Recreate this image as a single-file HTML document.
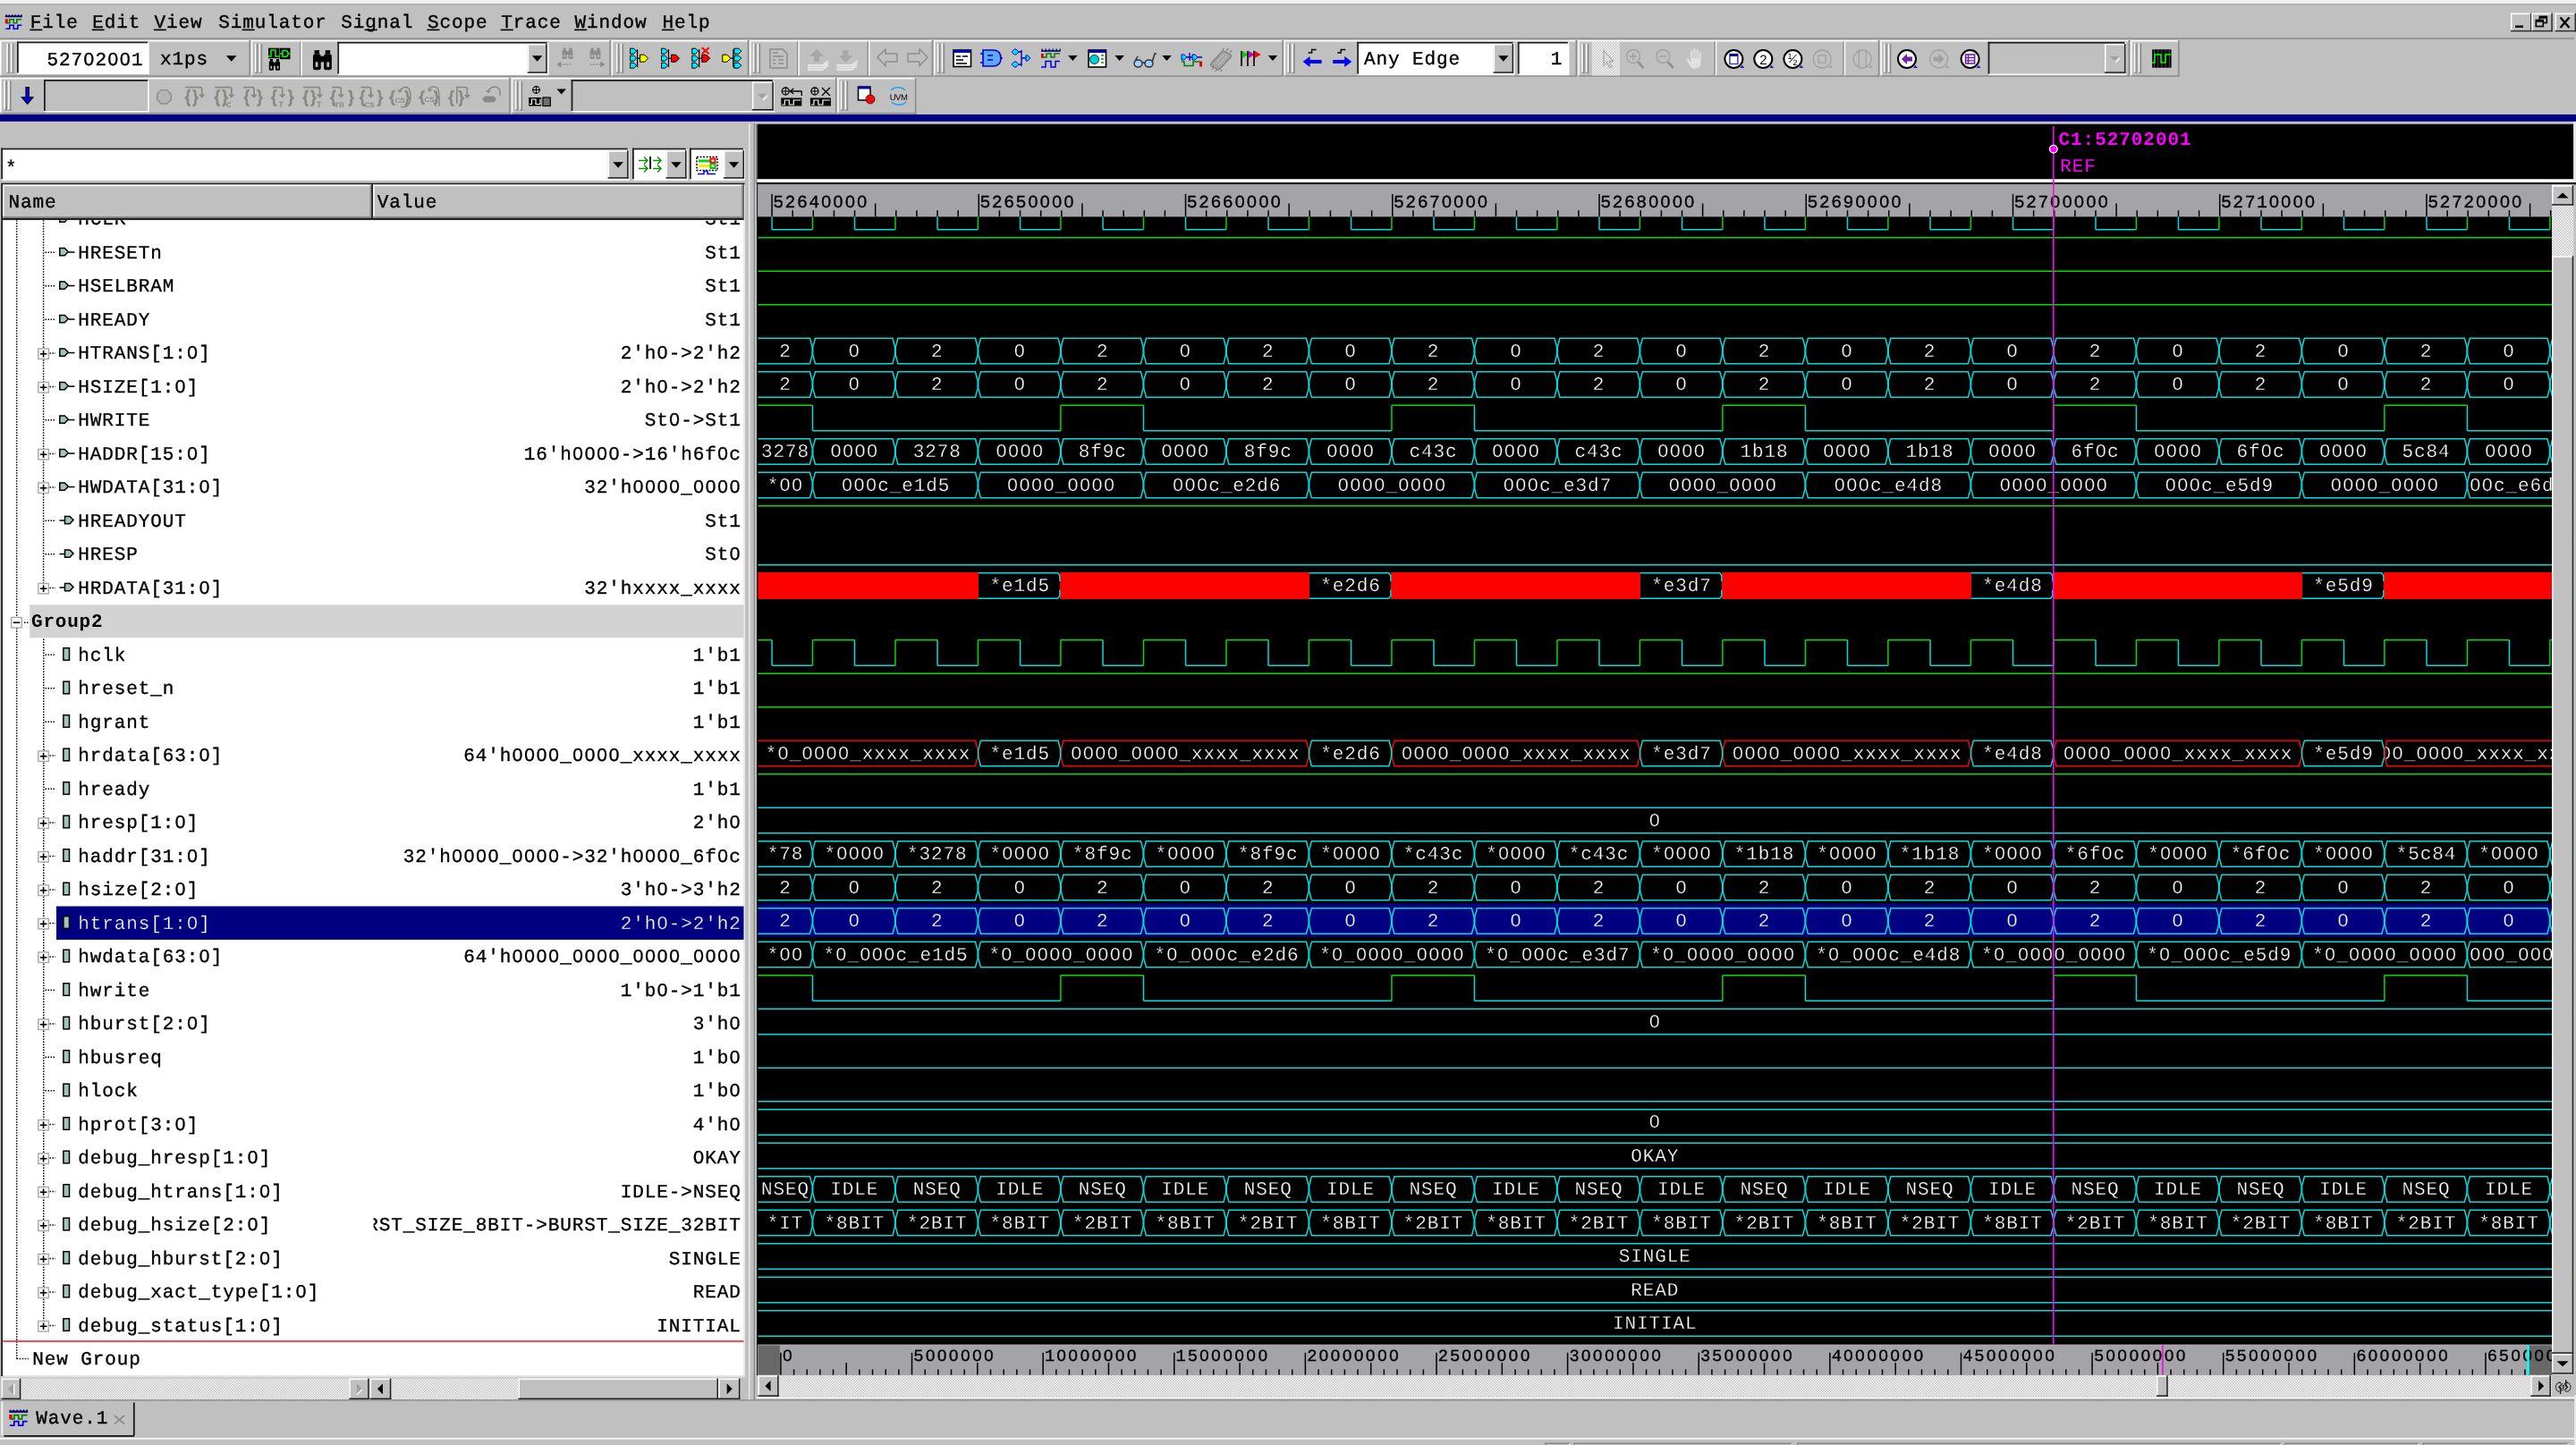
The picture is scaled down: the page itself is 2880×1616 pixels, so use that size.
<!DOCTYPE html>
<html><head><meta charset="utf-8"><title>nWave</title>
<style>html,body{margin:0;padding:0;width:2880px;height:1616px;overflow:hidden;background:#c0c0c0}
svg{display:block;will-change:transform}</style></head><body>
<svg width="2880" height="1616" viewBox="0 0 2880 1616" text-rendering="geometricPrecision">
<defs><pattern id="dith" x="0" y="0" width="3" height="3" patternUnits="userSpaceOnUse"><rect width="3" height="3" fill="#c8c8c8"/><rect width="1.5" height="1.5" fill="#f4f4f4"/><rect x="1.5" y="1.5" width="1.5" height="1.5" fill="#f4f4f4"/></pattern>
<clipPath id="listclip"><rect x="3.2" y="246.2" width="828.5" height="1292.4"/></clipPath>
<clipPath id="valclip"><rect x="417.6" y="246.2" width="414" height="1292.4"/></clipPath>
<clipPath id="rulclip"><rect x="847.4" y="206.4" width="2005.6" height="36"/></clipPath>
<clipPath id="wclip"><rect x="847.4" y="242.4" width="2005.6" height="1261.2"/></clipPath>
<clipPath id="clipR8"><rect x="2759.87" y="0" width="400" height="1616"/></clipPath>
<clipPath id="clipR16"><rect x="2667.37" y="0" width="400" height="1616"/></clipPath>
<clipPath id="clipR22"><rect x="2759.87" y="0" width="400" height="1616"/></clipPath>
<clipPath id="bclip"><rect x="847.4" y="1504.3" width="2005.6" height="33.5"/></clipPath></defs>
<rect x="0" y="0" width="2880" height="1616" fill="#c0c0c0" />
<rect x="0" y="0" width="2880" height="4.2" fill="#efefef" />
<rect x="0" y="4.2" width="2880" height="1.2" fill="#a8a8a8" />
<text x="33.8" y="31" font-family="'Liberation Mono', monospace" font-size="21" letter-spacing="0.9" font-weight="normal" fill="#000000" text-anchor="start" stroke="#000" stroke-width="0.35">File</text>
<rect x="33.3" y="32.6" width="14" height="1.6" fill="#000000" />
<text x="103.2" y="31" font-family="'Liberation Mono', monospace" font-size="21" letter-spacing="0.9" font-weight="normal" fill="#000000" text-anchor="start" stroke="#000" stroke-width="0.35">Edit</text>
<rect x="102.7" y="32.6" width="14" height="1.6" fill="#000000" />
<text x="172.4" y="31" font-family="'Liberation Mono', monospace" font-size="21" letter-spacing="0.9" font-weight="normal" fill="#000000" text-anchor="start" stroke="#000" stroke-width="0.35">View</text>
<rect x="171.9" y="32.6" width="14" height="1.6" fill="#000000" />
<text x="244.2" y="31" font-family="'Liberation Mono', monospace" font-size="21" letter-spacing="0.9" font-weight="normal" fill="#000000" text-anchor="start" stroke="#000" stroke-width="0.35">Simulator</text>
<rect x="270.7" y="32.6" width="14" height="1.6" fill="#000000" />
<text x="381.2" y="31" font-family="'Liberation Mono', monospace" font-size="21" letter-spacing="0.9" font-weight="normal" fill="#000000" text-anchor="start" stroke="#000" stroke-width="0.35">Signal</text>
<rect x="407.7" y="32.6" width="14" height="1.6" fill="#000000" />
<text x="477.9" y="31" font-family="'Liberation Mono', monospace" font-size="21" letter-spacing="0.9" font-weight="normal" fill="#000000" text-anchor="start" stroke="#000" stroke-width="0.35">Scope</text>
<rect x="477.4" y="32.6" width="14" height="1.6" fill="#000000" />
<text x="560.2" y="31" font-family="'Liberation Mono', monospace" font-size="21" letter-spacing="0.9" font-weight="normal" fill="#000000" text-anchor="start" stroke="#000" stroke-width="0.35">Trace</text>
<rect x="559.7" y="32.6" width="14" height="1.6" fill="#000000" />
<text x="642.6" y="31" font-family="'Liberation Mono', monospace" font-size="21" letter-spacing="0.9" font-weight="normal" fill="#000000" text-anchor="start" stroke="#000" stroke-width="0.35">Window</text>
<rect x="642.1" y="32.6" width="14" height="1.6" fill="#000000" />
<text x="740.4" y="31" font-family="'Liberation Mono', monospace" font-size="21" letter-spacing="0.9" font-weight="normal" fill="#000000" text-anchor="start" stroke="#000" stroke-width="0.35">Help</text>
<rect x="739.9" y="32.6" width="14" height="1.6" fill="#000000" />
<g transform="translate(5.8,16.3) scale(1)"><rect x="0" y="1" width="19" height="2" fill="#000070"/><rect x="0.5" y="0" width="1.3" height="2" fill="#000070"/><rect x="3.9" y="0" width="1.3" height="2" fill="#000070"/><rect x="7.3" y="0" width="1.3" height="2" fill="#000070"/><rect x="10.7" y="0" width="1.3" height="2" fill="#000070"/><rect x="14.1" y="0" width="1.3" height="2" fill="#000070"/><rect x="17.5" y="0" width="1.3" height="2" fill="#000070"/><rect x="0" y="5" width="3" height="5" fill="#e00000"/><polyline points="2,9.5 5,9.5 5,5.5 9.5,5.5 9.5,9.5 13,9.5 13,5.5 18.5,5.5" fill="none" stroke="#008000" stroke-width="1.6"/><polyline points="0.5,16 5,16 5,12 9.5,12 9.5,16 14,16 14,12 18.5,12" fill="none" stroke="#0000e0" stroke-width="1.6"/></g>
<rect x="2807" y="14.6" width="23.5" height="20.8" fill="#c0c0c0" />
<rect x="2807" y="14.6" width="23.5" height="1.5" fill="#ffffff" />
<rect x="2807" y="14.6" width="1.5" height="20.8" fill="#ffffff" />
<rect x="2807" y="33.9" width="23.5" height="1.5" fill="#303030" />
<rect x="2829" y="14.6" width="1.5" height="20.8" fill="#303030" />
<rect x="2812" y="28.5" width="9" height="2.4" fill="#000000" />
<rect x="2830.3" y="14.6" width="23.5" height="20.8" fill="#c0c0c0" />
<rect x="2830.3" y="14.6" width="23.5" height="1.5" fill="#ffffff" />
<rect x="2830.3" y="14.6" width="1.5" height="20.8" fill="#ffffff" />
<rect x="2830.3" y="33.9" width="23.5" height="1.5" fill="#303030" />
<rect x="2852.3" y="14.6" width="1.5" height="20.8" fill="#303030" />
<rect x="2839.3" y="18.5" width="8" height="7" fill="none" stroke="#000" stroke-width="1.6"/>
<rect x="2835.3" y="22.5" width="8" height="7" fill="#c0c0c0" stroke="#000" stroke-width="1.6"/>
<rect x="2835.3" y="22.5" width="8" height="2.2" fill="#000000" />
<rect x="2839.3" y="18.5" width="8" height="2.2" fill="#000000" />
<rect x="2856.5" y="14.6" width="23.5" height="20.8" fill="#c0c0c0" />
<rect x="2856.5" y="14.6" width="23.5" height="1.5" fill="#ffffff" />
<rect x="2856.5" y="14.6" width="1.5" height="20.8" fill="#ffffff" />
<rect x="2856.5" y="33.9" width="23.5" height="1.5" fill="#303030" />
<rect x="2878.5" y="14.6" width="1.5" height="20.8" fill="#303030" />
<path d="M2862.5,19.5 L2872.5,31 M2872.5,19.5 L2862.5,31" stroke="#000" stroke-width="2.4"/>
<rect x="0" y="42.3" width="2878" height="1.5" fill="#8c8c8c" />
<rect x="0" y="45" width="279.9" height="1.5" fill="#ffffff" />
<rect x="0" y="45" width="1.5" height="40.8" fill="#ffffff" />
<rect x="278.4" y="45" width="1.5" height="40.8" fill="#8a8a8a" />
<rect x="0" y="84.3" width="279.9" height="1.5" fill="#8a8a8a" />
<rect x="280.8" y="45" width="402" height="1.5" fill="#ffffff" />
<rect x="280.8" y="45" width="1.5" height="40.8" fill="#ffffff" />
<rect x="681.3" y="45" width="1.5" height="40.8" fill="#8a8a8a" />
<rect x="280.8" y="84.3" width="402" height="1.5" fill="#8a8a8a" />
<rect x="683.6" y="45" width="153.6" height="1.5" fill="#ffffff" />
<rect x="683.6" y="45" width="1.5" height="40.8" fill="#ffffff" />
<rect x="835.7" y="45" width="1.5" height="40.8" fill="#8a8a8a" />
<rect x="683.6" y="84.3" width="153.6" height="1.5" fill="#8a8a8a" />
<rect x="838" y="45" width="205.2" height="1.5" fill="#ffffff" />
<rect x="838" y="45" width="1.5" height="40.8" fill="#ffffff" />
<rect x="1041.7" y="45" width="1.5" height="40.8" fill="#8a8a8a" />
<rect x="838" y="84.3" width="205.2" height="1.5" fill="#8a8a8a" />
<rect x="1044" y="45" width="390.8" height="1.5" fill="#ffffff" />
<rect x="1044" y="45" width="1.5" height="40.8" fill="#ffffff" />
<rect x="1433.3" y="45" width="1.5" height="40.8" fill="#8a8a8a" />
<rect x="1044" y="84.3" width="390.8" height="1.5" fill="#8a8a8a" />
<rect x="1435.6" y="45" width="327.4" height="1.5" fill="#ffffff" />
<rect x="1435.6" y="45" width="1.5" height="40.8" fill="#ffffff" />
<rect x="1761.5" y="45" width="1.5" height="40.8" fill="#8a8a8a" />
<rect x="1435.6" y="84.3" width="327.4" height="1.5" fill="#8a8a8a" />
<rect x="1764.3" y="45" width="337" height="1.5" fill="#ffffff" />
<rect x="1764.3" y="45" width="1.5" height="40.8" fill="#ffffff" />
<rect x="2099.8" y="45" width="1.5" height="40.8" fill="#8a8a8a" />
<rect x="1764.3" y="84.3" width="337" height="1.5" fill="#8a8a8a" />
<rect x="2102.3" y="45" width="278.7" height="1.5" fill="#ffffff" />
<rect x="2102.3" y="45" width="1.5" height="40.8" fill="#ffffff" />
<rect x="2379.5" y="45" width="1.5" height="40.8" fill="#8a8a8a" />
<rect x="2102.3" y="84.3" width="278.7" height="1.5" fill="#8a8a8a" />
<rect x="2382" y="45" width="54.6" height="1.5" fill="#ffffff" />
<rect x="2382" y="45" width="1.5" height="40.8" fill="#ffffff" />
<rect x="2435.1" y="45" width="1.5" height="40.8" fill="#8a8a8a" />
<rect x="2382" y="84.3" width="54.6" height="1.5" fill="#8a8a8a" />
<rect x="0" y="87" width="570.6" height="1.5" fill="#ffffff" />
<rect x="0" y="87" width="1.5" height="40.6" fill="#ffffff" />
<rect x="569.1" y="87" width="1.5" height="40.6" fill="#8a8a8a" />
<rect x="0" y="126.1" width="570.6" height="1.5" fill="#8a8a8a" />
<rect x="571.8" y="87" width="363.6" height="1.5" fill="#ffffff" />
<rect x="571.8" y="87" width="1.5" height="40.6" fill="#ffffff" />
<rect x="933.9" y="87" width="1.5" height="40.6" fill="#8a8a8a" />
<rect x="571.8" y="126.1" width="363.6" height="1.5" fill="#8a8a8a" />
<rect x="936.2" y="87" width="88.2" height="1.5" fill="#ffffff" />
<rect x="936.2" y="87" width="1.5" height="40.6" fill="#ffffff" />
<rect x="1022.9" y="87" width="1.5" height="40.6" fill="#8a8a8a" />
<rect x="936.2" y="126.1" width="88.2" height="1.5" fill="#8a8a8a" />
<rect x="7.3" y="48.8" width="1.6" height="33" fill="#ffffff" />
<rect x="8.9" y="48.8" width="1.8" height="33" fill="#8c8c8c" />
<rect x="7.3" y="80.6" width="3.4" height="1.2" fill="#8c8c8c" />
<rect x="12.1" y="48.8" width="1.6" height="33" fill="#ffffff" />
<rect x="13.7" y="48.8" width="1.8" height="33" fill="#8c8c8c" />
<rect x="12.1" y="80.6" width="3.4" height="1.2" fill="#8c8c8c" />
<rect x="285" y="48.8" width="1.6" height="33" fill="#ffffff" />
<rect x="286.6" y="48.8" width="1.8" height="33" fill="#8c8c8c" />
<rect x="285" y="80.6" width="3.4" height="1.2" fill="#8c8c8c" />
<rect x="289.8" y="48.8" width="1.6" height="33" fill="#ffffff" />
<rect x="291.4" y="48.8" width="1.8" height="33" fill="#8c8c8c" />
<rect x="289.8" y="80.6" width="3.4" height="1.2" fill="#8c8c8c" />
<rect x="689" y="48.8" width="1.6" height="33" fill="#ffffff" />
<rect x="690.6" y="48.8" width="1.8" height="33" fill="#8c8c8c" />
<rect x="689" y="80.6" width="3.4" height="1.2" fill="#8c8c8c" />
<rect x="693.8" y="48.8" width="1.6" height="33" fill="#ffffff" />
<rect x="695.4" y="48.8" width="1.8" height="33" fill="#8c8c8c" />
<rect x="693.8" y="80.6" width="3.4" height="1.2" fill="#8c8c8c" />
<rect x="842" y="48.8" width="1.6" height="33" fill="#ffffff" />
<rect x="843.6" y="48.8" width="1.8" height="33" fill="#8c8c8c" />
<rect x="842" y="80.6" width="3.4" height="1.2" fill="#8c8c8c" />
<rect x="846.8" y="48.8" width="1.6" height="33" fill="#ffffff" />
<rect x="848.4" y="48.8" width="1.8" height="33" fill="#8c8c8c" />
<rect x="846.8" y="80.6" width="3.4" height="1.2" fill="#8c8c8c" />
<rect x="1048" y="48.8" width="1.6" height="33" fill="#ffffff" />
<rect x="1049.6" y="48.8" width="1.8" height="33" fill="#8c8c8c" />
<rect x="1048" y="80.6" width="3.4" height="1.2" fill="#8c8c8c" />
<rect x="1052.8" y="48.8" width="1.6" height="33" fill="#ffffff" />
<rect x="1054.4" y="48.8" width="1.8" height="33" fill="#8c8c8c" />
<rect x="1052.8" y="80.6" width="3.4" height="1.2" fill="#8c8c8c" />
<rect x="1439.5" y="48.8" width="1.6" height="33" fill="#ffffff" />
<rect x="1441.1" y="48.8" width="1.8" height="33" fill="#8c8c8c" />
<rect x="1439.5" y="80.6" width="3.4" height="1.2" fill="#8c8c8c" />
<rect x="1444.3" y="48.8" width="1.6" height="33" fill="#ffffff" />
<rect x="1445.9" y="48.8" width="1.8" height="33" fill="#8c8c8c" />
<rect x="1444.3" y="80.6" width="3.4" height="1.2" fill="#8c8c8c" />
<rect x="1768.2" y="48.8" width="1.6" height="33" fill="#ffffff" />
<rect x="1769.8" y="48.8" width="1.8" height="33" fill="#8c8c8c" />
<rect x="1768.2" y="80.6" width="3.4" height="1.2" fill="#8c8c8c" />
<rect x="1773" y="48.8" width="1.6" height="33" fill="#ffffff" />
<rect x="1774.6" y="48.8" width="1.8" height="33" fill="#8c8c8c" />
<rect x="1773" y="80.6" width="3.4" height="1.2" fill="#8c8c8c" />
<rect x="2106.2" y="48.8" width="1.6" height="33" fill="#ffffff" />
<rect x="2107.8" y="48.8" width="1.8" height="33" fill="#8c8c8c" />
<rect x="2106.2" y="80.6" width="3.4" height="1.2" fill="#8c8c8c" />
<rect x="2111" y="48.8" width="1.6" height="33" fill="#ffffff" />
<rect x="2112.6" y="48.8" width="1.8" height="33" fill="#8c8c8c" />
<rect x="2111" y="80.6" width="3.4" height="1.2" fill="#8c8c8c" />
<rect x="2386" y="48.8" width="1.6" height="33" fill="#ffffff" />
<rect x="2387.6" y="48.8" width="1.8" height="33" fill="#8c8c8c" />
<rect x="2386" y="80.6" width="3.4" height="1.2" fill="#8c8c8c" />
<rect x="2390.8" y="48.8" width="1.6" height="33" fill="#ffffff" />
<rect x="2392.4" y="48.8" width="1.8" height="33" fill="#8c8c8c" />
<rect x="2390.8" y="80.6" width="3.4" height="1.2" fill="#8c8c8c" />
<rect x="4.4" y="90.6" width="1.6" height="33.2" fill="#ffffff" />
<rect x="6" y="90.6" width="1.8" height="33.2" fill="#8c8c8c" />
<rect x="4.4" y="122.6" width="3.4" height="1.2" fill="#8c8c8c" />
<rect x="9.2" y="90.6" width="1.6" height="33.2" fill="#ffffff" />
<rect x="10.8" y="90.6" width="1.8" height="33.2" fill="#8c8c8c" />
<rect x="9.2" y="122.6" width="3.4" height="1.2" fill="#8c8c8c" />
<rect x="576" y="90.6" width="1.6" height="33.2" fill="#ffffff" />
<rect x="577.6" y="90.6" width="1.8" height="33.2" fill="#8c8c8c" />
<rect x="576" y="122.6" width="3.4" height="1.2" fill="#8c8c8c" />
<rect x="580.8" y="90.6" width="1.6" height="33.2" fill="#ffffff" />
<rect x="582.4" y="90.6" width="1.8" height="33.2" fill="#8c8c8c" />
<rect x="580.8" y="122.6" width="3.4" height="1.2" fill="#8c8c8c" />
<rect x="940" y="90.6" width="1.6" height="33.2" fill="#ffffff" />
<rect x="941.6" y="90.6" width="1.8" height="33.2" fill="#8c8c8c" />
<rect x="940" y="122.6" width="3.4" height="1.2" fill="#8c8c8c" />
<rect x="944.8" y="90.6" width="1.6" height="33.2" fill="#ffffff" />
<rect x="946.4" y="90.6" width="1.8" height="33.2" fill="#8c8c8c" />
<rect x="944.8" y="122.6" width="3.4" height="1.2" fill="#8c8c8c" />
<rect x="19" y="46.5" width="147.5" height="36.5" fill="#ffffff" />
<rect x="19" y="46.5" width="147.5" height="1.8" fill="#202020" />
<rect x="19" y="46.5" width="1.8" height="36.5" fill="#202020" />
<rect x="19" y="81.5" width="147.5" height="1.5" fill="#ffffff" />
<rect x="165" y="46.5" width="1.5" height="36.5" fill="#ffffff" />
<text x="52.4" y="72.7" font-family="'Liberation Mono', monospace" font-size="21" letter-spacing="0.9" font-weight="normal" fill="#000000" text-anchor="start" stroke="#000" stroke-width="0.35">52702001</text><rect x="97.2" y="63" width="4" height="5" fill="#ffffff"/><rect x="124.2" y="63" width="4" height="5" fill="#ffffff"/><rect x="137.7" y="63" width="4" height="5" fill="#ffffff"/>
<text x="179" y="72.3" font-family="'Liberation Mono', monospace" font-size="21" letter-spacing="0.9" font-weight="normal" fill="#000000" text-anchor="start" stroke="#000" stroke-width="0.35">x1ps</text>
<polygon points="252.95,62.25 264.45,62.25 258.7,68.75" fill="#000000"/>
<rect x="300" y="53.7" width="12.5" height="11.5" fill="#000000" />
<rect x="313" y="53.7" width="11.5" height="12.5" fill="#000000" />
<polyline points="300,63 303,63 303,56 308,56 308,63 313,63" fill="none" stroke="#00ff00" stroke-width="1.5"/>
<path d="M313,60 h3 M316,56.5 h3 q3,0 3,3.5 q0,3.5 -3,3.5 h-3 z M322,60 h2.5" fill="none" stroke="#00ff00" stroke-width="1.5"/>
<g transform="translate(300.5,66) scale(0.64)" fill="#000000"><rect x="2" y="0" width="5" height="4"/><rect x="13" y="0" width="5" height="4"/><rect x="0.5" y="4" width="8" height="16" rx="2"/><rect x="11.5" y="4" width="8" height="16" rx="2"/><rect x="7" y="6" width="6" height="6"/><rect x="3" y="12" width="2.5" height="5" fill="#c0c0c0"/><rect x="14.5" y="12" width="2.5" height="5" fill="#c0c0c0"/></g>
<rect x="335" y="46.4" width="1.4" height="38" fill="#8c8c8c" />
<rect x="336.4" y="46.4" width="1.4" height="38" fill="#ffffff" />
<g transform="translate(349.4,56.2) scale(1.1)" fill="#000000"><rect x="2" y="0" width="5" height="4"/><rect x="13" y="0" width="5" height="4"/><rect x="0.5" y="4" width="8" height="16" rx="2"/><rect x="11.5" y="4" width="8" height="16" rx="2"/><rect x="7" y="6" width="6" height="6"/><rect x="3" y="12" width="2.5" height="5" fill="#c0c0c0"/><rect x="14.5" y="12" width="2.5" height="5" fill="#c0c0c0"/></g>
<rect x="377.3" y="46.8" width="236" height="37.3" fill="#ffffff" />
<rect x="377.3" y="46.8" width="236" height="1.8" fill="#202020" />
<rect x="377.3" y="46.8" width="1.8" height="37.3" fill="#202020" />
<rect x="377.3" y="82.6" width="236" height="1.5" fill="#ffffff" />
<rect x="611.8" y="46.8" width="1.5" height="37.3" fill="#ffffff" />
<rect x="589.7" y="49" width="22" height="32.8" fill="#c0c0c0" />
<rect x="589.7" y="49" width="22" height="1.5" fill="#ffffff" />
<rect x="589.7" y="49" width="1.5" height="32.8" fill="#ffffff" />
<rect x="589.7" y="80.3" width="22" height="1.5" fill="#202020" />
<rect x="610.2" y="49" width="1.5" height="32.8" fill="#202020" />
<polygon points="594.95,62.25 606.45,62.25 600.7,68.75" fill="#000000"/>
<g transform="translate(628.3,53.5) scale(0.62)" fill="#8c8c8c"><rect x="2" y="0" width="5" height="4"/><rect x="13" y="0" width="5" height="4"/><rect x="0.5" y="4" width="8" height="16" rx="2"/><rect x="11.5" y="4" width="8" height="16" rx="2"/><rect x="7" y="6" width="6" height="6"/><rect x="3" y="12" width="2.5" height="5" fill="#c0c0c0"/><rect x="14.5" y="12" width="2.5" height="5" fill="#c0c0c0"/></g>
<path d="M622.3,72 l5,-3.5 v7 z" fill="#8c8c8c"/>
<path d="M626.3,72 h12" stroke="#8c8c8c" stroke-width="1.3" stroke-dasharray="2 1.5"/>
<g transform="translate(659.3,53.5) scale(0.62)" fill="#8c8c8c"><rect x="2" y="0" width="5" height="4"/><rect x="13" y="0" width="5" height="4"/><rect x="0.5" y="4" width="8" height="16" rx="2"/><rect x="11.5" y="4" width="8" height="16" rx="2"/><rect x="7" y="6" width="6" height="6"/><rect x="3" y="12" width="2.5" height="5" fill="#c0c0c0"/><rect x="14.5" y="12" width="2.5" height="5" fill="#c0c0c0"/></g>
<path d="M676.3,72 l-5,-3.5 v7 z" fill="#8c8c8c"/>
<path d="M659.3,72 h12" stroke="#8c8c8c" stroke-width="1.3" stroke-dasharray="2 1.5"/>
<g transform="translate(704.6,53.2)"><path d="M0,1 h4 l3,3 l-3,3 h-4 z" fill="#00e8ff" stroke="#000" stroke-width="1"/><path d="M0,9 h4 l3,3 l-3,3 h-4 z" fill="#00e8ff" stroke="#000" stroke-width="1"/><path d="M0,17 h4 l3,3 l-3,3 h-4 z" fill="#00e8ff" stroke="#000" stroke-width="1"/><path d="M8,2 v20" stroke="#000" stroke-width="1.2"/><path d="M8,12 h3" stroke="#000" stroke-width="1.2"/><path d="M11,8 h5 l4,4 l-4,4 h-5 z" fill="#ffff00" stroke="#000" stroke-width="1"/></g>
<g transform="translate(739.5,53.2)"><path d="M0,1 h4 l3,3 l-3,3 h-4 z" fill="#00e8ff" stroke="#000" stroke-width="1"/><path d="M0,9 h4 l3,3 l-3,3 h-4 z" fill="#00e8ff" stroke="#000" stroke-width="1"/><path d="M0,17 h4 l3,3 l-3,3 h-4 z" fill="#00e8ff" stroke="#000" stroke-width="1"/><path d="M8,2 v20" stroke="#000" stroke-width="1.2"/><path d="M8,12 h3" stroke="#000" stroke-width="1.2"/><path d="M11,8 h5 l4,4 l-4,4 h-5 z" fill="#ff0000" stroke="#000" stroke-width="1"/></g>
<g transform="translate(773.7,53.2)"><path d="M0,1 h4 l3,3 l-3,3 h-4 z" fill="#00e8ff" stroke="#000" stroke-width="1"/><path d="M0,9 h4 l3,3 l-3,3 h-4 z" fill="#00e8ff" stroke="#000" stroke-width="1"/><path d="M0,17 h4 l3,3 l-3,3 h-4 z" fill="#00e8ff" stroke="#000" stroke-width="1"/><path d="M8,2 v20" stroke="#000" stroke-width="1.2"/><path d="M8,12 h3" stroke="#000" stroke-width="1.2"/><path d="M11,8 h5 l4,4 l-4,4 h-5 z" fill="#ff0000" stroke="#000" stroke-width="1"/><path d="M11,0 l8,7 M19,0 l-8,7" stroke="#ff0000" stroke-width="2"/></g>
<g transform="translate(807.8,53.2)"><path d="M0,8 h5 l4,4 l-4,4 h-5 z" fill="#ffff00" stroke="#000" stroke-width="1"/><path d="M9,12 h3 M12,2 v20" stroke="#000" stroke-width="1.2"/><path d="M13,1 h5 l3,3 l-3,3 h-5 z" fill="#00e8ff" stroke="#000" stroke-width="1"/><path d="M13,9 h5 l3,3 l-3,3 h-5 z" fill="#00e8ff" stroke="#000" stroke-width="1"/><path d="M13,17 h5 l3,3 l-3,3 h-5 z" fill="#00e8ff" stroke="#000" stroke-width="1"/></g>
<path d="M861,55 h14 l5,5 v16 h-19 z" fill="none" stroke="#8c8c8c" stroke-width="1.5"/>
<path d="M864,59 h6 M864,63 h12 M864,67 h3 M870,67 h6 M864,71 h3 M870,71 h6" stroke="#8c8c8c" stroke-width="1.4"/>
<rect x="891" y="46.4" width="1.4" height="38" fill="#8c8c8c" />
<rect x="892.4" y="46.4" width="1.4" height="38" fill="#ffffff" />
<path d="M913,55 l8,8 h-5 v6 h-6 v-6 h-5 z" fill="#a8a8a8"/>
<path d="M903,73 h17 l6,-5" fill="none" stroke="#f0f0f0" stroke-width="1.3"/>
<path d="M903,75.5 h17 l6,-5" fill="none" stroke="#f0f0f0" stroke-width="1.3"/>
<path d="M903,78 h17 l6,-5" fill="none" stroke="#f0f0f0" stroke-width="1.3"/>
<path d="M945.4,70 l8,-8 h-5 v-6 h-6 v6 h-5 z" fill="#a8a8a8"/>
<path d="M935.4,73 h17 l6,-5" fill="none" stroke="#f0f0f0" stroke-width="1.3"/>
<path d="M935.4,75.5 h17 l6,-5" fill="none" stroke="#f0f0f0" stroke-width="1.3"/>
<path d="M935.4,78 h17 l6,-5" fill="none" stroke="#f0f0f0" stroke-width="1.3"/>
<rect x="969.6" y="46.4" width="1.4" height="38" fill="#8c8c8c" />
<rect x="971" y="46.4" width="1.4" height="38" fill="#ffffff" />
<path d="M981,64 l9,-9 v5 h13 v9 h-13 v5 z" fill="none" stroke="#8c8c8c" stroke-width="1.4"/>
<path d="M1037,64 l-9,-9 v5 h-13 v9 h13 v5 z" fill="none" stroke="#8c8c8c" stroke-width="1.4"/>
<rect x="1066" y="56" width="19.5" height="18.5" fill="#fff" stroke="#000" stroke-width="1.6"/>
<rect x="1066" y="56" width="19.5" height="3" fill="#0000c0" />
<path d="M1069,63 h5 M1076,63 h6 M1069,67 h8 M1069,71 h12" stroke="#000" stroke-width="1.3"/>
<path d="M1099,56 h11 q9,0 9,9 q0,9 -9,9 h-11 z" fill="#60a8ff" stroke="#0000d0" stroke-width="1.6"/>
<path d="M1096,60 h3 M1096,70 h3 M1119,65 h2 M1104,62 h6 M1104,67 h6" stroke="#0000d0" stroke-width="1.4"/>
<path d="M1136,58 h6 M1136,72 h6 M1142,56 v18 M1142,65 h5" stroke="#0000d0" stroke-width="1.4"/>
<path d="M1131,58 l3,-3 h2 l3,3 l-3,3 h-2 z" fill="#00e0ff" stroke="#0000d0" stroke-width="1"/>
<path d="M1131,72 l3,-3 h2 l3,3 l-3,3 h-2 z" fill="#00e0ff" stroke="#0000d0" stroke-width="1"/>
<path d="M1147,62 h2 l3,3 l-3,3 h-2 z" fill="#00e0ff" stroke="#0000d0" stroke-width="1"/>
<path d="M1164,57 h21" stroke="#000070" stroke-width="1.6"/>
<rect x="1164.5" y="54.5" width="1.3" height="3" fill="#000070" />
<rect x="1168.5" y="54.5" width="1.3" height="3" fill="#000070" />
<rect x="1172.5" y="54.5" width="1.3" height="3" fill="#000070" />
<rect x="1176.5" y="54.5" width="1.3" height="3" fill="#000070" />
<rect x="1180.5" y="54.5" width="1.3" height="3" fill="#000070" />
<rect x="1184.5" y="54.5" width="1.3" height="3" fill="#000070" />
<rect x="1164" y="60" width="2.8" height="5" fill="#e00000" />
<polyline points="1166,64 1170,64 1170,60 1175,60 1175,64 1179,64 1179,60 1185,60" fill="none" stroke="#008000" stroke-width="1.5"/>
<polyline points="1164,75 1169,75 1169,68.5 1175,68.5 1175,75 1180,75 1180,68.5 1185,68.5" fill="none" stroke="#0000e0" stroke-width="1.5"/>
<polygon points="1194.15,62 1204.65,62 1199.4,68" fill="#000000"/>
<rect x="1217" y="56" width="19.5" height="19" fill="#fff" stroke="#000" stroke-width="1.6"/>
<rect x="1217" y="56" width="19.5" height="3" fill="#0000c0" />
<circle cx="1223.5" cy="66.5" r="5" fill="#00d0d0" stroke="#004040" stroke-width="1"/>
<path d="M1231,62 h3 M1231,66 h3 M1231,70 h3" stroke="#00a000" stroke-width="1.5"/>
<polygon points="1246.35,62 1256.85,62 1251.6,68" fill="#000000"/>
<path d="M1268,71 a4.5,4 0 1 0 9,0 a4.5,4 0 1 0 -9,0 M1280,71 a4.5,4 0 1 0 9,0 a4.5,4 0 1 0 -9,0 M1277,70 h3 M1268,70 l4,-7 M1288,70 l3,-10 h2" fill="#a0d0ff" stroke="#303030" stroke-width="1.5"/>
<polygon points="1299.25,62 1309.75,62 1304.5,68" fill="#000000"/>
<path d="M1321,61 h3 l3,3 l-3,3 h-3 z M1333,61 h3 l3,3 l-3,3 h-3 z" fill="#00e0ff" stroke="#0000d0" stroke-width="1"/>
<path d="M1327,64 h6 M1330,59 v9 M1339,64 h5" stroke="#0000d0" stroke-width="1.3"/>
<polyline points="1321,69 1324,69 1324,73.5 1334,73.5 1334,69 1341,69" fill="none" stroke="#008000" stroke-width="1.5"/>
<rect x="1341" y="68.5" width="3" height="6" fill="#e00000" />
<path d="M1354,71 l12,-13 q1.5,-1.5 3,-0.5 l7,4 q1,1 0,2.5 l-12,13 q-1.5,1.5 -3,0.5 l-7,-4 q-1,-1 0,-2.5 z" fill="#a4a4a4" stroke="#7c7c7c" stroke-width="1.2"/>
<path d="M1357,75 l-2,3 M1361,77 l-2,3 M1366,78 l-1,2 M1371,57 l2,-3 M1375,59 l2,-3 M1367,56 l1,-2" stroke="#7c7c7c" stroke-width="1.3"/>
<path d="M1359,71 l10,-11 M1362,73 l10,-11" stroke="#c8c8c8" stroke-width="1"/>
<path d="M1388,57 v17" stroke="#000" stroke-width="1.6"/>
<path d="M1388.8,57 l7,4 l-7,4 z" fill="#00d000"/>
<path d="M1395,57 v17" stroke="#000" stroke-width="1.6"/>
<path d="M1395.8,57 l7,4 l-7,4 z" fill="#c000c0"/>
<path d="M1402,57 v17" stroke="#000" stroke-width="1.6"/>
<path d="M1402.8,57 l7,4 l-7,4 z" fill="#ff0000"/>
<polygon points="1417.75,62 1428.25,62 1423,68" fill="#000000"/>
<path d="M1462.6,59 h4 v-3.5 h5" fill="none" stroke="#000" stroke-width="1.4"/>
<path d="M1456.6,69 l8,-6 v4 h13 v4 h-13 v4 z" fill="#0000ff"/>
<path d="M1495.2,59 h4 v-3.5 h5" fill="none" stroke="#000" stroke-width="1.4"/>
<path d="M1511.2,69 l-8,-6 v4 h-13 v4 h13 v4 z" fill="#0000ff"/>
<rect x="1517.2" y="46.8" width="176" height="37.3" fill="#ffffff" />
<rect x="1517.2" y="46.8" width="176" height="1.8" fill="#202020" />
<rect x="1517.2" y="46.8" width="1.8" height="37.3" fill="#202020" />
<rect x="1517.2" y="82.6" width="176" height="1.5" fill="#ffffff" />
<rect x="1691.7" y="46.8" width="1.5" height="37.3" fill="#ffffff" />
<text x="1525" y="72.3" font-family="'Liberation Mono', monospace" font-size="21" letter-spacing="0.9" font-weight="normal" fill="#000000" text-anchor="start" stroke="#000" stroke-width="0.35">Any Edge</text>
<rect x="1669.6" y="49" width="22.5" height="32.8" fill="#c0c0c0" />
<rect x="1669.6" y="49" width="22.5" height="1.5" fill="#ffffff" />
<rect x="1669.6" y="49" width="1.5" height="32.8" fill="#ffffff" />
<rect x="1669.6" y="80.3" width="22.5" height="1.5" fill="#202020" />
<rect x="1690.6" y="49" width="1.5" height="32.8" fill="#202020" />
<polygon points="1675.05,62.25 1686.55,62.25 1680.8,68.75" fill="#000000"/>
<rect x="1696.8" y="46.8" width="57.5" height="37.3" fill="#ffffff" />
<rect x="1696.8" y="46.8" width="57.5" height="1.8" fill="#202020" />
<rect x="1696.8" y="46.8" width="1.8" height="37.3" fill="#202020" />
<rect x="1696.8" y="82.6" width="57.5" height="1.5" fill="#ffffff" />
<rect x="1752.8" y="46.8" width="1.5" height="37.3" fill="#ffffff" />
<text x="1733.7" y="72.3" font-family="'Liberation Mono', monospace" font-size="21" letter-spacing="0.9" font-weight="normal" fill="#000000" text-anchor="start" stroke="#000" stroke-width="0.35">1</text>
<rect x="1779.8" y="47" width="31.2" height="37.5" fill="url(#dith)" />
<path d="M1793,57 v16 l3.5,-3.5 l3,6 l2.5,-1 l-3,-6 h5 z" fill="none" stroke="#8c8c8c" stroke-width="1.3" stroke-dasharray="1.5 1"/>
<circle cx="1826" cy="63" r="7.5" fill="none" stroke="#a0a0a0" stroke-width="1.4"/>
<path d="M1822,63 h8 M1826,59 v8 M1831,69 l5.5,6" stroke="#a0a0a0" stroke-width="1.5"/>
<path d="M1831.5,69.5 l6,6.5" stroke="#909090" stroke-width="2.6"/>
<circle cx="1859.3" cy="63" r="7.5" fill="none" stroke="#a0a0a0" stroke-width="1.4"/>
<path d="M1855.3,63 h8  M1864.3,69 l5.5,6" stroke="#a0a0a0" stroke-width="1.5"/>
<path d="M1864.8,69.5 l6,6.5" stroke="#909090" stroke-width="2.6"/>
<path d="M1889,74 l-4,-8 q1,-2 3,0 l2,3 v-12 q2,-2 3,0 v8 v-10 q2,-2 3,0 v10 v-9 q2,-2 3,0 v9 v-6 q2,-2 3,0 v10 q0,7 -6,8 h-4 z" fill="#e0e0e0" stroke="#c8c8c8" stroke-width="1"/>
<rect x="1916.5" y="46.4" width="1.4" height="38" fill="#8c8c8c" />
<rect x="1917.9" y="46.4" width="1.4" height="38" fill="#ffffff" />
<circle cx="1938.4" cy="66" r="10" fill="#fff" stroke="#000" stroke-width="2"/>
<path d="M1945.4,76 l5,0 l-2.5,-3 z" fill="#2020a0"/>
<rect x="1933.9" y="60.5" width="9" height="11" fill="#fff" stroke="#4040c0" stroke-width="1.5"/><rect x="1933.9" y="60.5" width="9" height="2.5" fill="#000080"/>
<circle cx="1971.3" cy="66" r="10" fill="#fff" stroke="#000" stroke-width="2"/>
<path d="M1978.3,76 l5,0 l-2.5,-3 z" fill="#2020a0"/>
<text x="1971.3" y="71.5" font-family="Liberation Sans" font-size="15" text-anchor="middle" fill="#000">2</text>
<circle cx="2004.4" cy="66" r="10" fill="#fff" stroke="#000" stroke-width="2"/>
<path d="M2011.4,76 l5,0 l-2.5,-3 z" fill="#2020a0"/>
<text x="1998.4" y="66" font-family="Liberation Sans" font-size="9" fill="#000">1</text><path d="M2000.4,70 l8,-9" stroke="#000" stroke-width="1"/><text x="2004.4" y="73" font-family="Liberation Sans" font-size="9" fill="#000">2</text>
<circle cx="2037.2" cy="66" r="10" fill="none" stroke="#a0a0a0" stroke-width="1.3"/>
<path d="M2044.2,76 l5,0 l-2.5,-3 z" fill="#a0a0a0"/>
<rect x="2033.2" y="62" width="8" height="8" fill="none" stroke="#a0a0a0" stroke-width="1.3"/>
<rect x="2060.4" y="46.4" width="1.4" height="38" fill="#8c8c8c" />
<rect x="2061.8" y="46.4" width="1.4" height="38" fill="#ffffff" />
<circle cx="2082.2" cy="66" r="10" fill="none" stroke="#a0a0a0" stroke-width="1.3"/>
<path d="M2089.2,76 l5,0 l-2.5,-3 z" fill="#a0a0a0"/>
<path d="M2078.2,57 v18 M2086.2,57 v18" stroke="#a0a0a0" stroke-width="1.3"/>
<circle cx="2132" cy="66" r="10" fill="#fff" stroke="#000" stroke-width="2"/>
<path d="M2139,76 l5,0 l-2.5,-3 z" fill="#2020a0"/>
<path d="M2126,66 l6,-6 v3.5 h6 v5 h-6 v3.5 z" fill="#7020a0"/>
<circle cx="2167.6" cy="66" r="10" fill="none" stroke="#a0a0a0" stroke-width="1.3"/>
<path d="M2174.6,76 l5,0 l-2.5,-3 z" fill="#a0a0a0"/>
<path d="M2173.6,66 l-6,-6 v3.5 h-6 v5 h6 v3.5 z" fill="#a0a0a0"/>
<circle cx="2202.6" cy="66" r="10" fill="#fff" stroke="#000" stroke-width="2"/>
<path d="M2209.6,76 l5,0 l-2.5,-3 z" fill="#2020a0"/>
<rect x="2197.6" y="61" width="10" height="10" fill="none" stroke="#7020a0" stroke-width="1.6"/><path d="M2197.6,64.5 h10 M2197.6,67.8 h10 M2200.6,61 v10" stroke="#7020a0" stroke-width="1.3"/>
<rect x="2222.6" y="46.8" width="154.5" height="37.3" fill="#c0c0c0" />
<rect x="2222.6" y="46.8" width="154.5" height="1.8" fill="#202020" />
<rect x="2222.6" y="46.8" width="1.8" height="37.3" fill="#202020" />
<rect x="2222.6" y="82.6" width="154.5" height="1.5" fill="#ffffff" />
<rect x="2375.6" y="46.8" width="1.5" height="37.3" fill="#ffffff" />
<rect x="2353" y="49" width="23.5" height="32.8" fill="#c0c0c0" />
<rect x="2353" y="49" width="23.5" height="1.5" fill="#ffffff" />
<rect x="2353" y="49" width="1.5" height="32.8" fill="#ffffff" />
<rect x="2353" y="80.3" width="23.5" height="1.5" fill="#202020" />
<rect x="2375" y="49" width="1.5" height="32.8" fill="#202020" />
<path d="M2359,63 h10 l-5,5 z" fill="#a0a0a0"/><path d="M2365,70 l5,-5" stroke="#fff" stroke-width="1.2"/>
<rect x="2406.2" y="55.3" width="21.4" height="20.4" fill="#000000" />
<rect x="2408" y="55.3" width="1" height="20.4" fill="#505050" />
<rect x="2412.2" y="55.3" width="1" height="20.4" fill="#505050" />
<rect x="2416.4" y="55.3" width="1" height="20.4" fill="#505050" />
<rect x="2420.6" y="55.3" width="1" height="20.4" fill="#505050" />
<rect x="2424.8" y="55.3" width="1" height="20.4" fill="#505050" />
<polyline points="2406,70 2409,70 2409,61 2416,61 2416,70 2421,70 2421,61 2427.5,61" fill="none" stroke="#00ff00" stroke-width="1.5"/>
<path d="M29,97.6 h3.4 v11.2 h4.6 l-6.3,7.6 l-6.3,-7.6 h4.6 z" fill="#0000ff" stroke="#000" stroke-width="1.2"/>
<rect x="49" y="89.1" width="117.7" height="36.4" fill="#c0c0c0" />
<rect x="49" y="89.1" width="117.7" height="1.8" fill="#202020" />
<rect x="49" y="89.1" width="1.8" height="36.4" fill="#202020" />
<rect x="49" y="124" width="117.7" height="1.5" fill="#ffffff" />
<rect x="165.2" y="89.1" width="1.5" height="36.4" fill="#ffffff" />
<path d="M180.3,100.6 h6.4 l4.5,4.5 v6.4 l-4.5,4.5 h-6.4 l-4.5,-4.5 v-6.4 z" fill="#b6b6b6" stroke="#8c8c8c" stroke-width="1.4"/>
<path d="M213,101 q-3,0 -3,3 v3.5 l-2,2 l2,2 v3.5 q0,3 3,3" fill="none" stroke="#8a8882" stroke-width="2.6"/>
<path d="M215.5,101 q3,0 3,3 v3.5 l2,2 l-2,2 v3.5 q0,3 -3,3" fill="none" stroke="#8a8882" stroke-width="2.6"/>
<path d="M207.3,97.6 h16.4 q2,0 2,2 v7.1" fill="none" stroke="#8a8882" stroke-width="1.7"/>
<path d="M221.95,105.5 h7.5 l-3.75,4.2 z" fill="#8a8882"/>
<path d="M245.9,101 q-3,0 -3,3 v3.5 l-2,2 l2,2 v3.5 q0,3 3,3" fill="none" stroke="#8a8882" stroke-width="2.6"/>
<path d="M248.5,101 q3,0 3,3 v3.5 l2,2 l-2,2 v3.5 q0,3 -3,3" fill="none" stroke="#8a8882" stroke-width="2.6"/>
<path d="M240.2,97.6 h16.6 q2,0 2,2 v7.1" fill="none" stroke="#8a8882" stroke-width="1.7"/>
<path d="M255.05,105.5 h7.5 l-3.75,4.2 z" fill="#8a8882"/>
<text x="252.8" y="119.5" font-family="Liberation Sans" font-size="10.5" font-weight="bold" fill="#8a8882">c</text>
<path d="M278.8,101 q-3,0 -3,3 v3.5 l-2,2 l2,2 v3.5 q0,3 3,3" fill="none" stroke="#8a8882" stroke-width="2.6"/>
<path d="M287.5,101 q3,0 3,3 v3.5 l2,2 l-2,2 v3.5 q0,3 -3,3" fill="none" stroke="#8a8882" stroke-width="2.6"/>
<path d="M271.9,97.6 h10.1 q2,0 2,2 v7.4" fill="none" stroke="#8a8882" stroke-width="1.7"/>
<path d="M280.25,105.8 h7.5 l-3.75,4.2 z" fill="#8a8882"/>
<path d="M309.3,101 q-3,0 -3,3 v3.5 l-2,2 l2,2 v3.5 q0,3 3,3" fill="none" stroke="#8a8882" stroke-width="2.6"/>
<path d="M322.2,101 q3,0 3,3 v3.5 l2,2 l-2,2 v3.5 q0,3 -3,3" fill="none" stroke="#8a8882" stroke-width="2.6"/>
<path d="M304.8,97.6 h8.9 q2,0 2,2 v7.1" fill="none" stroke="#8a8882" stroke-width="1.7"/>
<path d="M311.95,105.5 h7.5 l-3.75,4.2 z" fill="#8a8882"/>
<text x="311.4" y="120" font-family="Liberation Sans" font-size="9" font-weight="bold" fill="#8a8882">T</text>
<path d="M344.8,101.5 q-3,0 -3,3 v3.25 l-2,2 l2,2 v3.25 q0,3 3,3" fill="none" stroke="#8a8882" stroke-width="2.6"/>
<path d="M347.5,101.5 q3,0 3,3 v3.25 l2,2 l-2,2 v3.25 q0,3 -3,3" fill="none" stroke="#8a8882" stroke-width="2.6"/>
<path d="M338.9,97.6 h16.6 q2,0 2,2 v7.1" fill="none" stroke="#8a8882" stroke-width="1.7"/>
<path d="M353.75,105.5 h7.5 l-3.75,4.2 z" fill="#8a8882"/>
<text x="354" y="120" font-family="Liberation Sans" font-size="9" font-weight="bold" fill="#8a8882">T</text>
<path d="M375.5,101.5 q-3,0 -3,3 v3.25 l-2,2 l2,2 v3.25 q0,3 3,3" fill="none" stroke="#8a8882" stroke-width="2.6"/>
<path d="M389.6,101.5 q3,0 3,3 v3.25 l2,2 l-2,2 v3.25 q0,3 -3,3" fill="none" stroke="#8a8882" stroke-width="2.6"/>
<path d="M371,97.6 h8.3 q2,0 2,2 v7.1" fill="none" stroke="#8a8882" stroke-width="1.7"/>
<path d="M377.55,105.5 h7.5 l-3.75,4.2 z" fill="#8a8882"/>
<text x="374" y="119.5" font-family="Liberation Sans" font-size="8" font-weight="bold" fill="#8a8882">TB</text>
<path d="M408.1,101.5 q-3,0 -3,3 v3.25 l-2,2 l2,2 v3.25 q0,3 3,3" fill="none" stroke="#8a8882" stroke-width="2.6"/>
<path d="M421.8,101.5 q3,0 3,3 v3.25 l2,2 l-2,2 v3.25 q0,3 -3,3" fill="none" stroke="#8a8882" stroke-width="2.6"/>
<path d="M403.6,97.6 h9 q2,0 2,2 v7.1" fill="none" stroke="#8a8882" stroke-width="1.7"/>
<path d="M410.85,105.5 h7.5 l-3.75,4.2 z" fill="#8a8882"/>
<text x="407.5" y="120" font-family="Liberation Sans" font-size="8" font-weight="bold" fill="#8a8882">CS</text>
<path d="M441.5,102 q-3,0 -3,3 v2.5 l-2,2 l2,2 v2.5 q0,3 3,3" fill="none" stroke="#8a8882" stroke-width="2.6"/>
<path d="M452.5,102 q3,0 3,3 v2.5 l2,2 l-2,2 v2.5 q0,3 -3,3" fill="none" stroke="#8a8882" stroke-width="2.6"/>
<text x="441.5" y="114.5" font-family="Liberation Sans" font-size="8" font-weight="bold" fill="#8a8882">CS</text>
<path d="M447,101.5 q2,-4 8,-4 q4,2 4,10 q0,10 -6,12 h-5" fill="none" stroke="#8a8882" stroke-width="1.5"/><path d="M444,100.5 l3,3.5 l3,-3.5 z" fill="#8a8882"/>
<path d="M474.7,102 q-3,0 -3,3 v2 l-2,2 l2,2 v2 q0,3 3,3" fill="none" stroke="#8a8882" stroke-width="2.6"/>
<path d="M485,102 q3,0 3,3 v2 l2,2 l-2,2 v2 q0,3 -3,3" fill="none" stroke="#8a8882" stroke-width="2.6"/>
<text x="474.5" y="113.5" font-family="Liberation Sans" font-size="8" font-weight="bold" fill="#8a8882">CS</text>
<path d="M480,100 q0,-3 5,-3 q6,0 6,10 v12 M487,112 v7" fill="none" stroke="#8a8882" stroke-width="1.5"/><path d="M477.5,99.5 l3,3.5 l3,-3.5 z" fill="#8a8882"/>
<path d="M507.5,102 q-3,0 -3,3 v3 l-2,2 l2,2 v3 q0,3 3,3" fill="none" stroke="#8a8882" stroke-width="2.6"/>
<path d="M512.7,102 q3,0 3,3 v3 l2,2 l-2,2 v3 q0,3 -3,3" fill="none" stroke="#8a8882" stroke-width="2.6"/>
<path d="M510.8,116 v-18.5 h9.5 q2,0 2,2 v7" fill="none" stroke="#8a8882" stroke-width="1.7"/><path d="M518.6,106 h7.5 l-3.75,4.2 z" fill="#8a8882"/>
<path d="M539,111 l3,-3.5 h10 l3,3.5 l-3,3.5 h-10 z" fill="#8a8882"/>
<path d="M546,101 q3,-4 8,-4 q5,1 5,7 v3" fill="none" stroke="#8a8882" stroke-width="1.6"/><path d="M543,101 l3,3.5 l3,-3.5 z" fill="#8a8882"/>
<circle cx="599.5" cy="100.5" r="3.8" fill="none" stroke="#000" stroke-width="1.2"/><path d="M595.5,100.5 h8 M599.5,96.5 v8" stroke="#000" stroke-width="1"/>
<rect x="591.2" y="109" width="14" height="9.5" fill="#000000" />
<polyline points="592,116.5 594.5,116.5 594.5,111 599,111 599,116.5 604,116.5 604,111" fill="none" stroke="#fff" stroke-width="1.2"/>
<rect x="607" y="109" width="8.3" height="9.5" fill="#707070" />
<rect x="607" y="109" width="8.3" height="9.5" fill="none" stroke="#000" stroke-width="1.2"/>
<polygon points="622.45,99.5 632.95,99.5 627.7,105.5" fill="#000000"/>
<rect x="638.6" y="89.1" width="227" height="36.4" fill="#c0c0c0" />
<rect x="638.6" y="89.1" width="227" height="1.8" fill="#202020" />
<rect x="638.6" y="89.1" width="1.8" height="36.4" fill="#202020" />
<rect x="638.6" y="124" width="227" height="1.5" fill="#ffffff" />
<rect x="864.1" y="89.1" width="1.5" height="36.4" fill="#ffffff" />
<rect x="841" y="91.5" width="23.8" height="32" fill="#c0c0c0" />
<rect x="841" y="91.5" width="23.8" height="1.5" fill="#ffffff" />
<rect x="841" y="91.5" width="1.5" height="32" fill="#ffffff" />
<rect x="841" y="122" width="23.8" height="1.5" fill="#202020" />
<rect x="863.3" y="91.5" width="1.5" height="32" fill="#202020" />
<path d="M847,105 h10 l-5,5 z" fill="#a0a0a0"/><path d="M853,112 l5,-5" stroke="#fff" stroke-width="1.2"/>
<circle cx="878.3" cy="102" r="4" fill="none" stroke="#000" stroke-width="1.3"/><path d="M874.3,102 h8 M878.3,98 v8" stroke="#000" stroke-width="1"/>
<rect x="873.3" y="109.5" width="23" height="9" fill="#000000" />
<polyline points="874.3,117 877.3,117 877.3,112 882.3,112 882.3,117 887.3,117 887.3,112 895.3,112" fill="none" stroke="#fff" stroke-width="1.2"/>
<path d="M883.3,102 h13 M883.3,102 l4,-3 M883.3,102 l4,3 M896.3,102 v5" fill="none" stroke="#000" stroke-width="1.3"/>
<circle cx="910.9" cy="102" r="4" fill="none" stroke="#000" stroke-width="1.3"/><path d="M906.9,102 h8 M910.9,98 v8" stroke="#000" stroke-width="1"/>
<rect x="905.9" y="109.5" width="23" height="9" fill="#000000" />
<polyline points="906.9,117 909.9,117 909.9,112 914.9,112 914.9,117 919.9,117 919.9,112 927.9,112" fill="none" stroke="#fff" stroke-width="1.2"/>
<path d="M918.9,98 l9,9 M927.9,98 l-9,9" stroke="#000" stroke-width="1.3"/>
<rect x="959.5" y="97" width="13.5" height="15" fill="#fff" stroke="#000" stroke-width="1.5"/>
<rect x="959.5" y="97" width="13.5" height="2.5" fill="#0000c0" />
<circle cx="973" cy="111" r="5" fill="#e01010" stroke="#a00000" stroke-width="1"/>
<text x="1004.5" y="111.5" font-family="Liberation Sans" font-size="9.5" text-anchor="middle" fill="#000" letter-spacing="-0.5">UVM</text>
<path d="M996,101 a10,8 0 0 1 16,0 M1013,114 a10,8 0 0 1 -16,0" fill="none" stroke="#20a0ff" stroke-width="1.6"/>
<rect x="0" y="128" width="2880" height="7.8" fill="#000080" />
<rect x="1.2" y="165.6" width="702.2" height="36.1" fill="#ffffff" />
<rect x="1.2" y="165.6" width="702.2" height="1.8" fill="#202020" />
<rect x="1.2" y="165.6" width="1.8" height="36.1" fill="#202020" />
<rect x="1.2" y="200.2" width="702.2" height="1.5" fill="#ffffff" />
<rect x="701.9" y="165.6" width="1.5" height="36.1" fill="#ffffff" />
<text x="6" y="193.5" font-family="'Liberation Mono', monospace" font-size="21" letter-spacing="0.9" font-weight="normal" fill="#000000" text-anchor="start" stroke="#000" stroke-width="0.35">*</text>
<rect x="679.6" y="168.2" width="23" height="31.5" fill="#c0c0c0" />
<rect x="679.6" y="168.2" width="23" height="1.5" fill="#ffffff" />
<rect x="679.6" y="168.2" width="1.5" height="31.5" fill="#ffffff" />
<rect x="679.6" y="198.2" width="23" height="1.5" fill="#202020" />
<rect x="701.1" y="168.2" width="1.5" height="31.5" fill="#202020" />
<polygon points="685.35,181.25 696.85,181.25 691.1,187.75" fill="#000000"/>
<rect x="707" y="165.6" width="61.5" height="36.1" fill="#ffffff" />
<rect x="707" y="165.6" width="61.5" height="1.8" fill="#202020" />
<rect x="707" y="165.6" width="1.8" height="36.1" fill="#202020" />
<rect x="707" y="200.2" width="61.5" height="1.5" fill="#ffffff" />
<rect x="767" y="165.6" width="1.5" height="36.1" fill="#ffffff" />
<path d="M714,179.5 h10 M720,175.5 l4,4 l-4,4 M714,188.5 h10 M720,184.5 l4,4 l-4,4 M727,175 v14 M730,179.5 h9 M735,175.5 l4,4 l-4,4 M730,188.5 h9 M735,184.5 l4,4 l-4,4" fill="none" stroke="#109010" stroke-width="1.5"/>
<rect x="726.3" y="175" width="1.6" height="14" fill="#000" />
<rect x="744.5" y="168.2" width="23" height="31.5" fill="#c0c0c0" />
<rect x="744.5" y="168.2" width="23" height="1.5" fill="#ffffff" />
<rect x="744.5" y="168.2" width="1.5" height="31.5" fill="#ffffff" />
<rect x="744.5" y="198.2" width="23" height="1.5" fill="#202020" />
<rect x="766" y="168.2" width="1.5" height="31.5" fill="#202020" />
<polygon points="750.25,181.25 761.75,181.25 756,187.75" fill="#000000"/>
<rect x="771" y="165.6" width="61.5" height="36.1" fill="#ffffff" />
<rect x="771" y="165.6" width="61.5" height="1.8" fill="#202020" />
<rect x="771" y="165.6" width="1.8" height="36.1" fill="#202020" />
<rect x="771" y="200.2" width="61.5" height="1.5" fill="#ffffff" />
<rect x="831" y="165.6" width="1.5" height="36.1" fill="#ffffff" />
<rect x="779" y="175.5" width="23" height="15" fill="none" stroke="#000" stroke-width="1.5" stroke-dasharray="2 1.5"/>
<rect x="781" y="178.5" width="13" height="3" fill="#10d010" />
<rect x="781" y="184" width="13" height="3" fill="#f0f000" />
<rect x="794.5" y="177.5" width="5" height="4.5" fill="#fff" stroke="#ff0000" stroke-width="2"/>
<rect x="794.5" y="183.5" width="5" height="4.5" fill="#fff" stroke="#10c010" stroke-width="2"/>
<polyline points="780,194.5 787,194.5 787,191.5 791,191.5 791,194.5 800,194.5" fill="none" stroke="#0000ff" stroke-width="1.5"/>
<rect x="809" y="168.2" width="23" height="31.5" fill="#c0c0c0" />
<rect x="809" y="168.2" width="23" height="1.5" fill="#ffffff" />
<rect x="809" y="168.2" width="1.5" height="31.5" fill="#ffffff" />
<rect x="809" y="198.2" width="23" height="1.5" fill="#202020" />
<rect x="830.5" y="168.2" width="1.5" height="31.5" fill="#202020" />
<polygon points="814.75,181.25 826.25,181.25 820.5,187.75" fill="#000000"/>
<rect x="1.2" y="204.7" width="831.3" height="41.5" fill="#202020" />
<rect x="3.1" y="206.3" width="412" height="37.2" fill="#c0c0c0" />
<rect x="3.1" y="206.6" width="412" height="1.5" fill="#ffffff" />
<rect x="3.1" y="206.6" width="1.5" height="37" fill="#ffffff" />
<rect x="413.6" y="206.6" width="1.5" height="37" fill="#8c8c8c" />
<rect x="3.1" y="242" width="412" height="1.5" fill="#8c8c8c" />
<rect x="417.2" y="206.3" width="413.3" height="37.2" fill="#c0c0c0" />
<rect x="417.2" y="206.6" width="413.3" height="1.5" fill="#ffffff" />
<rect x="417.2" y="206.6" width="1.5" height="37" fill="#ffffff" />
<rect x="829" y="206.6" width="1.5" height="37" fill="#8c8c8c" />
<rect x="417.2" y="242" width="413.3" height="1.5" fill="#8c8c8c" />
<text x="9.6" y="232" font-family="'Liberation Mono', monospace" font-size="21" letter-spacing="0.9" font-weight="normal" fill="#000000" text-anchor="start" stroke="#000" stroke-width="0.35">Name</text>
<text x="421.8" y="232" font-family="'Liberation Mono', monospace" font-size="21" letter-spacing="0.9" font-weight="normal" fill="#000000" text-anchor="start" stroke="#000" stroke-width="0.35">Value</text>
<rect x="1.2" y="246.2" width="2" height="1293.8" fill="#202020" />
<rect x="3.2" y="246.2" width="828.5" height="1292.4" fill="#ffffff" />
<rect x="831.7" y="206.2" width="1.5" height="1333.8" fill="#e8e8e8" />
<rect x="1.2" y="1539" width="831" height="1.5" fill="#e0e0e0" />
<g clip-path="url(#listclip)">
<rect x="33.2" y="676.3" width="798.5" height="37" fill="#d3d3d3" />
<rect x="63" y="1013.5" width="768.7" height="37.4" fill="#000080" />
<line x1="18.7" y1="246.2" x2="18.7" y2="1519.5" stroke="#000" stroke-width="1.5" stroke-dasharray="1.5 1.5"/>
<line x1="18.7" y1="1519.5" x2="31.8" y2="1519.5" stroke="#000" stroke-width="1.5" stroke-dasharray="1.5 1.5"/>
<line x1="48.6" y1="246.2" x2="48.6" y2="657" stroke="#000" stroke-width="1.5" stroke-dasharray="1.5 1.5"/>
<line x1="48.8" y1="714.5" x2="48.8" y2="1482" stroke="#000" stroke-width="1.5" stroke-dasharray="1.5 1.5"/>
<line x1="50.5" y1="244.8" x2="62" y2="244.8" stroke="#000" stroke-width="1.5" stroke-dasharray="1.5 1.5"/>
<path d="M66.8,239.9 h5.5 l4,4.2 l-4,4.2 h-5.5 z" fill="#a4c4b4" stroke="#000" stroke-width="1.5"/>
<rect x="76.5" y="243.8" width="7" height="1.5" fill="#000000" />
<text x="87.2" y="251.4" font-family="'Liberation Mono', monospace" font-size="21" letter-spacing="0.9" font-weight="normal" fill="#000000" text-anchor="start" stroke="#000" stroke-width="0.35">HCLK</text>
<g clip-path="url(#valclip)">
<text x="788.3" y="251.4" font-family="'Liberation Mono', monospace" font-size="21" letter-spacing="0.9" font-weight="normal" fill="#000000" text-anchor="start" stroke="#000" stroke-width="0.35">St1</text>
</g>
<line x1="50.5" y1="282.3" x2="62" y2="282.3" stroke="#000" stroke-width="1.5" stroke-dasharray="1.5 1.5"/>
<path d="M66.8,277.4 h5.5 l4,4.2 l-4,4.2 h-5.5 z" fill="#a4c4b4" stroke="#000" stroke-width="1.5"/>
<rect x="76.5" y="281.3" width="7" height="1.5" fill="#000000" />
<text x="87.2" y="288.9" font-family="'Liberation Mono', monospace" font-size="21" letter-spacing="0.9" font-weight="normal" fill="#000000" text-anchor="start" stroke="#000" stroke-width="0.35">HRESETn</text>
<g clip-path="url(#valclip)">
<text x="788.3" y="288.9" font-family="'Liberation Mono', monospace" font-size="21" letter-spacing="0.9" font-weight="normal" fill="#000000" text-anchor="start" stroke="#000" stroke-width="0.35">St1</text>
</g>
<line x1="50.5" y1="319.8" x2="62" y2="319.8" stroke="#000" stroke-width="1.5" stroke-dasharray="1.5 1.5"/>
<path d="M66.8,314.9 h5.5 l4,4.2 l-4,4.2 h-5.5 z" fill="#a4c4b4" stroke="#000" stroke-width="1.5"/>
<rect x="76.5" y="318.8" width="7" height="1.5" fill="#000000" />
<text x="87.2" y="326.4" font-family="'Liberation Mono', monospace" font-size="21" letter-spacing="0.9" font-weight="normal" fill="#000000" text-anchor="start" stroke="#000" stroke-width="0.35">HSELBRAM</text>
<g clip-path="url(#valclip)">
<text x="788.3" y="326.4" font-family="'Liberation Mono', monospace" font-size="21" letter-spacing="0.9" font-weight="normal" fill="#000000" text-anchor="start" stroke="#000" stroke-width="0.35">St1</text>
</g>
<line x1="50.5" y1="357.3" x2="62" y2="357.3" stroke="#000" stroke-width="1.5" stroke-dasharray="1.5 1.5"/>
<path d="M66.8,352.4 h5.5 l4,4.2 l-4,4.2 h-5.5 z" fill="#a4c4b4" stroke="#000" stroke-width="1.5"/>
<rect x="76.5" y="356.3" width="7" height="1.5" fill="#000000" />
<text x="87.2" y="363.9" font-family="'Liberation Mono', monospace" font-size="21" letter-spacing="0.9" font-weight="normal" fill="#000000" text-anchor="start" stroke="#000" stroke-width="0.35">HREADY</text>
<g clip-path="url(#valclip)">
<text x="788.3" y="363.9" font-family="'Liberation Mono', monospace" font-size="21" letter-spacing="0.9" font-weight="normal" fill="#000000" text-anchor="start" stroke="#000" stroke-width="0.35">St1</text>
</g>
<rect x="42.85" y="389.95" width="11.5" height="11.5" fill="#fff" stroke="#a8a8a8" stroke-width="1.4"/>
<rect x="44.8" y="394.95" width="7.6" height="1.6" fill="#000000" />
<rect x="47.8" y="391.9" width="1.6" height="7.6" fill="#000000" />
<line x1="55.5" y1="395" x2="62" y2="395" stroke="#000" stroke-width="1.5" stroke-dasharray="1.5 1.5"/>
<path d="M66.8,389.9 h5.5 l4,4.2 l-4,4.2 h-5.5 z" fill="#a4c4b4" stroke="#000" stroke-width="1.5"/>
<rect x="76.5" y="393.8" width="7" height="1.5" fill="#000000" />
<text x="87.2" y="401.4" font-family="'Liberation Mono', monospace" font-size="21" letter-spacing="0.9" font-weight="normal" fill="#000000" text-anchor="start" stroke="#000" stroke-width="0.35">HTRANS[1:0]</text><rect x="213" y="391.7" width="4" height="5" fill="#ffffff"/>
<g clip-path="url(#valclip)">
<text x="693.8" y="401.4" font-family="'Liberation Mono', monospace" font-size="21" letter-spacing="0.9" font-weight="normal" fill="#000000" text-anchor="start" stroke="#000" stroke-width="0.35">2'h0-&gt;2'h2</text><rect x="738.6" y="391.7" width="4" height="5" fill="#ffffff"/>
</g>
<rect x="42.85" y="427.45" width="11.5" height="11.5" fill="#fff" stroke="#a8a8a8" stroke-width="1.4"/>
<rect x="44.8" y="432.45" width="7.6" height="1.6" fill="#000000" />
<rect x="47.8" y="429.4" width="1.6" height="7.6" fill="#000000" />
<line x1="55.5" y1="432.5" x2="62" y2="432.5" stroke="#000" stroke-width="1.5" stroke-dasharray="1.5 1.5"/>
<path d="M66.8,427.4 h5.5 l4,4.2 l-4,4.2 h-5.5 z" fill="#a4c4b4" stroke="#000" stroke-width="1.5"/>
<rect x="76.5" y="431.3" width="7" height="1.5" fill="#000000" />
<text x="87.2" y="438.9" font-family="'Liberation Mono', monospace" font-size="21" letter-spacing="0.9" font-weight="normal" fill="#000000" text-anchor="start" stroke="#000" stroke-width="0.35">HSIZE[1:0]</text><rect x="199.5" y="429.2" width="4" height="5" fill="#ffffff"/>
<g clip-path="url(#valclip)">
<text x="693.8" y="438.9" font-family="'Liberation Mono', monospace" font-size="21" letter-spacing="0.9" font-weight="normal" fill="#000000" text-anchor="start" stroke="#000" stroke-width="0.35">2'h0-&gt;2'h2</text><rect x="738.6" y="429.2" width="4" height="5" fill="#ffffff"/>
</g>
<line x1="50.5" y1="469.8" x2="62" y2="469.8" stroke="#000" stroke-width="1.5" stroke-dasharray="1.5 1.5"/>
<path d="M66.8,464.9 h5.5 l4,4.2 l-4,4.2 h-5.5 z" fill="#a4c4b4" stroke="#000" stroke-width="1.5"/>
<rect x="76.5" y="468.8" width="7" height="1.5" fill="#000000" />
<text x="87.2" y="476.4" font-family="'Liberation Mono', monospace" font-size="21" letter-spacing="0.9" font-weight="normal" fill="#000000" text-anchor="start" stroke="#000" stroke-width="0.35">HWRITE</text>
<g clip-path="url(#valclip)">
<text x="720.8" y="476.4" font-family="'Liberation Mono', monospace" font-size="21" letter-spacing="0.9" font-weight="normal" fill="#000000" text-anchor="start" stroke="#000" stroke-width="0.35">St0-&gt;St1</text><rect x="752.1" y="466.7" width="4" height="5" fill="#ffffff"/>
</g>
<rect x="42.85" y="502.45" width="11.5" height="11.5" fill="#fff" stroke="#a8a8a8" stroke-width="1.4"/>
<rect x="44.8" y="507.45" width="7.6" height="1.6" fill="#000000" />
<rect x="47.8" y="504.4" width="1.6" height="7.6" fill="#000000" />
<line x1="55.5" y1="507.5" x2="62" y2="507.5" stroke="#000" stroke-width="1.5" stroke-dasharray="1.5 1.5"/>
<path d="M66.8,502.4 h5.5 l4,4.2 l-4,4.2 h-5.5 z" fill="#a4c4b4" stroke="#000" stroke-width="1.5"/>
<rect x="76.5" y="506.3" width="7" height="1.5" fill="#000000" />
<text x="87.2" y="513.9" font-family="'Liberation Mono', monospace" font-size="21" letter-spacing="0.9" font-weight="normal" fill="#000000" text-anchor="start" stroke="#000" stroke-width="0.35">HADDR[15:0]</text><rect x="213" y="504.2" width="4" height="5" fill="#ffffff"/>
<g clip-path="url(#valclip)">
<text x="585.8" y="513.9" font-family="'Liberation Mono', monospace" font-size="21" letter-spacing="0.9" font-weight="normal" fill="#000000" text-anchor="start" stroke="#000" stroke-width="0.35">16'h0000-&gt;16'h6f0c</text><rect x="644.1" y="504.2" width="4" height="5" fill="#ffffff"/><rect x="657.6" y="504.2" width="4" height="5" fill="#ffffff"/><rect x="671.1" y="504.2" width="4" height="5" fill="#ffffff"/><rect x="684.6" y="504.2" width="4" height="5" fill="#ffffff"/><rect x="806.1" y="504.2" width="4" height="5" fill="#ffffff"/>
</g>
<rect x="42.85" y="539.95" width="11.5" height="11.5" fill="#fff" stroke="#a8a8a8" stroke-width="1.4"/>
<rect x="44.8" y="544.95" width="7.6" height="1.6" fill="#000000" />
<rect x="47.8" y="541.9" width="1.6" height="7.6" fill="#000000" />
<line x1="55.5" y1="545" x2="62" y2="545" stroke="#000" stroke-width="1.5" stroke-dasharray="1.5 1.5"/>
<path d="M66.8,539.9 h5.5 l4,4.2 l-4,4.2 h-5.5 z" fill="#a4c4b4" stroke="#000" stroke-width="1.5"/>
<rect x="76.5" y="543.8" width="7" height="1.5" fill="#000000" />
<text x="87.2" y="551.4" font-family="'Liberation Mono', monospace" font-size="21" letter-spacing="0.9" font-weight="normal" fill="#000000" text-anchor="start" stroke="#000" stroke-width="0.35">HWDATA[31:0]</text><rect x="226.5" y="541.7" width="4" height="5" fill="#ffffff"/>
<g clip-path="url(#valclip)">
<text x="653.3" y="551.4" font-family="'Liberation Mono', monospace" font-size="21" letter-spacing="0.9" font-weight="normal" fill="#000000" text-anchor="start" stroke="#000" stroke-width="0.35">32'h0000_0000</text><rect x="711.6" y="541.7" width="4" height="5" fill="#ffffff"/><rect x="725.1" y="541.7" width="4" height="5" fill="#ffffff"/><rect x="738.6" y="541.7" width="4" height="5" fill="#ffffff"/><rect x="752.1" y="541.7" width="4" height="5" fill="#ffffff"/><rect x="779.1" y="541.7" width="4" height="5" fill="#ffffff"/><rect x="792.6" y="541.7" width="4" height="5" fill="#ffffff"/><rect x="806.1" y="541.7" width="4" height="5" fill="#ffffff"/><rect x="819.6" y="541.7" width="4" height="5" fill="#ffffff"/>
</g>
<line x1="50.5" y1="582.3" x2="62" y2="582.3" stroke="#000" stroke-width="1.5" stroke-dasharray="1.5 1.5"/>
<rect x="66.5" y="581.3" width="6" height="1.5" fill="#000000" />
<path d="M72.5,577.4 h5.5 l4,4.2 l-4,4.2 h-5.5 z" fill="#a4c4b4" stroke="#000" stroke-width="1.5"/>
<text x="87.2" y="588.9" font-family="'Liberation Mono', monospace" font-size="21" letter-spacing="0.9" font-weight="normal" fill="#000000" text-anchor="start" stroke="#000" stroke-width="0.35">HREADYOUT</text>
<g clip-path="url(#valclip)">
<text x="788.3" y="588.9" font-family="'Liberation Mono', monospace" font-size="21" letter-spacing="0.9" font-weight="normal" fill="#000000" text-anchor="start" stroke="#000" stroke-width="0.35">St1</text>
</g>
<line x1="50.5" y1="619.8" x2="62" y2="619.8" stroke="#000" stroke-width="1.5" stroke-dasharray="1.5 1.5"/>
<rect x="66.5" y="618.8" width="6" height="1.5" fill="#000000" />
<path d="M72.5,614.9 h5.5 l4,4.2 l-4,4.2 h-5.5 z" fill="#a4c4b4" stroke="#000" stroke-width="1.5"/>
<text x="87.2" y="626.4" font-family="'Liberation Mono', monospace" font-size="21" letter-spacing="0.9" font-weight="normal" fill="#000000" text-anchor="start" stroke="#000" stroke-width="0.35">HRESP</text>
<g clip-path="url(#valclip)">
<text x="788.3" y="626.4" font-family="'Liberation Mono', monospace" font-size="21" letter-spacing="0.9" font-weight="normal" fill="#000000" text-anchor="start" stroke="#000" stroke-width="0.35">St0</text><rect x="819.6" y="616.7" width="4" height="5" fill="#ffffff"/>
</g>
<rect x="42.85" y="652.45" width="11.5" height="11.5" fill="#fff" stroke="#a8a8a8" stroke-width="1.4"/>
<rect x="44.8" y="657.45" width="7.6" height="1.6" fill="#000000" />
<rect x="47.8" y="654.4" width="1.6" height="7.6" fill="#000000" />
<line x1="55.5" y1="657.5" x2="62" y2="657.5" stroke="#000" stroke-width="1.5" stroke-dasharray="1.5 1.5"/>
<rect x="66.5" y="656.3" width="6" height="1.5" fill="#000000" />
<path d="M72.5,652.4 h5.5 l4,4.2 l-4,4.2 h-5.5 z" fill="#a4c4b4" stroke="#000" stroke-width="1.5"/>
<text x="87.2" y="663.9" font-family="'Liberation Mono', monospace" font-size="21" letter-spacing="0.9" font-weight="normal" fill="#000000" text-anchor="start" stroke="#000" stroke-width="0.35">HRDATA[31:0]</text><rect x="226.5" y="654.2" width="4" height="5" fill="#ffffff"/>
<g clip-path="url(#valclip)">
<text x="653.3" y="663.9" font-family="'Liberation Mono', monospace" font-size="21" letter-spacing="0.9" font-weight="normal" fill="#000000" text-anchor="start" stroke="#000" stroke-width="0.35">32'hxxxx_xxxx</text>
</g>
<rect x="12.75" y="690.45" width="11.5" height="11.5" fill="#fff" stroke="#a8a8a8" stroke-width="1.4"/>
<rect x="14.7" y="695.45" width="7.6" height="1.6" fill="#000000" />
<line x1="27" y1="696.2" x2="32" y2="696.2" stroke="#000" stroke-width="1.5" stroke-dasharray="1.5 1.5"/>
<text x="35" y="701.4" font-family="'Liberation Mono', monospace" font-size="21" letter-spacing="0.8" font-weight="bold" fill="#000000" text-anchor="start">Group2</text>
<line x1="50.5" y1="732.3" x2="62" y2="732.3" stroke="#000" stroke-width="1.5" stroke-dasharray="1.5 1.5"/>
<rect x="70.9" y="724.7" width="6.6" height="13.6" fill="#a4c4b4" stroke="#000" stroke-width="1.5"/>
<text x="87.2" y="738.9" font-family="'Liberation Mono', monospace" font-size="21" letter-spacing="0.9" font-weight="normal" fill="#000000" text-anchor="start" stroke="#000" stroke-width="0.35">hclk</text>
<g clip-path="url(#valclip)">
<text x="774.8" y="738.9" font-family="'Liberation Mono', monospace" font-size="21" letter-spacing="0.9" font-weight="normal" fill="#000000" text-anchor="start" stroke="#000" stroke-width="0.35">1'b1</text>
</g>
<line x1="50.5" y1="769.8" x2="62" y2="769.8" stroke="#000" stroke-width="1.5" stroke-dasharray="1.5 1.5"/>
<rect x="70.9" y="762.2" width="6.6" height="13.6" fill="#a4c4b4" stroke="#000" stroke-width="1.5"/>
<text x="87.2" y="776.4" font-family="'Liberation Mono', monospace" font-size="21" letter-spacing="0.9" font-weight="normal" fill="#000000" text-anchor="start" stroke="#000" stroke-width="0.35">hreset_n</text>
<g clip-path="url(#valclip)">
<text x="774.8" y="776.4" font-family="'Liberation Mono', monospace" font-size="21" letter-spacing="0.9" font-weight="normal" fill="#000000" text-anchor="start" stroke="#000" stroke-width="0.35">1'b1</text>
</g>
<line x1="50.5" y1="807.3" x2="62" y2="807.3" stroke="#000" stroke-width="1.5" stroke-dasharray="1.5 1.5"/>
<rect x="70.9" y="799.7" width="6.6" height="13.6" fill="#a4c4b4" stroke="#000" stroke-width="1.5"/>
<text x="87.2" y="813.9" font-family="'Liberation Mono', monospace" font-size="21" letter-spacing="0.9" font-weight="normal" fill="#000000" text-anchor="start" stroke="#000" stroke-width="0.35">hgrant</text>
<g clip-path="url(#valclip)">
<text x="774.8" y="813.9" font-family="'Liberation Mono', monospace" font-size="21" letter-spacing="0.9" font-weight="normal" fill="#000000" text-anchor="start" stroke="#000" stroke-width="0.35">1'b1</text>
</g>
<rect x="42.85" y="839.95" width="11.5" height="11.5" fill="#fff" stroke="#a8a8a8" stroke-width="1.4"/>
<rect x="44.8" y="844.95" width="7.6" height="1.6" fill="#000000" />
<rect x="47.8" y="841.9" width="1.6" height="7.6" fill="#000000" />
<line x1="55.5" y1="845" x2="62" y2="845" stroke="#000" stroke-width="1.5" stroke-dasharray="1.5 1.5"/>
<rect x="70.9" y="837.2" width="6.6" height="13.6" fill="#a4c4b4" stroke="#000" stroke-width="1.5"/>
<text x="87.2" y="851.4" font-family="'Liberation Mono', monospace" font-size="21" letter-spacing="0.9" font-weight="normal" fill="#000000" text-anchor="start" stroke="#000" stroke-width="0.35">hrdata[63:0]</text><rect x="226.5" y="841.7" width="4" height="5" fill="#ffffff"/>
<g clip-path="url(#valclip)">
<text x="518.3" y="851.4" font-family="'Liberation Mono', monospace" font-size="21" letter-spacing="0.9" font-weight="normal" fill="#000000" text-anchor="start" stroke="#000" stroke-width="0.35">64'h0000_0000_xxxx_xxxx</text><rect x="576.6" y="841.7" width="4" height="5" fill="#ffffff"/><rect x="590.1" y="841.7" width="4" height="5" fill="#ffffff"/><rect x="603.6" y="841.7" width="4" height="5" fill="#ffffff"/><rect x="617.1" y="841.7" width="4" height="5" fill="#ffffff"/><rect x="644.1" y="841.7" width="4" height="5" fill="#ffffff"/><rect x="657.6" y="841.7" width="4" height="5" fill="#ffffff"/><rect x="671.1" y="841.7" width="4" height="5" fill="#ffffff"/><rect x="684.6" y="841.7" width="4" height="5" fill="#ffffff"/>
</g>
<line x1="50.5" y1="882.3" x2="62" y2="882.3" stroke="#000" stroke-width="1.5" stroke-dasharray="1.5 1.5"/>
<rect x="70.9" y="874.7" width="6.6" height="13.6" fill="#a4c4b4" stroke="#000" stroke-width="1.5"/>
<text x="87.2" y="888.9" font-family="'Liberation Mono', monospace" font-size="21" letter-spacing="0.9" font-weight="normal" fill="#000000" text-anchor="start" stroke="#000" stroke-width="0.35">hready</text>
<g clip-path="url(#valclip)">
<text x="774.8" y="888.9" font-family="'Liberation Mono', monospace" font-size="21" letter-spacing="0.9" font-weight="normal" fill="#000000" text-anchor="start" stroke="#000" stroke-width="0.35">1'b1</text>
</g>
<rect x="42.85" y="914.95" width="11.5" height="11.5" fill="#fff" stroke="#a8a8a8" stroke-width="1.4"/>
<rect x="44.8" y="919.95" width="7.6" height="1.6" fill="#000000" />
<rect x="47.8" y="916.9" width="1.6" height="7.6" fill="#000000" />
<line x1="55.5" y1="920" x2="62" y2="920" stroke="#000" stroke-width="1.5" stroke-dasharray="1.5 1.5"/>
<rect x="70.9" y="912.2" width="6.6" height="13.6" fill="#a4c4b4" stroke="#000" stroke-width="1.5"/>
<text x="87.2" y="926.4" font-family="'Liberation Mono', monospace" font-size="21" letter-spacing="0.9" font-weight="normal" fill="#000000" text-anchor="start" stroke="#000" stroke-width="0.35">hresp[1:0]</text><rect x="199.5" y="916.7" width="4" height="5" fill="#ffffff"/>
<g clip-path="url(#valclip)">
<text x="774.8" y="926.4" font-family="'Liberation Mono', monospace" font-size="21" letter-spacing="0.9" font-weight="normal" fill="#000000" text-anchor="start" stroke="#000" stroke-width="0.35">2'h0</text><rect x="819.6" y="916.7" width="4" height="5" fill="#ffffff"/>
</g>
<rect x="42.85" y="952.45" width="11.5" height="11.5" fill="#fff" stroke="#a8a8a8" stroke-width="1.4"/>
<rect x="44.8" y="957.45" width="7.6" height="1.6" fill="#000000" />
<rect x="47.8" y="954.4" width="1.6" height="7.6" fill="#000000" />
<line x1="55.5" y1="957.5" x2="62" y2="957.5" stroke="#000" stroke-width="1.5" stroke-dasharray="1.5 1.5"/>
<rect x="70.9" y="949.7" width="6.6" height="13.6" fill="#a4c4b4" stroke="#000" stroke-width="1.5"/>
<text x="87.2" y="963.9" font-family="'Liberation Mono', monospace" font-size="21" letter-spacing="0.9" font-weight="normal" fill="#000000" text-anchor="start" stroke="#000" stroke-width="0.35">haddr[31:0]</text><rect x="213" y="954.2" width="4" height="5" fill="#ffffff"/>
<g clip-path="url(#valclip)">
<text x="450.8" y="963.9" font-family="'Liberation Mono', monospace" font-size="21" letter-spacing="0.9" font-weight="normal" fill="#000000" text-anchor="start" stroke="#000" stroke-width="0.35">32'h0000_0000-&gt;32'h0000_6f0c</text><rect x="509.1" y="954.2" width="4" height="5" fill="#ffffff"/><rect x="522.6" y="954.2" width="4" height="5" fill="#ffffff"/><rect x="536.1" y="954.2" width="4" height="5" fill="#ffffff"/><rect x="549.6" y="954.2" width="4" height="5" fill="#ffffff"/><rect x="576.6" y="954.2" width="4" height="5" fill="#ffffff"/><rect x="590.1" y="954.2" width="4" height="5" fill="#ffffff"/><rect x="603.6" y="954.2" width="4" height="5" fill="#ffffff"/><rect x="617.1" y="954.2" width="4" height="5" fill="#ffffff"/><rect x="711.6" y="954.2" width="4" height="5" fill="#ffffff"/><rect x="725.1" y="954.2" width="4" height="5" fill="#ffffff"/><rect x="738.6" y="954.2" width="4" height="5" fill="#ffffff"/><rect x="752.1" y="954.2" width="4" height="5" fill="#ffffff"/><rect x="806.1" y="954.2" width="4" height="5" fill="#ffffff"/>
</g>
<rect x="42.85" y="989.95" width="11.5" height="11.5" fill="#fff" stroke="#a8a8a8" stroke-width="1.4"/>
<rect x="44.8" y="994.95" width="7.6" height="1.6" fill="#000000" />
<rect x="47.8" y="991.9" width="1.6" height="7.6" fill="#000000" />
<line x1="55.5" y1="995" x2="62" y2="995" stroke="#000" stroke-width="1.5" stroke-dasharray="1.5 1.5"/>
<rect x="70.9" y="987.2" width="6.6" height="13.6" fill="#a4c4b4" stroke="#000" stroke-width="1.5"/>
<text x="87.2" y="1001.4" font-family="'Liberation Mono', monospace" font-size="21" letter-spacing="0.9" font-weight="normal" fill="#000000" text-anchor="start" stroke="#000" stroke-width="0.35">hsize[2:0]</text><rect x="199.5" y="991.7" width="4" height="5" fill="#ffffff"/>
<g clip-path="url(#valclip)">
<text x="693.8" y="1001.4" font-family="'Liberation Mono', monospace" font-size="21" letter-spacing="0.9" font-weight="normal" fill="#000000" text-anchor="start" stroke="#000" stroke-width="0.35">3'h0-&gt;3'h2</text><rect x="738.6" y="991.7" width="4" height="5" fill="#ffffff"/>
</g>
<rect x="42.85" y="1027.45" width="11.5" height="11.5" fill="#fff" stroke="#a8a8a8" stroke-width="1.4"/>
<rect x="44.8" y="1032.45" width="7.6" height="1.6" fill="#000000" />
<rect x="47.8" y="1029.4" width="1.6" height="7.6" fill="#000000" />
<line x1="55.5" y1="1032.5" x2="62" y2="1032.5" stroke="#000" stroke-width="1.5" stroke-dasharray="1.5 1.5"/>
<rect x="70.9" y="1024.7" width="6.6" height="13.6" fill="#a4c4b4" stroke="#000" stroke-width="1.5"/>
<text x="87.2" y="1038.9" font-family="'Liberation Mono', monospace" font-size="21" letter-spacing="0.9" font-weight="normal" fill="#ffffff" text-anchor="start" stroke="#000080" stroke-width="0.3">htrans[1:0]</text><rect x="213" y="1029.2" width="4" height="5" fill="#000080"/>
<g clip-path="url(#valclip)">
<text x="693.8" y="1038.9" font-family="'Liberation Mono', monospace" font-size="21" letter-spacing="0.9" font-weight="normal" fill="#ffffff" text-anchor="start" stroke="#000080" stroke-width="0.3">2'h0-&gt;2'h2</text><rect x="738.6" y="1029.2" width="4" height="5" fill="#000080"/>
</g>
<rect x="42.85" y="1064.95" width="11.5" height="11.5" fill="#fff" stroke="#a8a8a8" stroke-width="1.4"/>
<rect x="44.8" y="1069.95" width="7.6" height="1.6" fill="#000000" />
<rect x="47.8" y="1066.9" width="1.6" height="7.6" fill="#000000" />
<line x1="55.5" y1="1070" x2="62" y2="1070" stroke="#000" stroke-width="1.5" stroke-dasharray="1.5 1.5"/>
<rect x="70.9" y="1062.2" width="6.6" height="13.6" fill="#a4c4b4" stroke="#000" stroke-width="1.5"/>
<text x="87.2" y="1076.4" font-family="'Liberation Mono', monospace" font-size="21" letter-spacing="0.9" font-weight="normal" fill="#000000" text-anchor="start" stroke="#000" stroke-width="0.35">hwdata[63:0]</text><rect x="226.5" y="1066.7" width="4" height="5" fill="#ffffff"/>
<g clip-path="url(#valclip)">
<text x="518.3" y="1076.4" font-family="'Liberation Mono', monospace" font-size="21" letter-spacing="0.9" font-weight="normal" fill="#000000" text-anchor="start" stroke="#000" stroke-width="0.35">64'h0000_0000_0000_0000</text><rect x="576.6" y="1066.7" width="4" height="5" fill="#ffffff"/><rect x="590.1" y="1066.7" width="4" height="5" fill="#ffffff"/><rect x="603.6" y="1066.7" width="4" height="5" fill="#ffffff"/><rect x="617.1" y="1066.7" width="4" height="5" fill="#ffffff"/><rect x="644.1" y="1066.7" width="4" height="5" fill="#ffffff"/><rect x="657.6" y="1066.7" width="4" height="5" fill="#ffffff"/><rect x="671.1" y="1066.7" width="4" height="5" fill="#ffffff"/><rect x="684.6" y="1066.7" width="4" height="5" fill="#ffffff"/><rect x="711.6" y="1066.7" width="4" height="5" fill="#ffffff"/><rect x="725.1" y="1066.7" width="4" height="5" fill="#ffffff"/><rect x="738.6" y="1066.7" width="4" height="5" fill="#ffffff"/><rect x="752.1" y="1066.7" width="4" height="5" fill="#ffffff"/><rect x="779.1" y="1066.7" width="4" height="5" fill="#ffffff"/><rect x="792.6" y="1066.7" width="4" height="5" fill="#ffffff"/><rect x="806.1" y="1066.7" width="4" height="5" fill="#ffffff"/><rect x="819.6" y="1066.7" width="4" height="5" fill="#ffffff"/>
</g>
<line x1="50.5" y1="1107.3" x2="62" y2="1107.3" stroke="#000" stroke-width="1.5" stroke-dasharray="1.5 1.5"/>
<rect x="70.9" y="1099.7" width="6.6" height="13.6" fill="#a4c4b4" stroke="#000" stroke-width="1.5"/>
<text x="87.2" y="1113.9" font-family="'Liberation Mono', monospace" font-size="21" letter-spacing="0.9" font-weight="normal" fill="#000000" text-anchor="start" stroke="#000" stroke-width="0.35">hwrite</text>
<g clip-path="url(#valclip)">
<text x="693.8" y="1113.9" font-family="'Liberation Mono', monospace" font-size="21" letter-spacing="0.9" font-weight="normal" fill="#000000" text-anchor="start" stroke="#000" stroke-width="0.35">1'b0-&gt;1'b1</text><rect x="738.6" y="1104.2" width="4" height="5" fill="#ffffff"/>
</g>
<rect x="42.85" y="1139.95" width="11.5" height="11.5" fill="#fff" stroke="#a8a8a8" stroke-width="1.4"/>
<rect x="44.8" y="1144.95" width="7.6" height="1.6" fill="#000000" />
<rect x="47.8" y="1141.9" width="1.6" height="7.6" fill="#000000" />
<line x1="55.5" y1="1145" x2="62" y2="1145" stroke="#000" stroke-width="1.5" stroke-dasharray="1.5 1.5"/>
<rect x="70.9" y="1137.2" width="6.6" height="13.6" fill="#a4c4b4" stroke="#000" stroke-width="1.5"/>
<text x="87.2" y="1151.4" font-family="'Liberation Mono', monospace" font-size="21" letter-spacing="0.9" font-weight="normal" fill="#000000" text-anchor="start" stroke="#000" stroke-width="0.35">hburst[2:0]</text><rect x="213" y="1141.7" width="4" height="5" fill="#ffffff"/>
<g clip-path="url(#valclip)">
<text x="774.8" y="1151.4" font-family="'Liberation Mono', monospace" font-size="21" letter-spacing="0.9" font-weight="normal" fill="#000000" text-anchor="start" stroke="#000" stroke-width="0.35">3'h0</text><rect x="819.6" y="1141.7" width="4" height="5" fill="#ffffff"/>
</g>
<line x1="50.5" y1="1182.3" x2="62" y2="1182.3" stroke="#000" stroke-width="1.5" stroke-dasharray="1.5 1.5"/>
<rect x="70.9" y="1174.7" width="6.6" height="13.6" fill="#a4c4b4" stroke="#000" stroke-width="1.5"/>
<text x="87.2" y="1188.9" font-family="'Liberation Mono', monospace" font-size="21" letter-spacing="0.9" font-weight="normal" fill="#000000" text-anchor="start" stroke="#000" stroke-width="0.35">hbusreq</text>
<g clip-path="url(#valclip)">
<text x="774.8" y="1188.9" font-family="'Liberation Mono', monospace" font-size="21" letter-spacing="0.9" font-weight="normal" fill="#000000" text-anchor="start" stroke="#000" stroke-width="0.35">1'b0</text><rect x="819.6" y="1179.2" width="4" height="5" fill="#ffffff"/>
</g>
<line x1="50.5" y1="1219.8" x2="62" y2="1219.8" stroke="#000" stroke-width="1.5" stroke-dasharray="1.5 1.5"/>
<rect x="70.9" y="1212.2" width="6.6" height="13.6" fill="#a4c4b4" stroke="#000" stroke-width="1.5"/>
<text x="87.2" y="1226.4" font-family="'Liberation Mono', monospace" font-size="21" letter-spacing="0.9" font-weight="normal" fill="#000000" text-anchor="start" stroke="#000" stroke-width="0.35">hlock</text>
<g clip-path="url(#valclip)">
<text x="774.8" y="1226.4" font-family="'Liberation Mono', monospace" font-size="21" letter-spacing="0.9" font-weight="normal" fill="#000000" text-anchor="start" stroke="#000" stroke-width="0.35">1'b0</text><rect x="819.6" y="1216.7" width="4" height="5" fill="#ffffff"/>
</g>
<rect x="42.85" y="1252.45" width="11.5" height="11.5" fill="#fff" stroke="#a8a8a8" stroke-width="1.4"/>
<rect x="44.8" y="1257.45" width="7.6" height="1.6" fill="#000000" />
<rect x="47.8" y="1254.4" width="1.6" height="7.6" fill="#000000" />
<line x1="55.5" y1="1257.5" x2="62" y2="1257.5" stroke="#000" stroke-width="1.5" stroke-dasharray="1.5 1.5"/>
<rect x="70.9" y="1249.7" width="6.6" height="13.6" fill="#a4c4b4" stroke="#000" stroke-width="1.5"/>
<text x="87.2" y="1263.9" font-family="'Liberation Mono', monospace" font-size="21" letter-spacing="0.9" font-weight="normal" fill="#000000" text-anchor="start" stroke="#000" stroke-width="0.35">hprot[3:0]</text><rect x="199.5" y="1254.2" width="4" height="5" fill="#ffffff"/>
<g clip-path="url(#valclip)">
<text x="774.8" y="1263.9" font-family="'Liberation Mono', monospace" font-size="21" letter-spacing="0.9" font-weight="normal" fill="#000000" text-anchor="start" stroke="#000" stroke-width="0.35">4'h0</text><rect x="819.6" y="1254.2" width="4" height="5" fill="#ffffff"/>
</g>
<rect x="42.85" y="1289.95" width="11.5" height="11.5" fill="#fff" stroke="#a8a8a8" stroke-width="1.4"/>
<rect x="44.8" y="1294.95" width="7.6" height="1.6" fill="#000000" />
<rect x="47.8" y="1291.9" width="1.6" height="7.6" fill="#000000" />
<line x1="55.5" y1="1295" x2="62" y2="1295" stroke="#000" stroke-width="1.5" stroke-dasharray="1.5 1.5"/>
<rect x="70.9" y="1287.2" width="6.6" height="13.6" fill="#a4c4b4" stroke="#000" stroke-width="1.5"/>
<text x="87.2" y="1301.4" font-family="'Liberation Mono', monospace" font-size="21" letter-spacing="0.9" font-weight="normal" fill="#000000" text-anchor="start" stroke="#000" stroke-width="0.35">debug_hresp[1:0]</text><rect x="280.5" y="1291.7" width="4" height="5" fill="#ffffff"/>
<g clip-path="url(#valclip)">
<text x="774.8" y="1301.4" font-family="'Liberation Mono', monospace" font-size="21" letter-spacing="0.9" font-weight="normal" fill="#000000" text-anchor="start" stroke="#000" stroke-width="0.35">OKAY</text>
</g>
<rect x="42.85" y="1327.45" width="11.5" height="11.5" fill="#fff" stroke="#a8a8a8" stroke-width="1.4"/>
<rect x="44.8" y="1332.45" width="7.6" height="1.6" fill="#000000" />
<rect x="47.8" y="1329.4" width="1.6" height="7.6" fill="#000000" />
<line x1="55.5" y1="1332.5" x2="62" y2="1332.5" stroke="#000" stroke-width="1.5" stroke-dasharray="1.5 1.5"/>
<rect x="70.9" y="1324.7" width="6.6" height="13.6" fill="#a4c4b4" stroke="#000" stroke-width="1.5"/>
<text x="87.2" y="1338.9" font-family="'Liberation Mono', monospace" font-size="21" letter-spacing="0.9" font-weight="normal" fill="#000000" text-anchor="start" stroke="#000" stroke-width="0.35">debug_htrans[1:0]</text><rect x="294" y="1329.2" width="4" height="5" fill="#ffffff"/>
<g clip-path="url(#valclip)">
<text x="693.8" y="1338.9" font-family="'Liberation Mono', monospace" font-size="21" letter-spacing="0.9" font-weight="normal" fill="#000000" text-anchor="start" stroke="#000" stroke-width="0.35">IDLE-&gt;NSEQ</text>
</g>
<rect x="42.85" y="1364.95" width="11.5" height="11.5" fill="#fff" stroke="#a8a8a8" stroke-width="1.4"/>
<rect x="44.8" y="1369.95" width="7.6" height="1.6" fill="#000000" />
<rect x="47.8" y="1366.9" width="1.6" height="7.6" fill="#000000" />
<line x1="55.5" y1="1370" x2="62" y2="1370" stroke="#000" stroke-width="1.5" stroke-dasharray="1.5 1.5"/>
<rect x="70.9" y="1362.2" width="6.6" height="13.6" fill="#a4c4b4" stroke="#000" stroke-width="1.5"/>
<text x="87.2" y="1376.4" font-family="'Liberation Mono', monospace" font-size="21" letter-spacing="0.9" font-weight="normal" fill="#000000" text-anchor="start" stroke="#000" stroke-width="0.35">debug_hsize[2:0]</text><rect x="280.5" y="1366.7" width="4" height="5" fill="#ffffff"/>
<g clip-path="url(#valclip)">
<text x="383.3" y="1376.4" font-family="'Liberation Mono', monospace" font-size="21" letter-spacing="0.9" font-weight="normal" fill="#000000" text-anchor="start" stroke="#000" stroke-width="0.35">BURST_SIZE_8BIT-&gt;BURST_SIZE_32BIT</text>
</g>
<rect x="42.85" y="1402.45" width="11.5" height="11.5" fill="#fff" stroke="#a8a8a8" stroke-width="1.4"/>
<rect x="44.8" y="1407.45" width="7.6" height="1.6" fill="#000000" />
<rect x="47.8" y="1404.4" width="1.6" height="7.6" fill="#000000" />
<line x1="55.5" y1="1407.5" x2="62" y2="1407.5" stroke="#000" stroke-width="1.5" stroke-dasharray="1.5 1.5"/>
<rect x="70.9" y="1399.7" width="6.6" height="13.6" fill="#a4c4b4" stroke="#000" stroke-width="1.5"/>
<text x="87.2" y="1413.9" font-family="'Liberation Mono', monospace" font-size="21" letter-spacing="0.9" font-weight="normal" fill="#000000" text-anchor="start" stroke="#000" stroke-width="0.35">debug_hburst[2:0]</text><rect x="294" y="1404.2" width="4" height="5" fill="#ffffff"/>
<g clip-path="url(#valclip)">
<text x="747.8" y="1413.9" font-family="'Liberation Mono', monospace" font-size="21" letter-spacing="0.9" font-weight="normal" fill="#000000" text-anchor="start" stroke="#000" stroke-width="0.35">SINGLE</text>
</g>
<rect x="42.85" y="1439.95" width="11.5" height="11.5" fill="#fff" stroke="#a8a8a8" stroke-width="1.4"/>
<rect x="44.8" y="1444.95" width="7.6" height="1.6" fill="#000000" />
<rect x="47.8" y="1441.9" width="1.6" height="7.6" fill="#000000" />
<line x1="55.5" y1="1445" x2="62" y2="1445" stroke="#000" stroke-width="1.5" stroke-dasharray="1.5 1.5"/>
<rect x="70.9" y="1437.2" width="6.6" height="13.6" fill="#a4c4b4" stroke="#000" stroke-width="1.5"/>
<text x="87.2" y="1451.4" font-family="'Liberation Mono', monospace" font-size="21" letter-spacing="0.9" font-weight="normal" fill="#000000" text-anchor="start" stroke="#000" stroke-width="0.35">debug_xact_type[1:0]</text><rect x="334.5" y="1441.7" width="4" height="5" fill="#ffffff"/>
<g clip-path="url(#valclip)">
<text x="774.8" y="1451.4" font-family="'Liberation Mono', monospace" font-size="21" letter-spacing="0.9" font-weight="normal" fill="#000000" text-anchor="start" stroke="#000" stroke-width="0.35">READ</text>
</g>
<rect x="42.85" y="1477.45" width="11.5" height="11.5" fill="#fff" stroke="#a8a8a8" stroke-width="1.4"/>
<rect x="44.8" y="1482.45" width="7.6" height="1.6" fill="#000000" />
<rect x="47.8" y="1479.4" width="1.6" height="7.6" fill="#000000" />
<line x1="55.5" y1="1482.5" x2="62" y2="1482.5" stroke="#000" stroke-width="1.5" stroke-dasharray="1.5 1.5"/>
<rect x="70.9" y="1474.7" width="6.6" height="13.6" fill="#a4c4b4" stroke="#000" stroke-width="1.5"/>
<text x="87.2" y="1488.9" font-family="'Liberation Mono', monospace" font-size="21" letter-spacing="0.9" font-weight="normal" fill="#000000" text-anchor="start" stroke="#000" stroke-width="0.35">debug_status[1:0]</text><rect x="294" y="1479.2" width="4" height="5" fill="#ffffff"/>
<g clip-path="url(#valclip)">
<text x="734.3" y="1488.9" font-family="'Liberation Mono', monospace" font-size="21" letter-spacing="0.9" font-weight="normal" fill="#000000" text-anchor="start" stroke="#000" stroke-width="0.35">INITIAL</text>
</g>
<text x="36.3" y="1526.4" font-family="'Liberation Mono', monospace" font-size="21" letter-spacing="0.9" font-weight="normal" fill="#000000" text-anchor="start" stroke="#000" stroke-width="0.35">New Group</text>
<rect x="3.2" y="1499.2" width="828.5" height="1.6" fill="#ff2020" />
</g>
<rect x="1.6" y="1541.6" width="411" height="23.4" fill="url(#dith)" />
<rect x="1.6" y="1541.6" width="21.7" height="23.4" fill="#c0c0c0" />
<rect x="1.6" y="1541.6" width="21.7" height="1.5" fill="#ffffff" />
<rect x="1.6" y="1541.6" width="1.5" height="23.4" fill="#ffffff" />
<rect x="1.6" y="1563.5" width="21.7" height="1.5" fill="#202020" />
<rect x="21.8" y="1541.6" width="1.5" height="23.4" fill="#202020" />
<path d="M8.95,1553.3 l6,-6 v12 z" fill="#a0a0a0"/>
<rect x="15.05" y="1547.3" width="1.4" height="12.5" fill="#ffffff" />
<rect x="390.3" y="1541.6" width="22.4" height="23.4" fill="#c0c0c0" />
<rect x="390.3" y="1541.6" width="22.4" height="1.5" fill="#ffffff" />
<rect x="390.3" y="1541.6" width="1.5" height="23.4" fill="#ffffff" />
<rect x="390.3" y="1563.5" width="22.4" height="1.5" fill="#202020" />
<rect x="411.2" y="1541.6" width="1.5" height="23.4" fill="#202020" />
<path d="M405,1553.3 l-6,-6 v12 z" fill="#a0a0a0"/>
<path d="M405,1553.8 l-6,6" stroke="#fff" stroke-width="1.4"/>
<rect x="413.6" y="1541.6" width="413.8" height="23.4" fill="url(#dith)" />
<rect x="413.6" y="1541.6" width="23.7" height="23.4" fill="#c0c0c0" />
<rect x="413.6" y="1541.6" width="23.7" height="1.5" fill="#ffffff" />
<rect x="413.6" y="1541.6" width="1.5" height="23.4" fill="#ffffff" />
<rect x="413.6" y="1563.5" width="23.7" height="1.5" fill="#202020" />
<rect x="435.8" y="1541.6" width="1.5" height="23.4" fill="#202020" />
<path d="M421.95,1553.3 l6,-6 v12 z" fill="#000000"/>
<rect x="579.4" y="1541.6" width="223.6" height="23.4" fill="#c0c0c0" />
<rect x="579.4" y="1541.6" width="223.6" height="1.5" fill="#ffffff" />
<rect x="579.4" y="1541.6" width="1.5" height="23.4" fill="#ffffff" />
<rect x="579.4" y="1563.5" width="223.6" height="1.5" fill="#202020" />
<rect x="801.5" y="1541.6" width="1.5" height="23.4" fill="#202020" />
<rect x="803" y="1541.6" width="24.4" height="23.4" fill="#c0c0c0" />
<rect x="803" y="1541.6" width="24.4" height="1.5" fill="#ffffff" />
<rect x="803" y="1541.6" width="1.5" height="23.4" fill="#ffffff" />
<rect x="803" y="1563.5" width="24.4" height="1.5" fill="#202020" />
<rect x="825.9" y="1541.6" width="1.5" height="23.4" fill="#202020" />
<path d="M818.7,1553.3 l-6,-6 v12 z" fill="#000000"/>
<rect x="833.2" y="136" width="12" height="1430" fill="#c0c0c0" />
<rect x="837" y="138" width="1.5" height="1428" fill="#e8e8e8" />
<rect x="842.6" y="138" width="1.5" height="1428" fill="#8c8c8c" />
<rect x="845" y="136" width="2035" height="3" fill="#c0c0c0" />
<rect x="845" y="138.8" width="1.6" height="67.5" fill="#8c8c8c" />
<rect x="846.6" y="138.8" width="2030.6" height="61.6" fill="#000000" />
<rect x="2877.2" y="136" width="2.8" height="70" fill="#e8e8e8" />
<rect x="846.6" y="200.5" width="2031" height="3" fill="#ffffff" />
<rect x="846" y="204" width="2034" height="2.4" fill="#202020" />
<rect x="846" y="206.4" width="1.4" height="1332" fill="#202020" />
<rect x="847.4" y="206.4" width="2005.6" height="36" fill="#a4a4a8" />
<g clip-path="url(#rulclip)">
<line x1="631.81" y1="217.1" x2="631.81" y2="242.4" stroke="#000000" stroke-width="1.5" />
<text x="633.01" y="232.2" font-family="'Liberation Mono', monospace" font-size="19.8" letter-spacing="1.5" font-weight="normal" fill="#000000" text-anchor="start" stroke="#000" stroke-width="0.35">52630000</text><rect x="690.58" y="223.05" width="3.77" height="4.71" fill="#a4a4a8"/><rect x="703.96" y="223.05" width="3.77" height="4.71" fill="#a4a4a8"/><rect x="717.34" y="223.05" width="3.77" height="4.71" fill="#a4a4a8"/><rect x="730.72" y="223.05" width="3.77" height="4.71" fill="#a4a4a8"/>
<line x1="654.93" y1="235.2" x2="654.93" y2="242.4" stroke="#000000" stroke-width="1.5" />
<line x1="678.06" y1="235.2" x2="678.06" y2="242.4" stroke="#000000" stroke-width="1.5" />
<line x1="701.18" y1="235.2" x2="701.18" y2="242.4" stroke="#000000" stroke-width="1.5" />
<line x1="724.31" y1="235.2" x2="724.31" y2="242.4" stroke="#000000" stroke-width="1.5" />
<line x1="747.43" y1="227.6" x2="747.43" y2="242.4" stroke="#000000" stroke-width="1.5" />
<line x1="770.55" y1="235.2" x2="770.55" y2="242.4" stroke="#000000" stroke-width="1.5" />
<line x1="793.68" y1="235.2" x2="793.68" y2="242.4" stroke="#000000" stroke-width="1.5" />
<line x1="816.8" y1="235.2" x2="816.8" y2="242.4" stroke="#000000" stroke-width="1.5" />
<line x1="839.93" y1="235.2" x2="839.93" y2="242.4" stroke="#000000" stroke-width="1.5" />
<line x1="863.05" y1="217.1" x2="863.05" y2="242.4" stroke="#000000" stroke-width="1.5" />
<text x="864.25" y="232.2" font-family="'Liberation Mono', monospace" font-size="19.8" letter-spacing="1.5" font-weight="normal" fill="#000000" text-anchor="start" stroke="#000" stroke-width="0.35">52640000</text><rect x="921.82" y="223.05" width="3.77" height="4.71" fill="#a4a4a8"/><rect x="935.2" y="223.05" width="3.77" height="4.71" fill="#a4a4a8"/><rect x="948.58" y="223.05" width="3.77" height="4.71" fill="#a4a4a8"/><rect x="961.96" y="223.05" width="3.77" height="4.71" fill="#a4a4a8"/>
<line x1="886.17" y1="235.2" x2="886.17" y2="242.4" stroke="#000000" stroke-width="1.5" />
<line x1="909.3" y1="235.2" x2="909.3" y2="242.4" stroke="#000000" stroke-width="1.5" />
<line x1="932.42" y1="235.2" x2="932.42" y2="242.4" stroke="#000000" stroke-width="1.5" />
<line x1="955.55" y1="235.2" x2="955.55" y2="242.4" stroke="#000000" stroke-width="1.5" />
<line x1="978.67" y1="227.6" x2="978.67" y2="242.4" stroke="#000000" stroke-width="1.5" />
<line x1="1001.79" y1="235.2" x2="1001.79" y2="242.4" stroke="#000000" stroke-width="1.5" />
<line x1="1024.92" y1="235.2" x2="1024.92" y2="242.4" stroke="#000000" stroke-width="1.5" />
<line x1="1048.04" y1="235.2" x2="1048.04" y2="242.4" stroke="#000000" stroke-width="1.5" />
<line x1="1071.17" y1="235.2" x2="1071.17" y2="242.4" stroke="#000000" stroke-width="1.5" />
<line x1="1094.29" y1="217.1" x2="1094.29" y2="242.4" stroke="#000000" stroke-width="1.5" />
<text x="1095.49" y="232.2" font-family="'Liberation Mono', monospace" font-size="19.8" letter-spacing="1.5" font-weight="normal" fill="#000000" text-anchor="start" stroke="#000" stroke-width="0.35">52650000</text><rect x="1153.06" y="223.05" width="3.77" height="4.71" fill="#a4a4a8"/><rect x="1166.44" y="223.05" width="3.77" height="4.71" fill="#a4a4a8"/><rect x="1179.82" y="223.05" width="3.77" height="4.71" fill="#a4a4a8"/><rect x="1193.2" y="223.05" width="3.77" height="4.71" fill="#a4a4a8"/>
<line x1="1117.41" y1="235.2" x2="1117.41" y2="242.4" stroke="#000000" stroke-width="1.5" />
<line x1="1140.54" y1="235.2" x2="1140.54" y2="242.4" stroke="#000000" stroke-width="1.5" />
<line x1="1163.66" y1="235.2" x2="1163.66" y2="242.4" stroke="#000000" stroke-width="1.5" />
<line x1="1186.79" y1="235.2" x2="1186.79" y2="242.4" stroke="#000000" stroke-width="1.5" />
<line x1="1209.91" y1="227.6" x2="1209.91" y2="242.4" stroke="#000000" stroke-width="1.5" />
<line x1="1233.03" y1="235.2" x2="1233.03" y2="242.4" stroke="#000000" stroke-width="1.5" />
<line x1="1256.16" y1="235.2" x2="1256.16" y2="242.4" stroke="#000000" stroke-width="1.5" />
<line x1="1279.28" y1="235.2" x2="1279.28" y2="242.4" stroke="#000000" stroke-width="1.5" />
<line x1="1302.41" y1="235.2" x2="1302.41" y2="242.4" stroke="#000000" stroke-width="1.5" />
<line x1="1325.53" y1="217.1" x2="1325.53" y2="242.4" stroke="#000000" stroke-width="1.5" />
<text x="1326.73" y="232.2" font-family="'Liberation Mono', monospace" font-size="19.8" letter-spacing="1.5" font-weight="normal" fill="#000000" text-anchor="start" stroke="#000" stroke-width="0.35">52660000</text><rect x="1384.3" y="223.05" width="3.77" height="4.71" fill="#a4a4a8"/><rect x="1397.68" y="223.05" width="3.77" height="4.71" fill="#a4a4a8"/><rect x="1411.06" y="223.05" width="3.77" height="4.71" fill="#a4a4a8"/><rect x="1424.44" y="223.05" width="3.77" height="4.71" fill="#a4a4a8"/>
<line x1="1348.65" y1="235.2" x2="1348.65" y2="242.4" stroke="#000000" stroke-width="1.5" />
<line x1="1371.78" y1="235.2" x2="1371.78" y2="242.4" stroke="#000000" stroke-width="1.5" />
<line x1="1394.9" y1="235.2" x2="1394.9" y2="242.4" stroke="#000000" stroke-width="1.5" />
<line x1="1418.03" y1="235.2" x2="1418.03" y2="242.4" stroke="#000000" stroke-width="1.5" />
<line x1="1441.15" y1="227.6" x2="1441.15" y2="242.4" stroke="#000000" stroke-width="1.5" />
<line x1="1464.27" y1="235.2" x2="1464.27" y2="242.4" stroke="#000000" stroke-width="1.5" />
<line x1="1487.4" y1="235.2" x2="1487.4" y2="242.4" stroke="#000000" stroke-width="1.5" />
<line x1="1510.52" y1="235.2" x2="1510.52" y2="242.4" stroke="#000000" stroke-width="1.5" />
<line x1="1533.65" y1="235.2" x2="1533.65" y2="242.4" stroke="#000000" stroke-width="1.5" />
<line x1="1556.77" y1="217.1" x2="1556.77" y2="242.4" stroke="#000000" stroke-width="1.5" />
<text x="1557.97" y="232.2" font-family="'Liberation Mono', monospace" font-size="19.8" letter-spacing="1.5" font-weight="normal" fill="#000000" text-anchor="start" stroke="#000" stroke-width="0.35">52670000</text><rect x="1615.54" y="223.05" width="3.77" height="4.71" fill="#a4a4a8"/><rect x="1628.92" y="223.05" width="3.77" height="4.71" fill="#a4a4a8"/><rect x="1642.3" y="223.05" width="3.77" height="4.71" fill="#a4a4a8"/><rect x="1655.68" y="223.05" width="3.77" height="4.71" fill="#a4a4a8"/>
<line x1="1579.89" y1="235.2" x2="1579.89" y2="242.4" stroke="#000000" stroke-width="1.5" />
<line x1="1603.02" y1="235.2" x2="1603.02" y2="242.4" stroke="#000000" stroke-width="1.5" />
<line x1="1626.14" y1="235.2" x2="1626.14" y2="242.4" stroke="#000000" stroke-width="1.5" />
<line x1="1649.27" y1="235.2" x2="1649.27" y2="242.4" stroke="#000000" stroke-width="1.5" />
<line x1="1672.39" y1="227.6" x2="1672.39" y2="242.4" stroke="#000000" stroke-width="1.5" />
<line x1="1695.51" y1="235.2" x2="1695.51" y2="242.4" stroke="#000000" stroke-width="1.5" />
<line x1="1718.64" y1="235.2" x2="1718.64" y2="242.4" stroke="#000000" stroke-width="1.5" />
<line x1="1741.76" y1="235.2" x2="1741.76" y2="242.4" stroke="#000000" stroke-width="1.5" />
<line x1="1764.89" y1="235.2" x2="1764.89" y2="242.4" stroke="#000000" stroke-width="1.5" />
<line x1="1788.01" y1="217.1" x2="1788.01" y2="242.4" stroke="#000000" stroke-width="1.5" />
<text x="1789.21" y="232.2" font-family="'Liberation Mono', monospace" font-size="19.8" letter-spacing="1.5" font-weight="normal" fill="#000000" text-anchor="start" stroke="#000" stroke-width="0.35">52680000</text><rect x="1846.78" y="223.05" width="3.77" height="4.71" fill="#a4a4a8"/><rect x="1860.16" y="223.05" width="3.77" height="4.71" fill="#a4a4a8"/><rect x="1873.54" y="223.05" width="3.77" height="4.71" fill="#a4a4a8"/><rect x="1886.92" y="223.05" width="3.77" height="4.71" fill="#a4a4a8"/>
<line x1="1811.13" y1="235.2" x2="1811.13" y2="242.4" stroke="#000000" stroke-width="1.5" />
<line x1="1834.26" y1="235.2" x2="1834.26" y2="242.4" stroke="#000000" stroke-width="1.5" />
<line x1="1857.38" y1="235.2" x2="1857.38" y2="242.4" stroke="#000000" stroke-width="1.5" />
<line x1="1880.51" y1="235.2" x2="1880.51" y2="242.4" stroke="#000000" stroke-width="1.5" />
<line x1="1903.63" y1="227.6" x2="1903.63" y2="242.4" stroke="#000000" stroke-width="1.5" />
<line x1="1926.75" y1="235.2" x2="1926.75" y2="242.4" stroke="#000000" stroke-width="1.5" />
<line x1="1949.88" y1="235.2" x2="1949.88" y2="242.4" stroke="#000000" stroke-width="1.5" />
<line x1="1973" y1="235.2" x2="1973" y2="242.4" stroke="#000000" stroke-width="1.5" />
<line x1="1996.13" y1="235.2" x2="1996.13" y2="242.4" stroke="#000000" stroke-width="1.5" />
<line x1="2019.25" y1="217.1" x2="2019.25" y2="242.4" stroke="#000000" stroke-width="1.5" />
<text x="2020.45" y="232.2" font-family="'Liberation Mono', monospace" font-size="19.8" letter-spacing="1.5" font-weight="normal" fill="#000000" text-anchor="start" stroke="#000" stroke-width="0.35">52690000</text><rect x="2078.02" y="223.05" width="3.77" height="4.71" fill="#a4a4a8"/><rect x="2091.4" y="223.05" width="3.77" height="4.71" fill="#a4a4a8"/><rect x="2104.78" y="223.05" width="3.77" height="4.71" fill="#a4a4a8"/><rect x="2118.16" y="223.05" width="3.77" height="4.71" fill="#a4a4a8"/>
<line x1="2042.37" y1="235.2" x2="2042.37" y2="242.4" stroke="#000000" stroke-width="1.5" />
<line x1="2065.5" y1="235.2" x2="2065.5" y2="242.4" stroke="#000000" stroke-width="1.5" />
<line x1="2088.62" y1="235.2" x2="2088.62" y2="242.4" stroke="#000000" stroke-width="1.5" />
<line x1="2111.75" y1="235.2" x2="2111.75" y2="242.4" stroke="#000000" stroke-width="1.5" />
<line x1="2134.87" y1="227.6" x2="2134.87" y2="242.4" stroke="#000000" stroke-width="1.5" />
<line x1="2157.99" y1="235.2" x2="2157.99" y2="242.4" stroke="#000000" stroke-width="1.5" />
<line x1="2181.12" y1="235.2" x2="2181.12" y2="242.4" stroke="#000000" stroke-width="1.5" />
<line x1="2204.24" y1="235.2" x2="2204.24" y2="242.4" stroke="#000000" stroke-width="1.5" />
<line x1="2227.37" y1="235.2" x2="2227.37" y2="242.4" stroke="#000000" stroke-width="1.5" />
<line x1="2250.49" y1="217.1" x2="2250.49" y2="242.4" stroke="#000000" stroke-width="1.5" />
<text x="2251.69" y="232.2" font-family="'Liberation Mono', monospace" font-size="19.8" letter-spacing="1.5" font-weight="normal" fill="#000000" text-anchor="start" stroke="#000" stroke-width="0.35">52700000</text><rect x="2295.88" y="223.05" width="3.77" height="4.71" fill="#a4a4a8"/><rect x="2309.26" y="223.05" width="3.77" height="4.71" fill="#a4a4a8"/><rect x="2322.64" y="223.05" width="3.77" height="4.71" fill="#a4a4a8"/><rect x="2336.02" y="223.05" width="3.77" height="4.71" fill="#a4a4a8"/><rect x="2349.4" y="223.05" width="3.77" height="4.71" fill="#a4a4a8"/>
<line x1="2273.61" y1="235.2" x2="2273.61" y2="242.4" stroke="#000000" stroke-width="1.5" />
<line x1="2296.74" y1="235.2" x2="2296.74" y2="242.4" stroke="#000000" stroke-width="1.5" />
<line x1="2319.86" y1="235.2" x2="2319.86" y2="242.4" stroke="#000000" stroke-width="1.5" />
<line x1="2342.99" y1="235.2" x2="2342.99" y2="242.4" stroke="#000000" stroke-width="1.5" />
<line x1="2366.11" y1="227.6" x2="2366.11" y2="242.4" stroke="#000000" stroke-width="1.5" />
<line x1="2389.23" y1="235.2" x2="2389.23" y2="242.4" stroke="#000000" stroke-width="1.5" />
<line x1="2412.36" y1="235.2" x2="2412.36" y2="242.4" stroke="#000000" stroke-width="1.5" />
<line x1="2435.48" y1="235.2" x2="2435.48" y2="242.4" stroke="#000000" stroke-width="1.5" />
<line x1="2458.61" y1="235.2" x2="2458.61" y2="242.4" stroke="#000000" stroke-width="1.5" />
<line x1="2481.73" y1="217.1" x2="2481.73" y2="242.4" stroke="#000000" stroke-width="1.5" />
<text x="2482.93" y="232.2" font-family="'Liberation Mono', monospace" font-size="19.8" letter-spacing="1.5" font-weight="normal" fill="#000000" text-anchor="start" stroke="#000" stroke-width="0.35">52710000</text><rect x="2540.5" y="223.05" width="3.77" height="4.71" fill="#a4a4a8"/><rect x="2553.88" y="223.05" width="3.77" height="4.71" fill="#a4a4a8"/><rect x="2567.26" y="223.05" width="3.77" height="4.71" fill="#a4a4a8"/><rect x="2580.64" y="223.05" width="3.77" height="4.71" fill="#a4a4a8"/>
<line x1="2504.85" y1="235.2" x2="2504.85" y2="242.4" stroke="#000000" stroke-width="1.5" />
<line x1="2527.98" y1="235.2" x2="2527.98" y2="242.4" stroke="#000000" stroke-width="1.5" />
<line x1="2551.1" y1="235.2" x2="2551.1" y2="242.4" stroke="#000000" stroke-width="1.5" />
<line x1="2574.23" y1="235.2" x2="2574.23" y2="242.4" stroke="#000000" stroke-width="1.5" />
<line x1="2597.35" y1="227.6" x2="2597.35" y2="242.4" stroke="#000000" stroke-width="1.5" />
<line x1="2620.47" y1="235.2" x2="2620.47" y2="242.4" stroke="#000000" stroke-width="1.5" />
<line x1="2643.6" y1="235.2" x2="2643.6" y2="242.4" stroke="#000000" stroke-width="1.5" />
<line x1="2666.72" y1="235.2" x2="2666.72" y2="242.4" stroke="#000000" stroke-width="1.5" />
<line x1="2689.85" y1="235.2" x2="2689.85" y2="242.4" stroke="#000000" stroke-width="1.5" />
<line x1="2712.97" y1="217.1" x2="2712.97" y2="242.4" stroke="#000000" stroke-width="1.5" />
<text x="2714.17" y="232.2" font-family="'Liberation Mono', monospace" font-size="19.8" letter-spacing="1.5" font-weight="normal" fill="#000000" text-anchor="start" stroke="#000" stroke-width="0.35">52720000</text><rect x="2771.74" y="223.05" width="3.77" height="4.71" fill="#a4a4a8"/><rect x="2785.12" y="223.05" width="3.77" height="4.71" fill="#a4a4a8"/><rect x="2798.5" y="223.05" width="3.77" height="4.71" fill="#a4a4a8"/><rect x="2811.88" y="223.05" width="3.77" height="4.71" fill="#a4a4a8"/>
<line x1="2736.09" y1="235.2" x2="2736.09" y2="242.4" stroke="#000000" stroke-width="1.5" />
<line x1="2759.22" y1="235.2" x2="2759.22" y2="242.4" stroke="#000000" stroke-width="1.5" />
<line x1="2782.34" y1="235.2" x2="2782.34" y2="242.4" stroke="#000000" stroke-width="1.5" />
<line x1="2805.47" y1="235.2" x2="2805.47" y2="242.4" stroke="#000000" stroke-width="1.5" />
<line x1="2828.59" y1="227.6" x2="2828.59" y2="242.4" stroke="#000000" stroke-width="1.5" />
<line x1="2851.71" y1="235.2" x2="2851.71" y2="242.4" stroke="#000000" stroke-width="1.5" />
<line x1="2874.84" y1="235.2" x2="2874.84" y2="242.4" stroke="#000000" stroke-width="1.5" />
<line x1="2897.96" y1="235.2" x2="2897.96" y2="242.4" stroke="#000000" stroke-width="1.5" />
<line x1="2921.09" y1="235.2" x2="2921.09" y2="242.4" stroke="#000000" stroke-width="1.5" />
<line x1="2944.21" y1="217.1" x2="2944.21" y2="242.4" stroke="#000000" stroke-width="1.5" />
<text x="2945.41" y="232.2" font-family="'Liberation Mono', monospace" font-size="19.8" letter-spacing="1.5" font-weight="normal" fill="#000000" text-anchor="start" stroke="#000" stroke-width="0.35">52730000</text><rect x="3002.98" y="223.05" width="3.77" height="4.71" fill="#a4a4a8"/><rect x="3016.36" y="223.05" width="3.77" height="4.71" fill="#a4a4a8"/><rect x="3029.74" y="223.05" width="3.77" height="4.71" fill="#a4a4a8"/><rect x="3043.12" y="223.05" width="3.77" height="4.71" fill="#a4a4a8"/>
<line x1="2967.33" y1="235.2" x2="2967.33" y2="242.4" stroke="#000000" stroke-width="1.5" />
<line x1="2990.46" y1="235.2" x2="2990.46" y2="242.4" stroke="#000000" stroke-width="1.5" />
<line x1="3013.58" y1="235.2" x2="3013.58" y2="242.4" stroke="#000000" stroke-width="1.5" />
<line x1="3036.71" y1="235.2" x2="3036.71" y2="242.4" stroke="#000000" stroke-width="1.5" />
<line x1="3059.83" y1="227.6" x2="3059.83" y2="242.4" stroke="#000000" stroke-width="1.5" />
<line x1="3082.95" y1="235.2" x2="3082.95" y2="242.4" stroke="#000000" stroke-width="1.5" />
<line x1="3106.08" y1="235.2" x2="3106.08" y2="242.4" stroke="#000000" stroke-width="1.5" />
<line x1="3129.2" y1="235.2" x2="3129.2" y2="242.4" stroke="#000000" stroke-width="1.5" />
<line x1="3152.33" y1="235.2" x2="3152.33" y2="242.4" stroke="#000000" stroke-width="1.5" />
</g>
<rect x="846.6" y="242.4" width="2006.4" height="1261.2" fill="#000000" />
<g clip-path="url(#wclip)">
<rect x="847.4" y="1010.6" width="2005.6" height="37" fill="#000080" />
<line x1="796.5" y1="228.3" x2="770.55" y2="228.3" stroke="#00dc00" stroke-width="1.5" />
<line x1="770.55" y1="256.7" x2="815.95" y2="256.7" stroke="#00dcdc" stroke-width="1.5" />
<line x1="815.95" y1="228.3" x2="863.05" y2="228.3" stroke="#00dc00" stroke-width="1.5" />
<line x1="863.05" y1="256.7" x2="908.45" y2="256.7" stroke="#00dcdc" stroke-width="1.5" />
<line x1="908.45" y1="228.3" x2="955.55" y2="228.3" stroke="#00dc00" stroke-width="1.5" />
<line x1="955.55" y1="256.7" x2="1000.94" y2="256.7" stroke="#00dcdc" stroke-width="1.5" />
<line x1="1000.94" y1="228.3" x2="1048.04" y2="228.3" stroke="#00dc00" stroke-width="1.5" />
<line x1="1048.04" y1="256.7" x2="1093.44" y2="256.7" stroke="#00dcdc" stroke-width="1.5" />
<line x1="1093.44" y1="228.3" x2="1140.54" y2="228.3" stroke="#00dc00" stroke-width="1.5" />
<line x1="1140.54" y1="256.7" x2="1185.94" y2="256.7" stroke="#00dcdc" stroke-width="1.5" />
<line x1="1185.94" y1="228.3" x2="1233.03" y2="228.3" stroke="#00dc00" stroke-width="1.5" />
<line x1="1233.03" y1="256.7" x2="1278.43" y2="256.7" stroke="#00dcdc" stroke-width="1.5" />
<line x1="1278.43" y1="228.3" x2="1325.53" y2="228.3" stroke="#00dc00" stroke-width="1.5" />
<line x1="1325.53" y1="256.7" x2="1370.93" y2="256.7" stroke="#00dcdc" stroke-width="1.5" />
<line x1="1370.93" y1="228.3" x2="1418.03" y2="228.3" stroke="#00dc00" stroke-width="1.5" />
<line x1="1418.03" y1="256.7" x2="1463.42" y2="256.7" stroke="#00dcdc" stroke-width="1.5" />
<line x1="1463.42" y1="228.3" x2="1510.52" y2="228.3" stroke="#00dc00" stroke-width="1.5" />
<line x1="1510.52" y1="256.7" x2="1555.92" y2="256.7" stroke="#00dcdc" stroke-width="1.5" />
<line x1="1555.92" y1="228.3" x2="1603.02" y2="228.3" stroke="#00dc00" stroke-width="1.5" />
<line x1="1603.02" y1="256.7" x2="1648.42" y2="256.7" stroke="#00dcdc" stroke-width="1.5" />
<line x1="1648.42" y1="228.3" x2="1695.51" y2="228.3" stroke="#00dc00" stroke-width="1.5" />
<line x1="1695.51" y1="256.7" x2="1740.91" y2="256.7" stroke="#00dcdc" stroke-width="1.5" />
<line x1="1740.91" y1="228.3" x2="1788.01" y2="228.3" stroke="#00dc00" stroke-width="1.5" />
<line x1="1788.01" y1="256.7" x2="1833.41" y2="256.7" stroke="#00dcdc" stroke-width="1.5" />
<line x1="1833.41" y1="228.3" x2="1880.51" y2="228.3" stroke="#00dc00" stroke-width="1.5" />
<line x1="1880.51" y1="256.7" x2="1925.9" y2="256.7" stroke="#00dcdc" stroke-width="1.5" />
<line x1="1925.9" y1="228.3" x2="1973" y2="228.3" stroke="#00dc00" stroke-width="1.5" />
<line x1="1973" y1="256.7" x2="2018.4" y2="256.7" stroke="#00dcdc" stroke-width="1.5" />
<line x1="2018.4" y1="228.3" x2="2065.5" y2="228.3" stroke="#00dc00" stroke-width="1.5" />
<line x1="2065.5" y1="256.7" x2="2110.9" y2="256.7" stroke="#00dcdc" stroke-width="1.5" />
<line x1="2110.9" y1="228.3" x2="2157.99" y2="228.3" stroke="#00dc00" stroke-width="1.5" />
<line x1="2157.99" y1="256.7" x2="2203.39" y2="256.7" stroke="#00dcdc" stroke-width="1.5" />
<line x1="2203.39" y1="228.3" x2="2250.49" y2="228.3" stroke="#00dc00" stroke-width="1.5" />
<line x1="2250.49" y1="256.7" x2="2295.89" y2="256.7" stroke="#00dcdc" stroke-width="1.5" />
<line x1="2295.89" y1="228.3" x2="2342.99" y2="228.3" stroke="#00dc00" stroke-width="1.5" />
<line x1="2342.99" y1="256.7" x2="2388.38" y2="256.7" stroke="#00dcdc" stroke-width="1.5" />
<line x1="2388.38" y1="228.3" x2="2435.48" y2="228.3" stroke="#00dc00" stroke-width="1.5" />
<line x1="2435.48" y1="256.7" x2="2480.88" y2="256.7" stroke="#00dcdc" stroke-width="1.5" />
<line x1="2480.88" y1="228.3" x2="2527.98" y2="228.3" stroke="#00dc00" stroke-width="1.5" />
<line x1="2527.98" y1="256.7" x2="2573.38" y2="256.7" stroke="#00dcdc" stroke-width="1.5" />
<line x1="2573.38" y1="228.3" x2="2620.47" y2="228.3" stroke="#00dc00" stroke-width="1.5" />
<line x1="2620.47" y1="256.7" x2="2665.87" y2="256.7" stroke="#00dcdc" stroke-width="1.5" />
<line x1="2665.87" y1="228.3" x2="2712.97" y2="228.3" stroke="#00dc00" stroke-width="1.5" />
<line x1="2712.97" y1="256.7" x2="2758.37" y2="256.7" stroke="#00dcdc" stroke-width="1.5" />
<line x1="2758.37" y1="228.3" x2="2805.47" y2="228.3" stroke="#00dc00" stroke-width="1.5" />
<line x1="2805.47" y1="256.7" x2="2850.86" y2="256.7" stroke="#00dcdc" stroke-width="1.5" />
<line x1="2850.86" y1="228.3" x2="2897.96" y2="228.3" stroke="#00dc00" stroke-width="1.5" />
<line x1="2897.96" y1="256.7" x2="2943.36" y2="256.7" stroke="#00dcdc" stroke-width="1.5" />
<line x1="2943.36" y1="228.3" x2="2903" y2="228.3" stroke="#00dc00" stroke-width="1.5" />
<line x1="770.55" y1="228.3" x2="770.55" y2="256.7" stroke="#00dcdc" stroke-width="1.5" />
<line x1="815.95" y1="228.3" x2="815.95" y2="256.7" stroke="#00dc00" stroke-width="1.5" />
<line x1="863.05" y1="228.3" x2="863.05" y2="256.7" stroke="#00dcdc" stroke-width="1.5" />
<line x1="908.45" y1="228.3" x2="908.45" y2="256.7" stroke="#00dc00" stroke-width="1.5" />
<line x1="955.55" y1="228.3" x2="955.55" y2="256.7" stroke="#00dcdc" stroke-width="1.5" />
<line x1="1000.94" y1="228.3" x2="1000.94" y2="256.7" stroke="#00dc00" stroke-width="1.5" />
<line x1="1048.04" y1="228.3" x2="1048.04" y2="256.7" stroke="#00dcdc" stroke-width="1.5" />
<line x1="1093.44" y1="228.3" x2="1093.44" y2="256.7" stroke="#00dc00" stroke-width="1.5" />
<line x1="1140.54" y1="228.3" x2="1140.54" y2="256.7" stroke="#00dcdc" stroke-width="1.5" />
<line x1="1185.94" y1="228.3" x2="1185.94" y2="256.7" stroke="#00dc00" stroke-width="1.5" />
<line x1="1233.03" y1="228.3" x2="1233.03" y2="256.7" stroke="#00dcdc" stroke-width="1.5" />
<line x1="1278.43" y1="228.3" x2="1278.43" y2="256.7" stroke="#00dc00" stroke-width="1.5" />
<line x1="1325.53" y1="228.3" x2="1325.53" y2="256.7" stroke="#00dcdc" stroke-width="1.5" />
<line x1="1370.93" y1="228.3" x2="1370.93" y2="256.7" stroke="#00dc00" stroke-width="1.5" />
<line x1="1418.03" y1="228.3" x2="1418.03" y2="256.7" stroke="#00dcdc" stroke-width="1.5" />
<line x1="1463.42" y1="228.3" x2="1463.42" y2="256.7" stroke="#00dc00" stroke-width="1.5" />
<line x1="1510.52" y1="228.3" x2="1510.52" y2="256.7" stroke="#00dcdc" stroke-width="1.5" />
<line x1="1555.92" y1="228.3" x2="1555.92" y2="256.7" stroke="#00dc00" stroke-width="1.5" />
<line x1="1603.02" y1="228.3" x2="1603.02" y2="256.7" stroke="#00dcdc" stroke-width="1.5" />
<line x1="1648.42" y1="228.3" x2="1648.42" y2="256.7" stroke="#00dc00" stroke-width="1.5" />
<line x1="1695.51" y1="228.3" x2="1695.51" y2="256.7" stroke="#00dcdc" stroke-width="1.5" />
<line x1="1740.91" y1="228.3" x2="1740.91" y2="256.7" stroke="#00dc00" stroke-width="1.5" />
<line x1="1788.01" y1="228.3" x2="1788.01" y2="256.7" stroke="#00dcdc" stroke-width="1.5" />
<line x1="1833.41" y1="228.3" x2="1833.41" y2="256.7" stroke="#00dc00" stroke-width="1.5" />
<line x1="1880.51" y1="228.3" x2="1880.51" y2="256.7" stroke="#00dcdc" stroke-width="1.5" />
<line x1="1925.9" y1="228.3" x2="1925.9" y2="256.7" stroke="#00dc00" stroke-width="1.5" />
<line x1="1973" y1="228.3" x2="1973" y2="256.7" stroke="#00dcdc" stroke-width="1.5" />
<line x1="2018.4" y1="228.3" x2="2018.4" y2="256.7" stroke="#00dc00" stroke-width="1.5" />
<line x1="2065.5" y1="228.3" x2="2065.5" y2="256.7" stroke="#00dcdc" stroke-width="1.5" />
<line x1="2110.9" y1="228.3" x2="2110.9" y2="256.7" stroke="#00dc00" stroke-width="1.5" />
<line x1="2157.99" y1="228.3" x2="2157.99" y2="256.7" stroke="#00dcdc" stroke-width="1.5" />
<line x1="2203.39" y1="228.3" x2="2203.39" y2="256.7" stroke="#00dc00" stroke-width="1.5" />
<line x1="2250.49" y1="228.3" x2="2250.49" y2="256.7" stroke="#00dcdc" stroke-width="1.5" />
<line x1="2295.89" y1="228.3" x2="2295.89" y2="256.7" stroke="#00dc00" stroke-width="1.5" />
<line x1="2342.99" y1="228.3" x2="2342.99" y2="256.7" stroke="#00dcdc" stroke-width="1.5" />
<line x1="2388.38" y1="228.3" x2="2388.38" y2="256.7" stroke="#00dc00" stroke-width="1.5" />
<line x1="2435.48" y1="228.3" x2="2435.48" y2="256.7" stroke="#00dcdc" stroke-width="1.5" />
<line x1="2480.88" y1="228.3" x2="2480.88" y2="256.7" stroke="#00dc00" stroke-width="1.5" />
<line x1="2527.98" y1="228.3" x2="2527.98" y2="256.7" stroke="#00dcdc" stroke-width="1.5" />
<line x1="2573.38" y1="228.3" x2="2573.38" y2="256.7" stroke="#00dc00" stroke-width="1.5" />
<line x1="2620.47" y1="228.3" x2="2620.47" y2="256.7" stroke="#00dcdc" stroke-width="1.5" />
<line x1="2665.87" y1="228.3" x2="2665.87" y2="256.7" stroke="#00dc00" stroke-width="1.5" />
<line x1="2712.97" y1="228.3" x2="2712.97" y2="256.7" stroke="#00dcdc" stroke-width="1.5" />
<line x1="2758.37" y1="228.3" x2="2758.37" y2="256.7" stroke="#00dc00" stroke-width="1.5" />
<line x1="2805.47" y1="228.3" x2="2805.47" y2="256.7" stroke="#00dcdc" stroke-width="1.5" />
<line x1="2850.86" y1="228.3" x2="2850.86" y2="256.7" stroke="#00dc00" stroke-width="1.5" />
<line x1="2897.96" y1="228.3" x2="2897.96" y2="256.7" stroke="#00dcdc" stroke-width="1.5" />
<line x1="2943.36" y1="228.3" x2="2943.36" y2="256.7" stroke="#00dc00" stroke-width="1.5" />
<line x1="846.5" y1="265.8" x2="2853" y2="265.8" stroke="#00dc00" stroke-width="1.5" />
<line x1="846.5" y1="303.3" x2="2853" y2="303.3" stroke="#00dc00" stroke-width="1.5" />
<line x1="846.5" y1="340.8" x2="2853" y2="340.8" stroke="#00dc00" stroke-width="1.5" />
<path d="M633.96,378.3 L720.46,378.3 L723.16,388.3 L723.16,396.7 L720.46,406.7 L633.96,406.7 L631.26,396.7 L631.26,388.3 Z" fill="none" stroke="#00dcdc" stroke-width="1.5"/>
<path d="M726.46,378.3 L812.95,378.3 L815.65,388.3 L815.65,396.7 L812.95,406.7 L726.46,406.7 L723.76,396.7 L723.76,388.3 Z" fill="none" stroke="#00dcdc" stroke-width="1.5"/>
<path d="M818.95,378.3 L905.45,378.3 L908.15,388.3 L908.15,396.7 L905.45,406.7 L818.95,406.7 L816.25,396.7 L816.25,388.3 Z" fill="none" stroke="#00dcdc" stroke-width="1.5"/>
<path d="M911.45,378.3 L997.94,378.3 L1000.64,388.3 L1000.64,396.7 L997.94,406.7 L911.45,406.7 L908.75,396.7 L908.75,388.3 Z" fill="none" stroke="#00dcdc" stroke-width="1.5"/>
<path d="M1003.94,378.3 L1090.44,378.3 L1093.14,388.3 L1093.14,396.7 L1090.44,406.7 L1003.94,406.7 L1001.24,396.7 L1001.24,388.3 Z" fill="none" stroke="#00dcdc" stroke-width="1.5"/>
<path d="M1096.44,378.3 L1182.94,378.3 L1185.64,388.3 L1185.64,396.7 L1182.94,406.7 L1096.44,406.7 L1093.74,396.7 L1093.74,388.3 Z" fill="none" stroke="#00dcdc" stroke-width="1.5"/>
<path d="M1188.94,378.3 L1275.43,378.3 L1278.13,388.3 L1278.13,396.7 L1275.43,406.7 L1188.94,406.7 L1186.24,396.7 L1186.24,388.3 Z" fill="none" stroke="#00dcdc" stroke-width="1.5"/>
<path d="M1281.43,378.3 L1367.93,378.3 L1370.63,388.3 L1370.63,396.7 L1367.93,406.7 L1281.43,406.7 L1278.73,396.7 L1278.73,388.3 Z" fill="none" stroke="#00dcdc" stroke-width="1.5"/>
<path d="M1373.93,378.3 L1460.42,378.3 L1463.12,388.3 L1463.12,396.7 L1460.42,406.7 L1373.93,406.7 L1371.23,396.7 L1371.23,388.3 Z" fill="none" stroke="#00dcdc" stroke-width="1.5"/>
<path d="M1466.42,378.3 L1552.92,378.3 L1555.62,388.3 L1555.62,396.7 L1552.92,406.7 L1466.42,406.7 L1463.72,396.7 L1463.72,388.3 Z" fill="none" stroke="#00dcdc" stroke-width="1.5"/>
<path d="M1558.92,378.3 L1645.42,378.3 L1648.12,388.3 L1648.12,396.7 L1645.42,406.7 L1558.92,406.7 L1556.22,396.7 L1556.22,388.3 Z" fill="none" stroke="#00dcdc" stroke-width="1.5"/>
<path d="M1651.42,378.3 L1737.91,378.3 L1740.61,388.3 L1740.61,396.7 L1737.91,406.7 L1651.42,406.7 L1648.72,396.7 L1648.72,388.3 Z" fill="none" stroke="#00dcdc" stroke-width="1.5"/>
<path d="M1743.91,378.3 L1830.41,378.3 L1833.11,388.3 L1833.11,396.7 L1830.41,406.7 L1743.91,406.7 L1741.21,396.7 L1741.21,388.3 Z" fill="none" stroke="#00dcdc" stroke-width="1.5"/>
<path d="M1836.41,378.3 L1922.9,378.3 L1925.6,388.3 L1925.6,396.7 L1922.9,406.7 L1836.41,406.7 L1833.71,396.7 L1833.71,388.3 Z" fill="none" stroke="#00dcdc" stroke-width="1.5"/>
<path d="M1928.9,378.3 L2015.4,378.3 L2018.1,388.3 L2018.1,396.7 L2015.4,406.7 L1928.9,406.7 L1926.2,396.7 L1926.2,388.3 Z" fill="none" stroke="#00dcdc" stroke-width="1.5"/>
<path d="M2021.4,378.3 L2107.9,378.3 L2110.6,388.3 L2110.6,396.7 L2107.9,406.7 L2021.4,406.7 L2018.7,396.7 L2018.7,388.3 Z" fill="none" stroke="#00dcdc" stroke-width="1.5"/>
<path d="M2113.9,378.3 L2200.39,378.3 L2203.09,388.3 L2203.09,396.7 L2200.39,406.7 L2113.9,406.7 L2111.2,396.7 L2111.2,388.3 Z" fill="none" stroke="#00dcdc" stroke-width="1.5"/>
<path d="M2206.39,378.3 L2292.89,378.3 L2295.59,388.3 L2295.59,396.7 L2292.89,406.7 L2206.39,406.7 L2203.69,396.7 L2203.69,388.3 Z" fill="none" stroke="#00dcdc" stroke-width="1.5"/>
<path d="M2298.89,378.3 L2385.38,378.3 L2388.08,388.3 L2388.08,396.7 L2385.38,406.7 L2298.89,406.7 L2296.19,396.7 L2296.19,388.3 Z" fill="none" stroke="#00dcdc" stroke-width="1.5"/>
<path d="M2391.38,378.3 L2477.88,378.3 L2480.58,388.3 L2480.58,396.7 L2477.88,406.7 L2391.38,406.7 L2388.68,396.7 L2388.68,388.3 Z" fill="none" stroke="#00dcdc" stroke-width="1.5"/>
<path d="M2483.88,378.3 L2570.38,378.3 L2573.08,388.3 L2573.08,396.7 L2570.38,406.7 L2483.88,406.7 L2481.18,396.7 L2481.18,388.3 Z" fill="none" stroke="#00dcdc" stroke-width="1.5"/>
<path d="M2576.38,378.3 L2662.87,378.3 L2665.57,388.3 L2665.57,396.7 L2662.87,406.7 L2576.38,406.7 L2573.68,396.7 L2573.68,388.3 Z" fill="none" stroke="#00dcdc" stroke-width="1.5"/>
<path d="M2668.87,378.3 L2755.37,378.3 L2758.07,388.3 L2758.07,396.7 L2755.37,406.7 L2668.87,406.7 L2666.17,396.7 L2666.17,388.3 Z" fill="none" stroke="#00dcdc" stroke-width="1.5"/>
<path d="M2761.37,378.3 L2847.86,378.3 L2850.56,388.3 L2850.56,396.7 L2847.86,406.7 L2761.37,406.7 L2758.67,396.7 L2758.67,388.3 Z" fill="none" stroke="#00dcdc" stroke-width="1.5"/>
<path d="M2853.86,378.3 L2940.36,378.3 L2943.06,388.3 L2943.06,396.7 L2940.36,406.7 L2853.86,406.7 L2851.16,396.7 L2851.16,388.3 Z" fill="none" stroke="#00dcdc" stroke-width="1.5"/>
<text x="871.17" y="398.8" font-family="'Liberation Mono', monospace" font-size="21" letter-spacing="0.9" font-weight="normal" fill="#ffffff" text-anchor="start" stroke="#000000" stroke-width="0.3">2</text>
<text x="948.4" y="398.8" font-family="'Liberation Mono', monospace" font-size="21" letter-spacing="0.9" font-weight="normal" fill="#ffffff" text-anchor="start" stroke="#000000" stroke-width="0.3">0</text><rect x="952.7" y="389.1" width="4" height="5" fill="#000000"/>
<text x="1040.89" y="398.8" font-family="'Liberation Mono', monospace" font-size="21" letter-spacing="0.9" font-weight="normal" fill="#ffffff" text-anchor="start" stroke="#000000" stroke-width="0.3">2</text>
<text x="1133.39" y="398.8" font-family="'Liberation Mono', monospace" font-size="21" letter-spacing="0.9" font-weight="normal" fill="#ffffff" text-anchor="start" stroke="#000000" stroke-width="0.3">0</text><rect x="1137.69" y="389.1" width="4" height="5" fill="#000000"/>
<text x="1225.88" y="398.8" font-family="'Liberation Mono', monospace" font-size="21" letter-spacing="0.9" font-weight="normal" fill="#ffffff" text-anchor="start" stroke="#000000" stroke-width="0.3">2</text>
<text x="1318.38" y="398.8" font-family="'Liberation Mono', monospace" font-size="21" letter-spacing="0.9" font-weight="normal" fill="#ffffff" text-anchor="start" stroke="#000000" stroke-width="0.3">0</text><rect x="1322.68" y="389.1" width="4" height="5" fill="#000000"/>
<text x="1410.88" y="398.8" font-family="'Liberation Mono', monospace" font-size="21" letter-spacing="0.9" font-weight="normal" fill="#ffffff" text-anchor="start" stroke="#000000" stroke-width="0.3">2</text>
<text x="1503.37" y="398.8" font-family="'Liberation Mono', monospace" font-size="21" letter-spacing="0.9" font-weight="normal" fill="#ffffff" text-anchor="start" stroke="#000000" stroke-width="0.3">0</text><rect x="1507.67" y="389.1" width="4" height="5" fill="#000000"/>
<text x="1595.87" y="398.8" font-family="'Liberation Mono', monospace" font-size="21" letter-spacing="0.9" font-weight="normal" fill="#ffffff" text-anchor="start" stroke="#000000" stroke-width="0.3">2</text>
<text x="1688.36" y="398.8" font-family="'Liberation Mono', monospace" font-size="21" letter-spacing="0.9" font-weight="normal" fill="#ffffff" text-anchor="start" stroke="#000000" stroke-width="0.3">0</text><rect x="1692.66" y="389.1" width="4" height="5" fill="#000000"/>
<text x="1780.86" y="398.8" font-family="'Liberation Mono', monospace" font-size="21" letter-spacing="0.9" font-weight="normal" fill="#ffffff" text-anchor="start" stroke="#000000" stroke-width="0.3">2</text>
<text x="1873.36" y="398.8" font-family="'Liberation Mono', monospace" font-size="21" letter-spacing="0.9" font-weight="normal" fill="#ffffff" text-anchor="start" stroke="#000000" stroke-width="0.3">0</text><rect x="1877.66" y="389.1" width="4" height="5" fill="#000000"/>
<text x="1965.85" y="398.8" font-family="'Liberation Mono', monospace" font-size="21" letter-spacing="0.9" font-weight="normal" fill="#ffffff" text-anchor="start" stroke="#000000" stroke-width="0.3">2</text>
<text x="2058.35" y="398.8" font-family="'Liberation Mono', monospace" font-size="21" letter-spacing="0.9" font-weight="normal" fill="#ffffff" text-anchor="start" stroke="#000000" stroke-width="0.3">0</text><rect x="2062.65" y="389.1" width="4" height="5" fill="#000000"/>
<text x="2150.84" y="398.8" font-family="'Liberation Mono', monospace" font-size="21" letter-spacing="0.9" font-weight="normal" fill="#ffffff" text-anchor="start" stroke="#000000" stroke-width="0.3">2</text>
<text x="2243.34" y="398.8" font-family="'Liberation Mono', monospace" font-size="21" letter-spacing="0.9" font-weight="normal" fill="#ffffff" text-anchor="start" stroke="#000000" stroke-width="0.3">0</text><rect x="2247.64" y="389.1" width="4" height="5" fill="#000000"/>
<text x="2335.84" y="398.8" font-family="'Liberation Mono', monospace" font-size="21" letter-spacing="0.9" font-weight="normal" fill="#ffffff" text-anchor="start" stroke="#000000" stroke-width="0.3">2</text>
<text x="2428.33" y="398.8" font-family="'Liberation Mono', monospace" font-size="21" letter-spacing="0.9" font-weight="normal" fill="#ffffff" text-anchor="start" stroke="#000000" stroke-width="0.3">0</text><rect x="2432.63" y="389.1" width="4" height="5" fill="#000000"/>
<text x="2520.83" y="398.8" font-family="'Liberation Mono', monospace" font-size="21" letter-spacing="0.9" font-weight="normal" fill="#ffffff" text-anchor="start" stroke="#000000" stroke-width="0.3">2</text>
<text x="2613.32" y="398.8" font-family="'Liberation Mono', monospace" font-size="21" letter-spacing="0.9" font-weight="normal" fill="#ffffff" text-anchor="start" stroke="#000000" stroke-width="0.3">0</text><rect x="2617.62" y="389.1" width="4" height="5" fill="#000000"/>
<text x="2705.82" y="398.8" font-family="'Liberation Mono', monospace" font-size="21" letter-spacing="0.9" font-weight="normal" fill="#ffffff" text-anchor="start" stroke="#000000" stroke-width="0.3">2</text>
<text x="2798.32" y="398.8" font-family="'Liberation Mono', monospace" font-size="21" letter-spacing="0.9" font-weight="normal" fill="#ffffff" text-anchor="start" stroke="#000000" stroke-width="0.3">0</text><rect x="2802.62" y="389.1" width="4" height="5" fill="#000000"/>
<path d="M633.96,415.8 L720.46,415.8 L723.16,425.8 L723.16,434.2 L720.46,444.2 L633.96,444.2 L631.26,434.2 L631.26,425.8 Z" fill="none" stroke="#00dcdc" stroke-width="1.5"/>
<path d="M726.46,415.8 L812.95,415.8 L815.65,425.8 L815.65,434.2 L812.95,444.2 L726.46,444.2 L723.76,434.2 L723.76,425.8 Z" fill="none" stroke="#00dcdc" stroke-width="1.5"/>
<path d="M818.95,415.8 L905.45,415.8 L908.15,425.8 L908.15,434.2 L905.45,444.2 L818.95,444.2 L816.25,434.2 L816.25,425.8 Z" fill="none" stroke="#00dcdc" stroke-width="1.5"/>
<path d="M911.45,415.8 L997.94,415.8 L1000.64,425.8 L1000.64,434.2 L997.94,444.2 L911.45,444.2 L908.75,434.2 L908.75,425.8 Z" fill="none" stroke="#00dcdc" stroke-width="1.5"/>
<path d="M1003.94,415.8 L1090.44,415.8 L1093.14,425.8 L1093.14,434.2 L1090.44,444.2 L1003.94,444.2 L1001.24,434.2 L1001.24,425.8 Z" fill="none" stroke="#00dcdc" stroke-width="1.5"/>
<path d="M1096.44,415.8 L1182.94,415.8 L1185.64,425.8 L1185.64,434.2 L1182.94,444.2 L1096.44,444.2 L1093.74,434.2 L1093.74,425.8 Z" fill="none" stroke="#00dcdc" stroke-width="1.5"/>
<path d="M1188.94,415.8 L1275.43,415.8 L1278.13,425.8 L1278.13,434.2 L1275.43,444.2 L1188.94,444.2 L1186.24,434.2 L1186.24,425.8 Z" fill="none" stroke="#00dcdc" stroke-width="1.5"/>
<path d="M1281.43,415.8 L1367.93,415.8 L1370.63,425.8 L1370.63,434.2 L1367.93,444.2 L1281.43,444.2 L1278.73,434.2 L1278.73,425.8 Z" fill="none" stroke="#00dcdc" stroke-width="1.5"/>
<path d="M1373.93,415.8 L1460.42,415.8 L1463.12,425.8 L1463.12,434.2 L1460.42,444.2 L1373.93,444.2 L1371.23,434.2 L1371.23,425.8 Z" fill="none" stroke="#00dcdc" stroke-width="1.5"/>
<path d="M1466.42,415.8 L1552.92,415.8 L1555.62,425.8 L1555.62,434.2 L1552.92,444.2 L1466.42,444.2 L1463.72,434.2 L1463.72,425.8 Z" fill="none" stroke="#00dcdc" stroke-width="1.5"/>
<path d="M1558.92,415.8 L1645.42,415.8 L1648.12,425.8 L1648.12,434.2 L1645.42,444.2 L1558.92,444.2 L1556.22,434.2 L1556.22,425.8 Z" fill="none" stroke="#00dcdc" stroke-width="1.5"/>
<path d="M1651.42,415.8 L1737.91,415.8 L1740.61,425.8 L1740.61,434.2 L1737.91,444.2 L1651.42,444.2 L1648.72,434.2 L1648.72,425.8 Z" fill="none" stroke="#00dcdc" stroke-width="1.5"/>
<path d="M1743.91,415.8 L1830.41,415.8 L1833.11,425.8 L1833.11,434.2 L1830.41,444.2 L1743.91,444.2 L1741.21,434.2 L1741.21,425.8 Z" fill="none" stroke="#00dcdc" stroke-width="1.5"/>
<path d="M1836.41,415.8 L1922.9,415.8 L1925.6,425.8 L1925.6,434.2 L1922.9,444.2 L1836.41,444.2 L1833.71,434.2 L1833.71,425.8 Z" fill="none" stroke="#00dcdc" stroke-width="1.5"/>
<path d="M1928.9,415.8 L2015.4,415.8 L2018.1,425.8 L2018.1,434.2 L2015.4,444.2 L1928.9,444.2 L1926.2,434.2 L1926.2,425.8 Z" fill="none" stroke="#00dcdc" stroke-width="1.5"/>
<path d="M2021.4,415.8 L2107.9,415.8 L2110.6,425.8 L2110.6,434.2 L2107.9,444.2 L2021.4,444.2 L2018.7,434.2 L2018.7,425.8 Z" fill="none" stroke="#00dcdc" stroke-width="1.5"/>
<path d="M2113.9,415.8 L2200.39,415.8 L2203.09,425.8 L2203.09,434.2 L2200.39,444.2 L2113.9,444.2 L2111.2,434.2 L2111.2,425.8 Z" fill="none" stroke="#00dcdc" stroke-width="1.5"/>
<path d="M2206.39,415.8 L2292.89,415.8 L2295.59,425.8 L2295.59,434.2 L2292.89,444.2 L2206.39,444.2 L2203.69,434.2 L2203.69,425.8 Z" fill="none" stroke="#00dcdc" stroke-width="1.5"/>
<path d="M2298.89,415.8 L2385.38,415.8 L2388.08,425.8 L2388.08,434.2 L2385.38,444.2 L2298.89,444.2 L2296.19,434.2 L2296.19,425.8 Z" fill="none" stroke="#00dcdc" stroke-width="1.5"/>
<path d="M2391.38,415.8 L2477.88,415.8 L2480.58,425.8 L2480.58,434.2 L2477.88,444.2 L2391.38,444.2 L2388.68,434.2 L2388.68,425.8 Z" fill="none" stroke="#00dcdc" stroke-width="1.5"/>
<path d="M2483.88,415.8 L2570.38,415.8 L2573.08,425.8 L2573.08,434.2 L2570.38,444.2 L2483.88,444.2 L2481.18,434.2 L2481.18,425.8 Z" fill="none" stroke="#00dcdc" stroke-width="1.5"/>
<path d="M2576.38,415.8 L2662.87,415.8 L2665.57,425.8 L2665.57,434.2 L2662.87,444.2 L2576.38,444.2 L2573.68,434.2 L2573.68,425.8 Z" fill="none" stroke="#00dcdc" stroke-width="1.5"/>
<path d="M2668.87,415.8 L2755.37,415.8 L2758.07,425.8 L2758.07,434.2 L2755.37,444.2 L2668.87,444.2 L2666.17,434.2 L2666.17,425.8 Z" fill="none" stroke="#00dcdc" stroke-width="1.5"/>
<path d="M2761.37,415.8 L2847.86,415.8 L2850.56,425.8 L2850.56,434.2 L2847.86,444.2 L2761.37,444.2 L2758.67,434.2 L2758.67,425.8 Z" fill="none" stroke="#00dcdc" stroke-width="1.5"/>
<path d="M2853.86,415.8 L2940.36,415.8 L2943.06,425.8 L2943.06,434.2 L2940.36,444.2 L2853.86,444.2 L2851.16,434.2 L2851.16,425.8 Z" fill="none" stroke="#00dcdc" stroke-width="1.5"/>
<text x="871.17" y="436.3" font-family="'Liberation Mono', monospace" font-size="21" letter-spacing="0.9" font-weight="normal" fill="#ffffff" text-anchor="start" stroke="#000000" stroke-width="0.3">2</text>
<text x="948.4" y="436.3" font-family="'Liberation Mono', monospace" font-size="21" letter-spacing="0.9" font-weight="normal" fill="#ffffff" text-anchor="start" stroke="#000000" stroke-width="0.3">0</text><rect x="952.7" y="426.6" width="4" height="5" fill="#000000"/>
<text x="1040.89" y="436.3" font-family="'Liberation Mono', monospace" font-size="21" letter-spacing="0.9" font-weight="normal" fill="#ffffff" text-anchor="start" stroke="#000000" stroke-width="0.3">2</text>
<text x="1133.39" y="436.3" font-family="'Liberation Mono', monospace" font-size="21" letter-spacing="0.9" font-weight="normal" fill="#ffffff" text-anchor="start" stroke="#000000" stroke-width="0.3">0</text><rect x="1137.69" y="426.6" width="4" height="5" fill="#000000"/>
<text x="1225.88" y="436.3" font-family="'Liberation Mono', monospace" font-size="21" letter-spacing="0.9" font-weight="normal" fill="#ffffff" text-anchor="start" stroke="#000000" stroke-width="0.3">2</text>
<text x="1318.38" y="436.3" font-family="'Liberation Mono', monospace" font-size="21" letter-spacing="0.9" font-weight="normal" fill="#ffffff" text-anchor="start" stroke="#000000" stroke-width="0.3">0</text><rect x="1322.68" y="426.6" width="4" height="5" fill="#000000"/>
<text x="1410.88" y="436.3" font-family="'Liberation Mono', monospace" font-size="21" letter-spacing="0.9" font-weight="normal" fill="#ffffff" text-anchor="start" stroke="#000000" stroke-width="0.3">2</text>
<text x="1503.37" y="436.3" font-family="'Liberation Mono', monospace" font-size="21" letter-spacing="0.9" font-weight="normal" fill="#ffffff" text-anchor="start" stroke="#000000" stroke-width="0.3">0</text><rect x="1507.67" y="426.6" width="4" height="5" fill="#000000"/>
<text x="1595.87" y="436.3" font-family="'Liberation Mono', monospace" font-size="21" letter-spacing="0.9" font-weight="normal" fill="#ffffff" text-anchor="start" stroke="#000000" stroke-width="0.3">2</text>
<text x="1688.36" y="436.3" font-family="'Liberation Mono', monospace" font-size="21" letter-spacing="0.9" font-weight="normal" fill="#ffffff" text-anchor="start" stroke="#000000" stroke-width="0.3">0</text><rect x="1692.66" y="426.6" width="4" height="5" fill="#000000"/>
<text x="1780.86" y="436.3" font-family="'Liberation Mono', monospace" font-size="21" letter-spacing="0.9" font-weight="normal" fill="#ffffff" text-anchor="start" stroke="#000000" stroke-width="0.3">2</text>
<text x="1873.36" y="436.3" font-family="'Liberation Mono', monospace" font-size="21" letter-spacing="0.9" font-weight="normal" fill="#ffffff" text-anchor="start" stroke="#000000" stroke-width="0.3">0</text><rect x="1877.66" y="426.6" width="4" height="5" fill="#000000"/>
<text x="1965.85" y="436.3" font-family="'Liberation Mono', monospace" font-size="21" letter-spacing="0.9" font-weight="normal" fill="#ffffff" text-anchor="start" stroke="#000000" stroke-width="0.3">2</text>
<text x="2058.35" y="436.3" font-family="'Liberation Mono', monospace" font-size="21" letter-spacing="0.9" font-weight="normal" fill="#ffffff" text-anchor="start" stroke="#000000" stroke-width="0.3">0</text><rect x="2062.65" y="426.6" width="4" height="5" fill="#000000"/>
<text x="2150.84" y="436.3" font-family="'Liberation Mono', monospace" font-size="21" letter-spacing="0.9" font-weight="normal" fill="#ffffff" text-anchor="start" stroke="#000000" stroke-width="0.3">2</text>
<text x="2243.34" y="436.3" font-family="'Liberation Mono', monospace" font-size="21" letter-spacing="0.9" font-weight="normal" fill="#ffffff" text-anchor="start" stroke="#000000" stroke-width="0.3">0</text><rect x="2247.64" y="426.6" width="4" height="5" fill="#000000"/>
<text x="2335.84" y="436.3" font-family="'Liberation Mono', monospace" font-size="21" letter-spacing="0.9" font-weight="normal" fill="#ffffff" text-anchor="start" stroke="#000000" stroke-width="0.3">2</text>
<text x="2428.33" y="436.3" font-family="'Liberation Mono', monospace" font-size="21" letter-spacing="0.9" font-weight="normal" fill="#ffffff" text-anchor="start" stroke="#000000" stroke-width="0.3">0</text><rect x="2432.63" y="426.6" width="4" height="5" fill="#000000"/>
<text x="2520.83" y="436.3" font-family="'Liberation Mono', monospace" font-size="21" letter-spacing="0.9" font-weight="normal" fill="#ffffff" text-anchor="start" stroke="#000000" stroke-width="0.3">2</text>
<text x="2613.32" y="436.3" font-family="'Liberation Mono', monospace" font-size="21" letter-spacing="0.9" font-weight="normal" fill="#ffffff" text-anchor="start" stroke="#000000" stroke-width="0.3">0</text><rect x="2617.62" y="426.6" width="4" height="5" fill="#000000"/>
<text x="2705.82" y="436.3" font-family="'Liberation Mono', monospace" font-size="21" letter-spacing="0.9" font-weight="normal" fill="#ffffff" text-anchor="start" stroke="#000000" stroke-width="0.3">2</text>
<text x="2798.32" y="436.3" font-family="'Liberation Mono', monospace" font-size="21" letter-spacing="0.9" font-weight="normal" fill="#ffffff" text-anchor="start" stroke="#000000" stroke-width="0.3">0</text><rect x="2802.62" y="426.6" width="4" height="5" fill="#000000"/>
<line x1="796.5" y1="481.7" x2="815.95" y2="481.7" stroke="#00dcdc" stroke-width="1.5" />
<line x1="815.95" y1="453.3" x2="908.45" y2="453.3" stroke="#00dc00" stroke-width="1.5" />
<line x1="908.45" y1="481.7" x2="1185.94" y2="481.7" stroke="#00dcdc" stroke-width="1.5" />
<line x1="1185.94" y1="453.3" x2="1278.43" y2="453.3" stroke="#00dc00" stroke-width="1.5" />
<line x1="1278.43" y1="481.7" x2="1555.92" y2="481.7" stroke="#00dcdc" stroke-width="1.5" />
<line x1="1555.92" y1="453.3" x2="1648.42" y2="453.3" stroke="#00dc00" stroke-width="1.5" />
<line x1="1648.42" y1="481.7" x2="1925.9" y2="481.7" stroke="#00dcdc" stroke-width="1.5" />
<line x1="1925.9" y1="453.3" x2="2018.4" y2="453.3" stroke="#00dc00" stroke-width="1.5" />
<line x1="2018.4" y1="481.7" x2="2295.89" y2="481.7" stroke="#00dcdc" stroke-width="1.5" />
<line x1="2295.89" y1="453.3" x2="2388.38" y2="453.3" stroke="#00dc00" stroke-width="1.5" />
<line x1="2388.38" y1="481.7" x2="2665.87" y2="481.7" stroke="#00dcdc" stroke-width="1.5" />
<line x1="2665.87" y1="453.3" x2="2758.37" y2="453.3" stroke="#00dc00" stroke-width="1.5" />
<line x1="2758.37" y1="481.7" x2="2903" y2="481.7" stroke="#00dcdc" stroke-width="1.5" />
<line x1="815.95" y1="453.3" x2="815.95" y2="481.7" stroke="#00dc00" stroke-width="1.5" />
<line x1="908.45" y1="453.3" x2="908.45" y2="481.7" stroke="#00dcdc" stroke-width="1.5" />
<line x1="1185.94" y1="453.3" x2="1185.94" y2="481.7" stroke="#00dc00" stroke-width="1.5" />
<line x1="1278.43" y1="453.3" x2="1278.43" y2="481.7" stroke="#00dcdc" stroke-width="1.5" />
<line x1="1555.92" y1="453.3" x2="1555.92" y2="481.7" stroke="#00dc00" stroke-width="1.5" />
<line x1="1648.42" y1="453.3" x2="1648.42" y2="481.7" stroke="#00dcdc" stroke-width="1.5" />
<line x1="1925.9" y1="453.3" x2="1925.9" y2="481.7" stroke="#00dc00" stroke-width="1.5" />
<line x1="2018.4" y1="453.3" x2="2018.4" y2="481.7" stroke="#00dcdc" stroke-width="1.5" />
<line x1="2295.89" y1="453.3" x2="2295.89" y2="481.7" stroke="#00dc00" stroke-width="1.5" />
<line x1="2388.38" y1="453.3" x2="2388.38" y2="481.7" stroke="#00dcdc" stroke-width="1.5" />
<line x1="2665.87" y1="453.3" x2="2665.87" y2="481.7" stroke="#00dc00" stroke-width="1.5" />
<line x1="2758.37" y1="453.3" x2="2758.37" y2="481.7" stroke="#00dcdc" stroke-width="1.5" />
<path d="M633.96,490.8 L720.46,490.8 L723.16,500.8 L723.16,509.2 L720.46,519.2 L633.96,519.2 L631.26,509.2 L631.26,500.8 Z" fill="none" stroke="#00dcdc" stroke-width="1.5"/>
<path d="M726.46,490.8 L812.95,490.8 L815.65,500.8 L815.65,509.2 L812.95,519.2 L726.46,519.2 L723.76,509.2 L723.76,500.8 Z" fill="none" stroke="#00dcdc" stroke-width="1.5"/>
<path d="M818.95,490.8 L905.45,490.8 L908.15,500.8 L908.15,509.2 L905.45,519.2 L818.95,519.2 L816.25,509.2 L816.25,500.8 Z" fill="none" stroke="#00dcdc" stroke-width="1.5"/>
<path d="M911.45,490.8 L997.94,490.8 L1000.64,500.8 L1000.64,509.2 L997.94,519.2 L911.45,519.2 L908.75,509.2 L908.75,500.8 Z" fill="none" stroke="#00dcdc" stroke-width="1.5"/>
<path d="M1003.94,490.8 L1090.44,490.8 L1093.14,500.8 L1093.14,509.2 L1090.44,519.2 L1003.94,519.2 L1001.24,509.2 L1001.24,500.8 Z" fill="none" stroke="#00dcdc" stroke-width="1.5"/>
<path d="M1096.44,490.8 L1182.94,490.8 L1185.64,500.8 L1185.64,509.2 L1182.94,519.2 L1096.44,519.2 L1093.74,509.2 L1093.74,500.8 Z" fill="none" stroke="#00dcdc" stroke-width="1.5"/>
<path d="M1188.94,490.8 L1275.43,490.8 L1278.13,500.8 L1278.13,509.2 L1275.43,519.2 L1188.94,519.2 L1186.24,509.2 L1186.24,500.8 Z" fill="none" stroke="#00dcdc" stroke-width="1.5"/>
<path d="M1281.43,490.8 L1367.93,490.8 L1370.63,500.8 L1370.63,509.2 L1367.93,519.2 L1281.43,519.2 L1278.73,509.2 L1278.73,500.8 Z" fill="none" stroke="#00dcdc" stroke-width="1.5"/>
<path d="M1373.93,490.8 L1460.42,490.8 L1463.12,500.8 L1463.12,509.2 L1460.42,519.2 L1373.93,519.2 L1371.23,509.2 L1371.23,500.8 Z" fill="none" stroke="#00dcdc" stroke-width="1.5"/>
<path d="M1466.42,490.8 L1552.92,490.8 L1555.62,500.8 L1555.62,509.2 L1552.92,519.2 L1466.42,519.2 L1463.72,509.2 L1463.72,500.8 Z" fill="none" stroke="#00dcdc" stroke-width="1.5"/>
<path d="M1558.92,490.8 L1645.42,490.8 L1648.12,500.8 L1648.12,509.2 L1645.42,519.2 L1558.92,519.2 L1556.22,509.2 L1556.22,500.8 Z" fill="none" stroke="#00dcdc" stroke-width="1.5"/>
<path d="M1651.42,490.8 L1737.91,490.8 L1740.61,500.8 L1740.61,509.2 L1737.91,519.2 L1651.42,519.2 L1648.72,509.2 L1648.72,500.8 Z" fill="none" stroke="#00dcdc" stroke-width="1.5"/>
<path d="M1743.91,490.8 L1830.41,490.8 L1833.11,500.8 L1833.11,509.2 L1830.41,519.2 L1743.91,519.2 L1741.21,509.2 L1741.21,500.8 Z" fill="none" stroke="#00dcdc" stroke-width="1.5"/>
<path d="M1836.41,490.8 L1922.9,490.8 L1925.6,500.8 L1925.6,509.2 L1922.9,519.2 L1836.41,519.2 L1833.71,509.2 L1833.71,500.8 Z" fill="none" stroke="#00dcdc" stroke-width="1.5"/>
<path d="M1928.9,490.8 L2015.4,490.8 L2018.1,500.8 L2018.1,509.2 L2015.4,519.2 L1928.9,519.2 L1926.2,509.2 L1926.2,500.8 Z" fill="none" stroke="#00dcdc" stroke-width="1.5"/>
<path d="M2021.4,490.8 L2107.9,490.8 L2110.6,500.8 L2110.6,509.2 L2107.9,519.2 L2021.4,519.2 L2018.7,509.2 L2018.7,500.8 Z" fill="none" stroke="#00dcdc" stroke-width="1.5"/>
<path d="M2113.9,490.8 L2200.39,490.8 L2203.09,500.8 L2203.09,509.2 L2200.39,519.2 L2113.9,519.2 L2111.2,509.2 L2111.2,500.8 Z" fill="none" stroke="#00dcdc" stroke-width="1.5"/>
<path d="M2206.39,490.8 L2292.89,490.8 L2295.59,500.8 L2295.59,509.2 L2292.89,519.2 L2206.39,519.2 L2203.69,509.2 L2203.69,500.8 Z" fill="none" stroke="#00dcdc" stroke-width="1.5"/>
<path d="M2298.89,490.8 L2385.38,490.8 L2388.08,500.8 L2388.08,509.2 L2385.38,519.2 L2298.89,519.2 L2296.19,509.2 L2296.19,500.8 Z" fill="none" stroke="#00dcdc" stroke-width="1.5"/>
<path d="M2391.38,490.8 L2477.88,490.8 L2480.58,500.8 L2480.58,509.2 L2477.88,519.2 L2391.38,519.2 L2388.68,509.2 L2388.68,500.8 Z" fill="none" stroke="#00dcdc" stroke-width="1.5"/>
<path d="M2483.88,490.8 L2570.38,490.8 L2573.08,500.8 L2573.08,509.2 L2570.38,519.2 L2483.88,519.2 L2481.18,509.2 L2481.18,500.8 Z" fill="none" stroke="#00dcdc" stroke-width="1.5"/>
<path d="M2576.38,490.8 L2662.87,490.8 L2665.57,500.8 L2665.57,509.2 L2662.87,519.2 L2576.38,519.2 L2573.68,509.2 L2573.68,500.8 Z" fill="none" stroke="#00dcdc" stroke-width="1.5"/>
<path d="M2668.87,490.8 L2755.37,490.8 L2758.07,500.8 L2758.07,509.2 L2755.37,519.2 L2668.87,519.2 L2666.17,509.2 L2666.17,500.8 Z" fill="none" stroke="#00dcdc" stroke-width="1.5"/>
<path d="M2761.37,490.8 L2847.86,490.8 L2850.56,500.8 L2850.56,509.2 L2847.86,519.2 L2761.37,519.2 L2758.67,509.2 L2758.67,500.8 Z" fill="none" stroke="#00dcdc" stroke-width="1.5"/>
<path d="M2853.86,490.8 L2940.36,490.8 L2943.06,500.8 L2943.06,509.2 L2940.36,519.2 L2853.86,519.2 L2851.16,509.2 L2851.16,500.8 Z" fill="none" stroke="#00dcdc" stroke-width="1.5"/>
<text x="850.92" y="511.3" font-family="'Liberation Mono', monospace" font-size="21" letter-spacing="0.9" font-weight="normal" fill="#ffffff" text-anchor="start" stroke="#000000" stroke-width="0.3">3278</text>
<text x="928.15" y="511.3" font-family="'Liberation Mono', monospace" font-size="21" letter-spacing="0.9" font-weight="normal" fill="#ffffff" text-anchor="start" stroke="#000000" stroke-width="0.3">0000</text><rect x="932.45" y="501.6" width="4" height="5" fill="#000000"/><rect x="945.95" y="501.6" width="4" height="5" fill="#000000"/><rect x="959.45" y="501.6" width="4" height="5" fill="#000000"/><rect x="972.95" y="501.6" width="4" height="5" fill="#000000"/>
<text x="1020.64" y="511.3" font-family="'Liberation Mono', monospace" font-size="21" letter-spacing="0.9" font-weight="normal" fill="#ffffff" text-anchor="start" stroke="#000000" stroke-width="0.3">3278</text>
<text x="1113.14" y="511.3" font-family="'Liberation Mono', monospace" font-size="21" letter-spacing="0.9" font-weight="normal" fill="#ffffff" text-anchor="start" stroke="#000000" stroke-width="0.3">0000</text><rect x="1117.44" y="501.6" width="4" height="5" fill="#000000"/><rect x="1130.94" y="501.6" width="4" height="5" fill="#000000"/><rect x="1144.44" y="501.6" width="4" height="5" fill="#000000"/><rect x="1157.94" y="501.6" width="4" height="5" fill="#000000"/>
<text x="1205.63" y="511.3" font-family="'Liberation Mono', monospace" font-size="21" letter-spacing="0.9" font-weight="normal" fill="#ffffff" text-anchor="start" stroke="#000000" stroke-width="0.3">8f9c</text>
<text x="1298.13" y="511.3" font-family="'Liberation Mono', monospace" font-size="21" letter-spacing="0.9" font-weight="normal" fill="#ffffff" text-anchor="start" stroke="#000000" stroke-width="0.3">0000</text><rect x="1302.43" y="501.6" width="4" height="5" fill="#000000"/><rect x="1315.93" y="501.6" width="4" height="5" fill="#000000"/><rect x="1329.43" y="501.6" width="4" height="5" fill="#000000"/><rect x="1342.93" y="501.6" width="4" height="5" fill="#000000"/>
<text x="1390.63" y="511.3" font-family="'Liberation Mono', monospace" font-size="21" letter-spacing="0.9" font-weight="normal" fill="#ffffff" text-anchor="start" stroke="#000000" stroke-width="0.3">8f9c</text>
<text x="1483.12" y="511.3" font-family="'Liberation Mono', monospace" font-size="21" letter-spacing="0.9" font-weight="normal" fill="#ffffff" text-anchor="start" stroke="#000000" stroke-width="0.3">0000</text><rect x="1487.42" y="501.6" width="4" height="5" fill="#000000"/><rect x="1500.92" y="501.6" width="4" height="5" fill="#000000"/><rect x="1514.42" y="501.6" width="4" height="5" fill="#000000"/><rect x="1527.92" y="501.6" width="4" height="5" fill="#000000"/>
<text x="1575.62" y="511.3" font-family="'Liberation Mono', monospace" font-size="21" letter-spacing="0.9" font-weight="normal" fill="#ffffff" text-anchor="start" stroke="#000000" stroke-width="0.3">c43c</text>
<text x="1668.11" y="511.3" font-family="'Liberation Mono', monospace" font-size="21" letter-spacing="0.9" font-weight="normal" fill="#ffffff" text-anchor="start" stroke="#000000" stroke-width="0.3">0000</text><rect x="1672.41" y="501.6" width="4" height="5" fill="#000000"/><rect x="1685.91" y="501.6" width="4" height="5" fill="#000000"/><rect x="1699.41" y="501.6" width="4" height="5" fill="#000000"/><rect x="1712.91" y="501.6" width="4" height="5" fill="#000000"/>
<text x="1760.61" y="511.3" font-family="'Liberation Mono', monospace" font-size="21" letter-spacing="0.9" font-weight="normal" fill="#ffffff" text-anchor="start" stroke="#000000" stroke-width="0.3">c43c</text>
<text x="1853.11" y="511.3" font-family="'Liberation Mono', monospace" font-size="21" letter-spacing="0.9" font-weight="normal" fill="#ffffff" text-anchor="start" stroke="#000000" stroke-width="0.3">0000</text><rect x="1857.41" y="501.6" width="4" height="5" fill="#000000"/><rect x="1870.91" y="501.6" width="4" height="5" fill="#000000"/><rect x="1884.41" y="501.6" width="4" height="5" fill="#000000"/><rect x="1897.91" y="501.6" width="4" height="5" fill="#000000"/>
<text x="1945.6" y="511.3" font-family="'Liberation Mono', monospace" font-size="21" letter-spacing="0.9" font-weight="normal" fill="#ffffff" text-anchor="start" stroke="#000000" stroke-width="0.3">1b18</text>
<text x="2038.1" y="511.3" font-family="'Liberation Mono', monospace" font-size="21" letter-spacing="0.9" font-weight="normal" fill="#ffffff" text-anchor="start" stroke="#000000" stroke-width="0.3">0000</text><rect x="2042.4" y="501.6" width="4" height="5" fill="#000000"/><rect x="2055.9" y="501.6" width="4" height="5" fill="#000000"/><rect x="2069.4" y="501.6" width="4" height="5" fill="#000000"/><rect x="2082.9" y="501.6" width="4" height="5" fill="#000000"/>
<text x="2130.59" y="511.3" font-family="'Liberation Mono', monospace" font-size="21" letter-spacing="0.9" font-weight="normal" fill="#ffffff" text-anchor="start" stroke="#000000" stroke-width="0.3">1b18</text>
<text x="2223.09" y="511.3" font-family="'Liberation Mono', monospace" font-size="21" letter-spacing="0.9" font-weight="normal" fill="#ffffff" text-anchor="start" stroke="#000000" stroke-width="0.3">0000</text><rect x="2227.39" y="501.6" width="4" height="5" fill="#000000"/><rect x="2240.89" y="501.6" width="4" height="5" fill="#000000"/><rect x="2254.39" y="501.6" width="4" height="5" fill="#000000"/><rect x="2267.89" y="501.6" width="4" height="5" fill="#000000"/>
<text x="2315.59" y="511.3" font-family="'Liberation Mono', monospace" font-size="21" letter-spacing="0.9" font-weight="normal" fill="#ffffff" text-anchor="start" stroke="#000000" stroke-width="0.3">6f0c</text><rect x="2346.89" y="501.6" width="4" height="5" fill="#000000"/>
<text x="2408.08" y="511.3" font-family="'Liberation Mono', monospace" font-size="21" letter-spacing="0.9" font-weight="normal" fill="#ffffff" text-anchor="start" stroke="#000000" stroke-width="0.3">0000</text><rect x="2412.38" y="501.6" width="4" height="5" fill="#000000"/><rect x="2425.88" y="501.6" width="4" height="5" fill="#000000"/><rect x="2439.38" y="501.6" width="4" height="5" fill="#000000"/><rect x="2452.88" y="501.6" width="4" height="5" fill="#000000"/>
<text x="2500.58" y="511.3" font-family="'Liberation Mono', monospace" font-size="21" letter-spacing="0.9" font-weight="normal" fill="#ffffff" text-anchor="start" stroke="#000000" stroke-width="0.3">6f0c</text><rect x="2531.88" y="501.6" width="4" height="5" fill="#000000"/>
<text x="2593.07" y="511.3" font-family="'Liberation Mono', monospace" font-size="21" letter-spacing="0.9" font-weight="normal" fill="#ffffff" text-anchor="start" stroke="#000000" stroke-width="0.3">0000</text><rect x="2597.37" y="501.6" width="4" height="5" fill="#000000"/><rect x="2610.87" y="501.6" width="4" height="5" fill="#000000"/><rect x="2624.37" y="501.6" width="4" height="5" fill="#000000"/><rect x="2637.87" y="501.6" width="4" height="5" fill="#000000"/>
<text x="2685.57" y="511.3" font-family="'Liberation Mono', monospace" font-size="21" letter-spacing="0.9" font-weight="normal" fill="#ffffff" text-anchor="start" stroke="#000000" stroke-width="0.3">5c84</text>
<text x="2778.07" y="511.3" font-family="'Liberation Mono', monospace" font-size="21" letter-spacing="0.9" font-weight="normal" fill="#ffffff" text-anchor="start" stroke="#000000" stroke-width="0.3">0000</text><rect x="2782.37" y="501.6" width="4" height="5" fill="#000000"/><rect x="2795.87" y="501.6" width="4" height="5" fill="#000000"/><rect x="2809.37" y="501.6" width="4" height="5" fill="#000000"/><rect x="2822.87" y="501.6" width="4" height="5" fill="#000000"/>
<path d="M541.46,528.3 L720.46,528.3 L723.16,538.3 L723.16,546.7 L720.46,556.7 L541.46,556.7 L538.76,546.7 L538.76,538.3 Z" fill="none" stroke="#00dcdc" stroke-width="1.5"/>
<path d="M726.46,528.3 L905.45,528.3 L908.15,538.3 L908.15,546.7 L905.45,556.7 L726.46,556.7 L723.76,546.7 L723.76,538.3 Z" fill="none" stroke="#00dcdc" stroke-width="1.5"/>
<path d="M911.45,528.3 L1090.44,528.3 L1093.14,538.3 L1093.14,546.7 L1090.44,556.7 L911.45,556.7 L908.75,546.7 L908.75,538.3 Z" fill="none" stroke="#00dcdc" stroke-width="1.5"/>
<path d="M1096.44,528.3 L1275.43,528.3 L1278.13,538.3 L1278.13,546.7 L1275.43,556.7 L1096.44,556.7 L1093.74,546.7 L1093.74,538.3 Z" fill="none" stroke="#00dcdc" stroke-width="1.5"/>
<path d="M1281.43,528.3 L1460.42,528.3 L1463.12,538.3 L1463.12,546.7 L1460.42,556.7 L1281.43,556.7 L1278.73,546.7 L1278.73,538.3 Z" fill="none" stroke="#00dcdc" stroke-width="1.5"/>
<path d="M1466.42,528.3 L1645.42,528.3 L1648.12,538.3 L1648.12,546.7 L1645.42,556.7 L1466.42,556.7 L1463.72,546.7 L1463.72,538.3 Z" fill="none" stroke="#00dcdc" stroke-width="1.5"/>
<path d="M1651.42,528.3 L1830.41,528.3 L1833.11,538.3 L1833.11,546.7 L1830.41,556.7 L1651.42,556.7 L1648.72,546.7 L1648.72,538.3 Z" fill="none" stroke="#00dcdc" stroke-width="1.5"/>
<path d="M1836.41,528.3 L2015.4,528.3 L2018.1,538.3 L2018.1,546.7 L2015.4,556.7 L1836.41,556.7 L1833.71,546.7 L1833.71,538.3 Z" fill="none" stroke="#00dcdc" stroke-width="1.5"/>
<path d="M2021.4,528.3 L2200.39,528.3 L2203.09,538.3 L2203.09,546.7 L2200.39,556.7 L2021.4,556.7 L2018.7,546.7 L2018.7,538.3 Z" fill="none" stroke="#00dcdc" stroke-width="1.5"/>
<path d="M2206.39,528.3 L2385.38,528.3 L2388.08,538.3 L2388.08,546.7 L2385.38,556.7 L2206.39,556.7 L2203.69,546.7 L2203.69,538.3 Z" fill="none" stroke="#00dcdc" stroke-width="1.5"/>
<path d="M2391.38,528.3 L2570.38,528.3 L2573.08,538.3 L2573.08,546.7 L2570.38,556.7 L2391.38,556.7 L2388.68,546.7 L2388.68,538.3 Z" fill="none" stroke="#00dcdc" stroke-width="1.5"/>
<path d="M2576.38,528.3 L2755.37,528.3 L2758.07,538.3 L2758.07,546.7 L2755.37,556.7 L2576.38,556.7 L2573.68,546.7 L2573.68,538.3 Z" fill="none" stroke="#00dcdc" stroke-width="1.5"/>
<text x="857.67" y="548.8" font-family="'Liberation Mono', monospace" font-size="21" letter-spacing="0.9" font-weight="normal" fill="#ffffff" text-anchor="start" stroke="#000000" stroke-width="0.3">*00</text><rect x="875.47" y="539.1" width="4" height="5" fill="#000000"/><rect x="888.97" y="539.1" width="4" height="5" fill="#000000"/>
<text x="940.64" y="548.8" font-family="'Liberation Mono', monospace" font-size="21" letter-spacing="0.9" font-weight="normal" fill="#ffffff" text-anchor="start" stroke="#000000" stroke-width="0.3">000c_e1d5</text><rect x="944.94" y="539.1" width="4" height="5" fill="#000000"/><rect x="958.44" y="539.1" width="4" height="5" fill="#000000"/><rect x="971.94" y="539.1" width="4" height="5" fill="#000000"/>
<text x="1125.64" y="548.8" font-family="'Liberation Mono', monospace" font-size="21" letter-spacing="0.9" font-weight="normal" fill="#ffffff" text-anchor="start" stroke="#000000" stroke-width="0.3">0000_0000</text><rect x="1129.94" y="539.1" width="4" height="5" fill="#000000"/><rect x="1143.44" y="539.1" width="4" height="5" fill="#000000"/><rect x="1156.94" y="539.1" width="4" height="5" fill="#000000"/><rect x="1170.44" y="539.1" width="4" height="5" fill="#000000"/><rect x="1197.44" y="539.1" width="4" height="5" fill="#000000"/><rect x="1210.94" y="539.1" width="4" height="5" fill="#000000"/><rect x="1224.44" y="539.1" width="4" height="5" fill="#000000"/><rect x="1237.94" y="539.1" width="4" height="5" fill="#000000"/>
<text x="1310.63" y="548.8" font-family="'Liberation Mono', monospace" font-size="21" letter-spacing="0.9" font-weight="normal" fill="#ffffff" text-anchor="start" stroke="#000000" stroke-width="0.3">000c_e2d6</text><rect x="1314.93" y="539.1" width="4" height="5" fill="#000000"/><rect x="1328.43" y="539.1" width="4" height="5" fill="#000000"/><rect x="1341.93" y="539.1" width="4" height="5" fill="#000000"/>
<text x="1495.62" y="548.8" font-family="'Liberation Mono', monospace" font-size="21" letter-spacing="0.9" font-weight="normal" fill="#ffffff" text-anchor="start" stroke="#000000" stroke-width="0.3">0000_0000</text><rect x="1499.92" y="539.1" width="4" height="5" fill="#000000"/><rect x="1513.42" y="539.1" width="4" height="5" fill="#000000"/><rect x="1526.92" y="539.1" width="4" height="5" fill="#000000"/><rect x="1540.42" y="539.1" width="4" height="5" fill="#000000"/><rect x="1567.42" y="539.1" width="4" height="5" fill="#000000"/><rect x="1580.92" y="539.1" width="4" height="5" fill="#000000"/><rect x="1594.42" y="539.1" width="4" height="5" fill="#000000"/><rect x="1607.92" y="539.1" width="4" height="5" fill="#000000"/>
<text x="1680.61" y="548.8" font-family="'Liberation Mono', monospace" font-size="21" letter-spacing="0.9" font-weight="normal" fill="#ffffff" text-anchor="start" stroke="#000000" stroke-width="0.3">000c_e3d7</text><rect x="1684.91" y="539.1" width="4" height="5" fill="#000000"/><rect x="1698.41" y="539.1" width="4" height="5" fill="#000000"/><rect x="1711.91" y="539.1" width="4" height="5" fill="#000000"/>
<text x="1865.6" y="548.8" font-family="'Liberation Mono', monospace" font-size="21" letter-spacing="0.9" font-weight="normal" fill="#ffffff" text-anchor="start" stroke="#000000" stroke-width="0.3">0000_0000</text><rect x="1869.9" y="539.1" width="4" height="5" fill="#000000"/><rect x="1883.4" y="539.1" width="4" height="5" fill="#000000"/><rect x="1896.9" y="539.1" width="4" height="5" fill="#000000"/><rect x="1910.4" y="539.1" width="4" height="5" fill="#000000"/><rect x="1937.4" y="539.1" width="4" height="5" fill="#000000"/><rect x="1950.9" y="539.1" width="4" height="5" fill="#000000"/><rect x="1964.4" y="539.1" width="4" height="5" fill="#000000"/><rect x="1977.9" y="539.1" width="4" height="5" fill="#000000"/>
<text x="2050.6" y="548.8" font-family="'Liberation Mono', monospace" font-size="21" letter-spacing="0.9" font-weight="normal" fill="#ffffff" text-anchor="start" stroke="#000000" stroke-width="0.3">000c_e4d8</text><rect x="2054.9" y="539.1" width="4" height="5" fill="#000000"/><rect x="2068.4" y="539.1" width="4" height="5" fill="#000000"/><rect x="2081.9" y="539.1" width="4" height="5" fill="#000000"/>
<text x="2235.59" y="548.8" font-family="'Liberation Mono', monospace" font-size="21" letter-spacing="0.9" font-weight="normal" fill="#ffffff" text-anchor="start" stroke="#000000" stroke-width="0.3">0000_0000</text><rect x="2239.89" y="539.1" width="4" height="5" fill="#000000"/><rect x="2253.39" y="539.1" width="4" height="5" fill="#000000"/><rect x="2266.89" y="539.1" width="4" height="5" fill="#000000"/><rect x="2280.39" y="539.1" width="4" height="5" fill="#000000"/><rect x="2307.39" y="539.1" width="4" height="5" fill="#000000"/><rect x="2320.89" y="539.1" width="4" height="5" fill="#000000"/><rect x="2334.39" y="539.1" width="4" height="5" fill="#000000"/><rect x="2347.89" y="539.1" width="4" height="5" fill="#000000"/>
<text x="2420.58" y="548.8" font-family="'Liberation Mono', monospace" font-size="21" letter-spacing="0.9" font-weight="normal" fill="#ffffff" text-anchor="start" stroke="#000000" stroke-width="0.3">000c_e5d9</text><rect x="2424.88" y="539.1" width="4" height="5" fill="#000000"/><rect x="2438.38" y="539.1" width="4" height="5" fill="#000000"/><rect x="2451.88" y="539.1" width="4" height="5" fill="#000000"/>
<text x="2605.57" y="548.8" font-family="'Liberation Mono', monospace" font-size="21" letter-spacing="0.9" font-weight="normal" fill="#ffffff" text-anchor="start" stroke="#000000" stroke-width="0.3">0000_0000</text><rect x="2609.87" y="539.1" width="4" height="5" fill="#000000"/><rect x="2623.37" y="539.1" width="4" height="5" fill="#000000"/><rect x="2636.87" y="539.1" width="4" height="5" fill="#000000"/><rect x="2650.37" y="539.1" width="4" height="5" fill="#000000"/><rect x="2677.37" y="539.1" width="4" height="5" fill="#000000"/><rect x="2690.87" y="539.1" width="4" height="5" fill="#000000"/><rect x="2704.37" y="539.1" width="4" height="5" fill="#000000"/><rect x="2717.87" y="539.1" width="4" height="5" fill="#000000"/>
<path d="M2761.37,528.3 L2940.36,528.3 L2943.06,538.3 L2943.06,546.7 L2940.36,556.7 L2761.37,556.7 L2758.67,546.7 L2758.67,538.3 Z" fill="none" stroke="#00dcdc" stroke-width="1.5"/>
<g clip-path="url(#clipR8)"><text x="2747.5" y="548.8" font-family="'Liberation Mono', monospace" font-size="21" letter-spacing="0.9" font-weight="normal" fill="#ffffff" text-anchor="start" stroke="#000000" stroke-width="0.3">000c_e6da</text><rect x="2751.8" y="539.1" width="4" height="5" fill="#000000"/><rect x="2765.3" y="539.1" width="4" height="5" fill="#000000"/><rect x="2778.8" y="539.1" width="4" height="5" fill="#000000"/></g>
<line x1="846.5" y1="565.8" x2="2853" y2="565.8" stroke="#00dc00" stroke-width="1.5" />
<line x1="846.5" y1="631.7" x2="2853" y2="631.7" stroke="#00dcdc" stroke-width="1.5" />
<rect x="846.5" y="640.05" width="2006.5" height="29.9" fill="#ff0000" />
<rect x="1094.04" y="639.8" width="91" height="30.4" fill="#000000" />
<path d="M1093.74,640.8 H1182.84 L1184.84,643.8 V650.3 M1184.84,659.7 V666.2 L1182.84,669.2 H1093.74" fill="none" stroke="#00dcdc" stroke-width="1.5"/>
<text x="1106.39" y="661.3" font-family="'Liberation Mono', monospace" font-size="21" letter-spacing="0.9" font-weight="normal" fill="#ffffff" text-anchor="start" stroke="#000000" stroke-width="0.3">*e1d5</text>
<rect x="1464.02" y="639.8" width="91" height="30.4" fill="#000000" />
<path d="M1463.72,640.8 H1552.82 L1554.82,643.8 V650.3 M1554.82,659.7 V666.2 L1552.82,669.2 H1463.72" fill="none" stroke="#00dcdc" stroke-width="1.5"/>
<text x="1476.37" y="661.3" font-family="'Liberation Mono', monospace" font-size="21" letter-spacing="0.9" font-weight="normal" fill="#ffffff" text-anchor="start" stroke="#000000" stroke-width="0.3">*e2d6</text>
<rect x="1834.01" y="639.8" width="91" height="30.4" fill="#000000" />
<path d="M1833.71,640.8 H1922.8 L1924.8,643.8 V650.3 M1924.8,659.7 V666.2 L1922.8,669.2 H1833.71" fill="none" stroke="#00dcdc" stroke-width="1.5"/>
<text x="1846.36" y="661.3" font-family="'Liberation Mono', monospace" font-size="21" letter-spacing="0.9" font-weight="normal" fill="#ffffff" text-anchor="start" stroke="#000000" stroke-width="0.3">*e3d7</text>
<rect x="2203.99" y="639.8" width="91" height="30.4" fill="#000000" />
<path d="M2203.69,640.8 H2292.79 L2294.79,643.8 V650.3 M2294.79,659.7 V666.2 L2292.79,669.2 H2203.69" fill="none" stroke="#00dcdc" stroke-width="1.5"/>
<text x="2216.34" y="661.3" font-family="'Liberation Mono', monospace" font-size="21" letter-spacing="0.9" font-weight="normal" fill="#ffffff" text-anchor="start" stroke="#000000" stroke-width="0.3">*e4d8</text>
<rect x="2573.98" y="639.8" width="91" height="30.4" fill="#000000" />
<path d="M2573.68,640.8 H2662.77 L2664.77,643.8 V650.3 M2664.77,659.7 V666.2 L2662.77,669.2 H2573.68" fill="none" stroke="#00dcdc" stroke-width="1.5"/>
<text x="2586.32" y="661.3" font-family="'Liberation Mono', monospace" font-size="21" letter-spacing="0.9" font-weight="normal" fill="#ffffff" text-anchor="start" stroke="#000000" stroke-width="0.3">*e5d9</text>
<line x1="796.5" y1="715.8" x2="770.55" y2="715.8" stroke="#00dc00" stroke-width="1.5" />
<line x1="770.55" y1="744.2" x2="815.95" y2="744.2" stroke="#00dcdc" stroke-width="1.5" />
<line x1="815.95" y1="715.8" x2="863.05" y2="715.8" stroke="#00dc00" stroke-width="1.5" />
<line x1="863.05" y1="744.2" x2="908.45" y2="744.2" stroke="#00dcdc" stroke-width="1.5" />
<line x1="908.45" y1="715.8" x2="955.55" y2="715.8" stroke="#00dc00" stroke-width="1.5" />
<line x1="955.55" y1="744.2" x2="1000.94" y2="744.2" stroke="#00dcdc" stroke-width="1.5" />
<line x1="1000.94" y1="715.8" x2="1048.04" y2="715.8" stroke="#00dc00" stroke-width="1.5" />
<line x1="1048.04" y1="744.2" x2="1093.44" y2="744.2" stroke="#00dcdc" stroke-width="1.5" />
<line x1="1093.44" y1="715.8" x2="1140.54" y2="715.8" stroke="#00dc00" stroke-width="1.5" />
<line x1="1140.54" y1="744.2" x2="1185.94" y2="744.2" stroke="#00dcdc" stroke-width="1.5" />
<line x1="1185.94" y1="715.8" x2="1233.03" y2="715.8" stroke="#00dc00" stroke-width="1.5" />
<line x1="1233.03" y1="744.2" x2="1278.43" y2="744.2" stroke="#00dcdc" stroke-width="1.5" />
<line x1="1278.43" y1="715.8" x2="1325.53" y2="715.8" stroke="#00dc00" stroke-width="1.5" />
<line x1="1325.53" y1="744.2" x2="1370.93" y2="744.2" stroke="#00dcdc" stroke-width="1.5" />
<line x1="1370.93" y1="715.8" x2="1418.03" y2="715.8" stroke="#00dc00" stroke-width="1.5" />
<line x1="1418.03" y1="744.2" x2="1463.42" y2="744.2" stroke="#00dcdc" stroke-width="1.5" />
<line x1="1463.42" y1="715.8" x2="1510.52" y2="715.8" stroke="#00dc00" stroke-width="1.5" />
<line x1="1510.52" y1="744.2" x2="1555.92" y2="744.2" stroke="#00dcdc" stroke-width="1.5" />
<line x1="1555.92" y1="715.8" x2="1603.02" y2="715.8" stroke="#00dc00" stroke-width="1.5" />
<line x1="1603.02" y1="744.2" x2="1648.42" y2="744.2" stroke="#00dcdc" stroke-width="1.5" />
<line x1="1648.42" y1="715.8" x2="1695.51" y2="715.8" stroke="#00dc00" stroke-width="1.5" />
<line x1="1695.51" y1="744.2" x2="1740.91" y2="744.2" stroke="#00dcdc" stroke-width="1.5" />
<line x1="1740.91" y1="715.8" x2="1788.01" y2="715.8" stroke="#00dc00" stroke-width="1.5" />
<line x1="1788.01" y1="744.2" x2="1833.41" y2="744.2" stroke="#00dcdc" stroke-width="1.5" />
<line x1="1833.41" y1="715.8" x2="1880.51" y2="715.8" stroke="#00dc00" stroke-width="1.5" />
<line x1="1880.51" y1="744.2" x2="1925.9" y2="744.2" stroke="#00dcdc" stroke-width="1.5" />
<line x1="1925.9" y1="715.8" x2="1973" y2="715.8" stroke="#00dc00" stroke-width="1.5" />
<line x1="1973" y1="744.2" x2="2018.4" y2="744.2" stroke="#00dcdc" stroke-width="1.5" />
<line x1="2018.4" y1="715.8" x2="2065.5" y2="715.8" stroke="#00dc00" stroke-width="1.5" />
<line x1="2065.5" y1="744.2" x2="2110.9" y2="744.2" stroke="#00dcdc" stroke-width="1.5" />
<line x1="2110.9" y1="715.8" x2="2157.99" y2="715.8" stroke="#00dc00" stroke-width="1.5" />
<line x1="2157.99" y1="744.2" x2="2203.39" y2="744.2" stroke="#00dcdc" stroke-width="1.5" />
<line x1="2203.39" y1="715.8" x2="2250.49" y2="715.8" stroke="#00dc00" stroke-width="1.5" />
<line x1="2250.49" y1="744.2" x2="2295.89" y2="744.2" stroke="#00dcdc" stroke-width="1.5" />
<line x1="2295.89" y1="715.8" x2="2342.99" y2="715.8" stroke="#00dc00" stroke-width="1.5" />
<line x1="2342.99" y1="744.2" x2="2388.38" y2="744.2" stroke="#00dcdc" stroke-width="1.5" />
<line x1="2388.38" y1="715.8" x2="2435.48" y2="715.8" stroke="#00dc00" stroke-width="1.5" />
<line x1="2435.48" y1="744.2" x2="2480.88" y2="744.2" stroke="#00dcdc" stroke-width="1.5" />
<line x1="2480.88" y1="715.8" x2="2527.98" y2="715.8" stroke="#00dc00" stroke-width="1.5" />
<line x1="2527.98" y1="744.2" x2="2573.38" y2="744.2" stroke="#00dcdc" stroke-width="1.5" />
<line x1="2573.38" y1="715.8" x2="2620.47" y2="715.8" stroke="#00dc00" stroke-width="1.5" />
<line x1="2620.47" y1="744.2" x2="2665.87" y2="744.2" stroke="#00dcdc" stroke-width="1.5" />
<line x1="2665.87" y1="715.8" x2="2712.97" y2="715.8" stroke="#00dc00" stroke-width="1.5" />
<line x1="2712.97" y1="744.2" x2="2758.37" y2="744.2" stroke="#00dcdc" stroke-width="1.5" />
<line x1="2758.37" y1="715.8" x2="2805.47" y2="715.8" stroke="#00dc00" stroke-width="1.5" />
<line x1="2805.47" y1="744.2" x2="2850.86" y2="744.2" stroke="#00dcdc" stroke-width="1.5" />
<line x1="2850.86" y1="715.8" x2="2897.96" y2="715.8" stroke="#00dc00" stroke-width="1.5" />
<line x1="2897.96" y1="744.2" x2="2943.36" y2="744.2" stroke="#00dcdc" stroke-width="1.5" />
<line x1="2943.36" y1="715.8" x2="2903" y2="715.8" stroke="#00dc00" stroke-width="1.5" />
<line x1="770.55" y1="715.8" x2="770.55" y2="744.2" stroke="#00dcdc" stroke-width="1.5" />
<line x1="815.95" y1="715.8" x2="815.95" y2="744.2" stroke="#00dc00" stroke-width="1.5" />
<line x1="863.05" y1="715.8" x2="863.05" y2="744.2" stroke="#00dcdc" stroke-width="1.5" />
<line x1="908.45" y1="715.8" x2="908.45" y2="744.2" stroke="#00dc00" stroke-width="1.5" />
<line x1="955.55" y1="715.8" x2="955.55" y2="744.2" stroke="#00dcdc" stroke-width="1.5" />
<line x1="1000.94" y1="715.8" x2="1000.94" y2="744.2" stroke="#00dc00" stroke-width="1.5" />
<line x1="1048.04" y1="715.8" x2="1048.04" y2="744.2" stroke="#00dcdc" stroke-width="1.5" />
<line x1="1093.44" y1="715.8" x2="1093.44" y2="744.2" stroke="#00dc00" stroke-width="1.5" />
<line x1="1140.54" y1="715.8" x2="1140.54" y2="744.2" stroke="#00dcdc" stroke-width="1.5" />
<line x1="1185.94" y1="715.8" x2="1185.94" y2="744.2" stroke="#00dc00" stroke-width="1.5" />
<line x1="1233.03" y1="715.8" x2="1233.03" y2="744.2" stroke="#00dcdc" stroke-width="1.5" />
<line x1="1278.43" y1="715.8" x2="1278.43" y2="744.2" stroke="#00dc00" stroke-width="1.5" />
<line x1="1325.53" y1="715.8" x2="1325.53" y2="744.2" stroke="#00dcdc" stroke-width="1.5" />
<line x1="1370.93" y1="715.8" x2="1370.93" y2="744.2" stroke="#00dc00" stroke-width="1.5" />
<line x1="1418.03" y1="715.8" x2="1418.03" y2="744.2" stroke="#00dcdc" stroke-width="1.5" />
<line x1="1463.42" y1="715.8" x2="1463.42" y2="744.2" stroke="#00dc00" stroke-width="1.5" />
<line x1="1510.52" y1="715.8" x2="1510.52" y2="744.2" stroke="#00dcdc" stroke-width="1.5" />
<line x1="1555.92" y1="715.8" x2="1555.92" y2="744.2" stroke="#00dc00" stroke-width="1.5" />
<line x1="1603.02" y1="715.8" x2="1603.02" y2="744.2" stroke="#00dcdc" stroke-width="1.5" />
<line x1="1648.42" y1="715.8" x2="1648.42" y2="744.2" stroke="#00dc00" stroke-width="1.5" />
<line x1="1695.51" y1="715.8" x2="1695.51" y2="744.2" stroke="#00dcdc" stroke-width="1.5" />
<line x1="1740.91" y1="715.8" x2="1740.91" y2="744.2" stroke="#00dc00" stroke-width="1.5" />
<line x1="1788.01" y1="715.8" x2="1788.01" y2="744.2" stroke="#00dcdc" stroke-width="1.5" />
<line x1="1833.41" y1="715.8" x2="1833.41" y2="744.2" stroke="#00dc00" stroke-width="1.5" />
<line x1="1880.51" y1="715.8" x2="1880.51" y2="744.2" stroke="#00dcdc" stroke-width="1.5" />
<line x1="1925.9" y1="715.8" x2="1925.9" y2="744.2" stroke="#00dc00" stroke-width="1.5" />
<line x1="1973" y1="715.8" x2="1973" y2="744.2" stroke="#00dcdc" stroke-width="1.5" />
<line x1="2018.4" y1="715.8" x2="2018.4" y2="744.2" stroke="#00dc00" stroke-width="1.5" />
<line x1="2065.5" y1="715.8" x2="2065.5" y2="744.2" stroke="#00dcdc" stroke-width="1.5" />
<line x1="2110.9" y1="715.8" x2="2110.9" y2="744.2" stroke="#00dc00" stroke-width="1.5" />
<line x1="2157.99" y1="715.8" x2="2157.99" y2="744.2" stroke="#00dcdc" stroke-width="1.5" />
<line x1="2203.39" y1="715.8" x2="2203.39" y2="744.2" stroke="#00dc00" stroke-width="1.5" />
<line x1="2250.49" y1="715.8" x2="2250.49" y2="744.2" stroke="#00dcdc" stroke-width="1.5" />
<line x1="2295.89" y1="715.8" x2="2295.89" y2="744.2" stroke="#00dc00" stroke-width="1.5" />
<line x1="2342.99" y1="715.8" x2="2342.99" y2="744.2" stroke="#00dcdc" stroke-width="1.5" />
<line x1="2388.38" y1="715.8" x2="2388.38" y2="744.2" stroke="#00dc00" stroke-width="1.5" />
<line x1="2435.48" y1="715.8" x2="2435.48" y2="744.2" stroke="#00dcdc" stroke-width="1.5" />
<line x1="2480.88" y1="715.8" x2="2480.88" y2="744.2" stroke="#00dc00" stroke-width="1.5" />
<line x1="2527.98" y1="715.8" x2="2527.98" y2="744.2" stroke="#00dcdc" stroke-width="1.5" />
<line x1="2573.38" y1="715.8" x2="2573.38" y2="744.2" stroke="#00dc00" stroke-width="1.5" />
<line x1="2620.47" y1="715.8" x2="2620.47" y2="744.2" stroke="#00dcdc" stroke-width="1.5" />
<line x1="2665.87" y1="715.8" x2="2665.87" y2="744.2" stroke="#00dc00" stroke-width="1.5" />
<line x1="2712.97" y1="715.8" x2="2712.97" y2="744.2" stroke="#00dcdc" stroke-width="1.5" />
<line x1="2758.37" y1="715.8" x2="2758.37" y2="744.2" stroke="#00dc00" stroke-width="1.5" />
<line x1="2805.47" y1="715.8" x2="2805.47" y2="744.2" stroke="#00dcdc" stroke-width="1.5" />
<line x1="2850.86" y1="715.8" x2="2850.86" y2="744.2" stroke="#00dc00" stroke-width="1.5" />
<line x1="2897.96" y1="715.8" x2="2897.96" y2="744.2" stroke="#00dcdc" stroke-width="1.5" />
<line x1="2943.36" y1="715.8" x2="2943.36" y2="744.2" stroke="#00dc00" stroke-width="1.5" />
<line x1="846.5" y1="753.3" x2="2853" y2="753.3" stroke="#00dc00" stroke-width="1.5" />
<line x1="846.5" y1="790.8" x2="2853" y2="790.8" stroke="#00dc00" stroke-width="1.5" />
<path d="M633.96,828.3 L1090.44,828.3 L1093.14,838.3 L1093.14,846.7 L1090.44,856.7 L633.96,856.7 L631.26,846.7 L631.26,838.3 Z" fill="none" stroke="#ff0000" stroke-width="1.5"/>
<path d="M1188.94,828.3 L1460.42,828.3 L1463.12,838.3 L1463.12,846.7 L1460.42,856.7 L1188.94,856.7 L1186.24,846.7 L1186.24,838.3 Z" fill="none" stroke="#ff0000" stroke-width="1.5"/>
<path d="M1558.92,828.3 L1830.41,828.3 L1833.11,838.3 L1833.11,846.7 L1830.41,856.7 L1558.92,856.7 L1556.22,846.7 L1556.22,838.3 Z" fill="none" stroke="#ff0000" stroke-width="1.5"/>
<path d="M1928.9,828.3 L2200.39,828.3 L2203.09,838.3 L2203.09,846.7 L2200.39,856.7 L1928.9,856.7 L1926.2,846.7 L1926.2,838.3 Z" fill="none" stroke="#ff0000" stroke-width="1.5"/>
<path d="M2298.89,828.3 L2570.38,828.3 L2573.08,838.3 L2573.08,846.7 L2570.38,856.7 L2298.89,856.7 L2296.19,846.7 L2296.19,838.3 Z" fill="none" stroke="#ff0000" stroke-width="1.5"/>
<path d="M1096.44,828.3 L1182.94,828.3 L1185.64,838.3 L1185.64,846.7 L1182.94,856.7 L1096.44,856.7 L1093.74,846.7 L1093.74,838.3 Z" fill="none" stroke="#00dcdc" stroke-width="1.5"/>
<path d="M1466.42,828.3 L1552.92,828.3 L1555.62,838.3 L1555.62,846.7 L1552.92,856.7 L1466.42,856.7 L1463.72,846.7 L1463.72,838.3 Z" fill="none" stroke="#00dcdc" stroke-width="1.5"/>
<path d="M1836.41,828.3 L1922.9,828.3 L1925.6,838.3 L1925.6,846.7 L1922.9,856.7 L1836.41,856.7 L1833.71,846.7 L1833.71,838.3 Z" fill="none" stroke="#00dcdc" stroke-width="1.5"/>
<path d="M2206.39,828.3 L2292.89,828.3 L2295.59,838.3 L2295.59,846.7 L2292.89,856.7 L2206.39,856.7 L2203.69,846.7 L2203.69,838.3 Z" fill="none" stroke="#00dcdc" stroke-width="1.5"/>
<path d="M2576.38,828.3 L2662.87,828.3 L2665.57,838.3 L2665.57,846.7 L2662.87,856.7 L2576.38,856.7 L2573.68,846.7 L2573.68,838.3 Z" fill="none" stroke="#00dcdc" stroke-width="1.5"/>
<text x="855.67" y="848.8" font-family="'Liberation Mono', monospace" font-size="21" letter-spacing="0.9" font-weight="normal" fill="#ffffff" text-anchor="start" stroke="#000000" stroke-width="0.3">*0_0000_xxxx_xxxx</text><rect x="873.47" y="839.1" width="4" height="5" fill="#000000"/><rect x="900.47" y="839.1" width="4" height="5" fill="#000000"/><rect x="913.97" y="839.1" width="4" height="5" fill="#000000"/><rect x="927.47" y="839.1" width="4" height="5" fill="#000000"/><rect x="940.97" y="839.1" width="4" height="5" fill="#000000"/>
<text x="1196.88" y="848.8" font-family="'Liberation Mono', monospace" font-size="21" letter-spacing="0.9" font-weight="normal" fill="#ffffff" text-anchor="start" stroke="#000000" stroke-width="0.3">0000_0000_xxxx_xxxx</text><rect x="1201.18" y="839.1" width="4" height="5" fill="#000000"/><rect x="1214.68" y="839.1" width="4" height="5" fill="#000000"/><rect x="1228.18" y="839.1" width="4" height="5" fill="#000000"/><rect x="1241.68" y="839.1" width="4" height="5" fill="#000000"/><rect x="1268.68" y="839.1" width="4" height="5" fill="#000000"/><rect x="1282.18" y="839.1" width="4" height="5" fill="#000000"/><rect x="1295.68" y="839.1" width="4" height="5" fill="#000000"/><rect x="1309.18" y="839.1" width="4" height="5" fill="#000000"/>
<text x="1566.86" y="848.8" font-family="'Liberation Mono', monospace" font-size="21" letter-spacing="0.9" font-weight="normal" fill="#ffffff" text-anchor="start" stroke="#000000" stroke-width="0.3">0000_0000_xxxx_xxxx</text><rect x="1571.16" y="839.1" width="4" height="5" fill="#000000"/><rect x="1584.66" y="839.1" width="4" height="5" fill="#000000"/><rect x="1598.16" y="839.1" width="4" height="5" fill="#000000"/><rect x="1611.66" y="839.1" width="4" height="5" fill="#000000"/><rect x="1638.66" y="839.1" width="4" height="5" fill="#000000"/><rect x="1652.16" y="839.1" width="4" height="5" fill="#000000"/><rect x="1665.66" y="839.1" width="4" height="5" fill="#000000"/><rect x="1679.16" y="839.1" width="4" height="5" fill="#000000"/>
<text x="1936.85" y="848.8" font-family="'Liberation Mono', monospace" font-size="21" letter-spacing="0.9" font-weight="normal" fill="#ffffff" text-anchor="start" stroke="#000000" stroke-width="0.3">0000_0000_xxxx_xxxx</text><rect x="1941.15" y="839.1" width="4" height="5" fill="#000000"/><rect x="1954.65" y="839.1" width="4" height="5" fill="#000000"/><rect x="1968.15" y="839.1" width="4" height="5" fill="#000000"/><rect x="1981.65" y="839.1" width="4" height="5" fill="#000000"/><rect x="2008.65" y="839.1" width="4" height="5" fill="#000000"/><rect x="2022.15" y="839.1" width="4" height="5" fill="#000000"/><rect x="2035.65" y="839.1" width="4" height="5" fill="#000000"/><rect x="2049.15" y="839.1" width="4" height="5" fill="#000000"/>
<text x="2306.83" y="848.8" font-family="'Liberation Mono', monospace" font-size="21" letter-spacing="0.9" font-weight="normal" fill="#ffffff" text-anchor="start" stroke="#000000" stroke-width="0.3">0000_0000_xxxx_xxxx</text><rect x="2311.13" y="839.1" width="4" height="5" fill="#000000"/><rect x="2324.63" y="839.1" width="4" height="5" fill="#000000"/><rect x="2338.13" y="839.1" width="4" height="5" fill="#000000"/><rect x="2351.63" y="839.1" width="4" height="5" fill="#000000"/><rect x="2378.63" y="839.1" width="4" height="5" fill="#000000"/><rect x="2392.13" y="839.1" width="4" height="5" fill="#000000"/><rect x="2405.63" y="839.1" width="4" height="5" fill="#000000"/><rect x="2419.13" y="839.1" width="4" height="5" fill="#000000"/>
<text x="1106.39" y="848.8" font-family="'Liberation Mono', monospace" font-size="21" letter-spacing="0.9" font-weight="normal" fill="#ffffff" text-anchor="start" stroke="#000000" stroke-width="0.3">*e1d5</text>
<text x="1476.37" y="848.8" font-family="'Liberation Mono', monospace" font-size="21" letter-spacing="0.9" font-weight="normal" fill="#ffffff" text-anchor="start" stroke="#000000" stroke-width="0.3">*e2d6</text>
<text x="1846.36" y="848.8" font-family="'Liberation Mono', monospace" font-size="21" letter-spacing="0.9" font-weight="normal" fill="#ffffff" text-anchor="start" stroke="#000000" stroke-width="0.3">*e3d7</text>
<text x="2216.34" y="848.8" font-family="'Liberation Mono', monospace" font-size="21" letter-spacing="0.9" font-weight="normal" fill="#ffffff" text-anchor="start" stroke="#000000" stroke-width="0.3">*e4d8</text>
<text x="2586.32" y="848.8" font-family="'Liberation Mono', monospace" font-size="21" letter-spacing="0.9" font-weight="normal" fill="#ffffff" text-anchor="start" stroke="#000000" stroke-width="0.3">*e5d9</text>
<path d="M2668.87,828.3 L3125.35,828.3 L3128.05,838.3 L3128.05,846.7 L3125.35,856.7 L2668.87,856.7 L2666.17,846.7 L2666.17,838.3 Z" fill="none" stroke="#ff0000" stroke-width="1.5"/>
<g clip-path="url(#clipR16)"><text x="2633.8" y="848.8" font-family="'Liberation Mono', monospace" font-size="21" letter-spacing="0.9" font-weight="normal" fill="#ffffff" text-anchor="start" stroke="#000000" stroke-width="0.3">0000_0000_xxxx_xxxx</text><rect x="2638.1" y="839.1" width="4" height="5" fill="#000000"/><rect x="2651.6" y="839.1" width="4" height="5" fill="#000000"/><rect x="2665.1" y="839.1" width="4" height="5" fill="#000000"/><rect x="2678.6" y="839.1" width="4" height="5" fill="#000000"/><rect x="2705.6" y="839.1" width="4" height="5" fill="#000000"/><rect x="2719.1" y="839.1" width="4" height="5" fill="#000000"/><rect x="2732.6" y="839.1" width="4" height="5" fill="#000000"/><rect x="2746.1" y="839.1" width="4" height="5" fill="#000000"/></g>
<line x1="846.5" y1="865.8" x2="2853" y2="865.8" stroke="#00dc00" stroke-width="1.5" />
<line x1="846.5" y1="903.3" x2="2853" y2="903.3" stroke="#00dcdc" stroke-width="1.5" />
<line x1="846.5" y1="931.7" x2="2853" y2="931.7" stroke="#00dcdc" stroke-width="1.5" />
<text x="1843.45" y="923.8" font-family="'Liberation Mono', monospace" font-size="21" letter-spacing="0.9" font-weight="normal" fill="#ffffff" text-anchor="start" stroke="#000000" stroke-width="0.3">0</text><rect x="1847.75" y="914.1" width="4" height="5" fill="#000000"/>
<path d="M633.96,940.8 L720.46,940.8 L723.16,950.8 L723.16,959.2 L720.46,969.2 L633.96,969.2 L631.26,959.2 L631.26,950.8 Z" fill="none" stroke="#00dcdc" stroke-width="1.5"/>
<path d="M726.46,940.8 L812.95,940.8 L815.65,950.8 L815.65,959.2 L812.95,969.2 L726.46,969.2 L723.76,959.2 L723.76,950.8 Z" fill="none" stroke="#00dcdc" stroke-width="1.5"/>
<path d="M818.95,940.8 L905.45,940.8 L908.15,950.8 L908.15,959.2 L905.45,969.2 L818.95,969.2 L816.25,959.2 L816.25,950.8 Z" fill="none" stroke="#00dcdc" stroke-width="1.5"/>
<path d="M911.45,940.8 L997.94,940.8 L1000.64,950.8 L1000.64,959.2 L997.94,969.2 L911.45,969.2 L908.75,959.2 L908.75,950.8 Z" fill="none" stroke="#00dcdc" stroke-width="1.5"/>
<path d="M1003.94,940.8 L1090.44,940.8 L1093.14,950.8 L1093.14,959.2 L1090.44,969.2 L1003.94,969.2 L1001.24,959.2 L1001.24,950.8 Z" fill="none" stroke="#00dcdc" stroke-width="1.5"/>
<path d="M1096.44,940.8 L1182.94,940.8 L1185.64,950.8 L1185.64,959.2 L1182.94,969.2 L1096.44,969.2 L1093.74,959.2 L1093.74,950.8 Z" fill="none" stroke="#00dcdc" stroke-width="1.5"/>
<path d="M1188.94,940.8 L1275.43,940.8 L1278.13,950.8 L1278.13,959.2 L1275.43,969.2 L1188.94,969.2 L1186.24,959.2 L1186.24,950.8 Z" fill="none" stroke="#00dcdc" stroke-width="1.5"/>
<path d="M1281.43,940.8 L1367.93,940.8 L1370.63,950.8 L1370.63,959.2 L1367.93,969.2 L1281.43,969.2 L1278.73,959.2 L1278.73,950.8 Z" fill="none" stroke="#00dcdc" stroke-width="1.5"/>
<path d="M1373.93,940.8 L1460.42,940.8 L1463.12,950.8 L1463.12,959.2 L1460.42,969.2 L1373.93,969.2 L1371.23,959.2 L1371.23,950.8 Z" fill="none" stroke="#00dcdc" stroke-width="1.5"/>
<path d="M1466.42,940.8 L1552.92,940.8 L1555.62,950.8 L1555.62,959.2 L1552.92,969.2 L1466.42,969.2 L1463.72,959.2 L1463.72,950.8 Z" fill="none" stroke="#00dcdc" stroke-width="1.5"/>
<path d="M1558.92,940.8 L1645.42,940.8 L1648.12,950.8 L1648.12,959.2 L1645.42,969.2 L1558.92,969.2 L1556.22,959.2 L1556.22,950.8 Z" fill="none" stroke="#00dcdc" stroke-width="1.5"/>
<path d="M1651.42,940.8 L1737.91,940.8 L1740.61,950.8 L1740.61,959.2 L1737.91,969.2 L1651.42,969.2 L1648.72,959.2 L1648.72,950.8 Z" fill="none" stroke="#00dcdc" stroke-width="1.5"/>
<path d="M1743.91,940.8 L1830.41,940.8 L1833.11,950.8 L1833.11,959.2 L1830.41,969.2 L1743.91,969.2 L1741.21,959.2 L1741.21,950.8 Z" fill="none" stroke="#00dcdc" stroke-width="1.5"/>
<path d="M1836.41,940.8 L1922.9,940.8 L1925.6,950.8 L1925.6,959.2 L1922.9,969.2 L1836.41,969.2 L1833.71,959.2 L1833.71,950.8 Z" fill="none" stroke="#00dcdc" stroke-width="1.5"/>
<path d="M1928.9,940.8 L2015.4,940.8 L2018.1,950.8 L2018.1,959.2 L2015.4,969.2 L1928.9,969.2 L1926.2,959.2 L1926.2,950.8 Z" fill="none" stroke="#00dcdc" stroke-width="1.5"/>
<path d="M2021.4,940.8 L2107.9,940.8 L2110.6,950.8 L2110.6,959.2 L2107.9,969.2 L2021.4,969.2 L2018.7,959.2 L2018.7,950.8 Z" fill="none" stroke="#00dcdc" stroke-width="1.5"/>
<path d="M2113.9,940.8 L2200.39,940.8 L2203.09,950.8 L2203.09,959.2 L2200.39,969.2 L2113.9,969.2 L2111.2,959.2 L2111.2,950.8 Z" fill="none" stroke="#00dcdc" stroke-width="1.5"/>
<path d="M2206.39,940.8 L2292.89,940.8 L2295.59,950.8 L2295.59,959.2 L2292.89,969.2 L2206.39,969.2 L2203.69,959.2 L2203.69,950.8 Z" fill="none" stroke="#00dcdc" stroke-width="1.5"/>
<path d="M2298.89,940.8 L2385.38,940.8 L2388.08,950.8 L2388.08,959.2 L2385.38,969.2 L2298.89,969.2 L2296.19,959.2 L2296.19,950.8 Z" fill="none" stroke="#00dcdc" stroke-width="1.5"/>
<path d="M2391.38,940.8 L2477.88,940.8 L2480.58,950.8 L2480.58,959.2 L2477.88,969.2 L2391.38,969.2 L2388.68,959.2 L2388.68,950.8 Z" fill="none" stroke="#00dcdc" stroke-width="1.5"/>
<path d="M2483.88,940.8 L2570.38,940.8 L2573.08,950.8 L2573.08,959.2 L2570.38,969.2 L2483.88,969.2 L2481.18,959.2 L2481.18,950.8 Z" fill="none" stroke="#00dcdc" stroke-width="1.5"/>
<path d="M2576.38,940.8 L2662.87,940.8 L2665.57,950.8 L2665.57,959.2 L2662.87,969.2 L2576.38,969.2 L2573.68,959.2 L2573.68,950.8 Z" fill="none" stroke="#00dcdc" stroke-width="1.5"/>
<path d="M2668.87,940.8 L2755.37,940.8 L2758.07,950.8 L2758.07,959.2 L2755.37,969.2 L2668.87,969.2 L2666.17,959.2 L2666.17,950.8 Z" fill="none" stroke="#00dcdc" stroke-width="1.5"/>
<path d="M2761.37,940.8 L2847.86,940.8 L2850.56,950.8 L2850.56,959.2 L2847.86,969.2 L2761.37,969.2 L2758.67,959.2 L2758.67,950.8 Z" fill="none" stroke="#00dcdc" stroke-width="1.5"/>
<path d="M2853.86,940.8 L2940.36,940.8 L2943.06,950.8 L2943.06,959.2 L2940.36,969.2 L2853.86,969.2 L2851.16,959.2 L2851.16,950.8 Z" fill="none" stroke="#00dcdc" stroke-width="1.5"/>
<text x="857.67" y="961.3" font-family="'Liberation Mono', monospace" font-size="21" letter-spacing="0.9" font-weight="normal" fill="#ffffff" text-anchor="start" stroke="#000000" stroke-width="0.3">*78</text>
<text x="921.4" y="961.3" font-family="'Liberation Mono', monospace" font-size="21" letter-spacing="0.9" font-weight="normal" fill="#ffffff" text-anchor="start" stroke="#000000" stroke-width="0.3">*0000</text><rect x="939.2" y="951.6" width="4" height="5" fill="#000000"/><rect x="952.7" y="951.6" width="4" height="5" fill="#000000"/><rect x="966.2" y="951.6" width="4" height="5" fill="#000000"/><rect x="979.7" y="951.6" width="4" height="5" fill="#000000"/>
<text x="1013.89" y="961.3" font-family="'Liberation Mono', monospace" font-size="21" letter-spacing="0.9" font-weight="normal" fill="#ffffff" text-anchor="start" stroke="#000000" stroke-width="0.3">*3278</text>
<text x="1106.39" y="961.3" font-family="'Liberation Mono', monospace" font-size="21" letter-spacing="0.9" font-weight="normal" fill="#ffffff" text-anchor="start" stroke="#000000" stroke-width="0.3">*0000</text><rect x="1124.19" y="951.6" width="4" height="5" fill="#000000"/><rect x="1137.69" y="951.6" width="4" height="5" fill="#000000"/><rect x="1151.19" y="951.6" width="4" height="5" fill="#000000"/><rect x="1164.69" y="951.6" width="4" height="5" fill="#000000"/>
<text x="1198.88" y="961.3" font-family="'Liberation Mono', monospace" font-size="21" letter-spacing="0.9" font-weight="normal" fill="#ffffff" text-anchor="start" stroke="#000000" stroke-width="0.3">*8f9c</text>
<text x="1291.38" y="961.3" font-family="'Liberation Mono', monospace" font-size="21" letter-spacing="0.9" font-weight="normal" fill="#ffffff" text-anchor="start" stroke="#000000" stroke-width="0.3">*0000</text><rect x="1309.18" y="951.6" width="4" height="5" fill="#000000"/><rect x="1322.68" y="951.6" width="4" height="5" fill="#000000"/><rect x="1336.18" y="951.6" width="4" height="5" fill="#000000"/><rect x="1349.68" y="951.6" width="4" height="5" fill="#000000"/>
<text x="1383.88" y="961.3" font-family="'Liberation Mono', monospace" font-size="21" letter-spacing="0.9" font-weight="normal" fill="#ffffff" text-anchor="start" stroke="#000000" stroke-width="0.3">*8f9c</text>
<text x="1476.37" y="961.3" font-family="'Liberation Mono', monospace" font-size="21" letter-spacing="0.9" font-weight="normal" fill="#ffffff" text-anchor="start" stroke="#000000" stroke-width="0.3">*0000</text><rect x="1494.17" y="951.6" width="4" height="5" fill="#000000"/><rect x="1507.67" y="951.6" width="4" height="5" fill="#000000"/><rect x="1521.17" y="951.6" width="4" height="5" fill="#000000"/><rect x="1534.67" y="951.6" width="4" height="5" fill="#000000"/>
<text x="1568.87" y="961.3" font-family="'Liberation Mono', monospace" font-size="21" letter-spacing="0.9" font-weight="normal" fill="#ffffff" text-anchor="start" stroke="#000000" stroke-width="0.3">*c43c</text>
<text x="1661.36" y="961.3" font-family="'Liberation Mono', monospace" font-size="21" letter-spacing="0.9" font-weight="normal" fill="#ffffff" text-anchor="start" stroke="#000000" stroke-width="0.3">*0000</text><rect x="1679.16" y="951.6" width="4" height="5" fill="#000000"/><rect x="1692.66" y="951.6" width="4" height="5" fill="#000000"/><rect x="1706.16" y="951.6" width="4" height="5" fill="#000000"/><rect x="1719.66" y="951.6" width="4" height="5" fill="#000000"/>
<text x="1753.86" y="961.3" font-family="'Liberation Mono', monospace" font-size="21" letter-spacing="0.9" font-weight="normal" fill="#ffffff" text-anchor="start" stroke="#000000" stroke-width="0.3">*c43c</text>
<text x="1846.36" y="961.3" font-family="'Liberation Mono', monospace" font-size="21" letter-spacing="0.9" font-weight="normal" fill="#ffffff" text-anchor="start" stroke="#000000" stroke-width="0.3">*0000</text><rect x="1864.16" y="951.6" width="4" height="5" fill="#000000"/><rect x="1877.66" y="951.6" width="4" height="5" fill="#000000"/><rect x="1891.16" y="951.6" width="4" height="5" fill="#000000"/><rect x="1904.66" y="951.6" width="4" height="5" fill="#000000"/>
<text x="1938.85" y="961.3" font-family="'Liberation Mono', monospace" font-size="21" letter-spacing="0.9" font-weight="normal" fill="#ffffff" text-anchor="start" stroke="#000000" stroke-width="0.3">*1b18</text>
<text x="2031.35" y="961.3" font-family="'Liberation Mono', monospace" font-size="21" letter-spacing="0.9" font-weight="normal" fill="#ffffff" text-anchor="start" stroke="#000000" stroke-width="0.3">*0000</text><rect x="2049.15" y="951.6" width="4" height="5" fill="#000000"/><rect x="2062.65" y="951.6" width="4" height="5" fill="#000000"/><rect x="2076.15" y="951.6" width="4" height="5" fill="#000000"/><rect x="2089.65" y="951.6" width="4" height="5" fill="#000000"/>
<text x="2123.84" y="961.3" font-family="'Liberation Mono', monospace" font-size="21" letter-spacing="0.9" font-weight="normal" fill="#ffffff" text-anchor="start" stroke="#000000" stroke-width="0.3">*1b18</text>
<text x="2216.34" y="961.3" font-family="'Liberation Mono', monospace" font-size="21" letter-spacing="0.9" font-weight="normal" fill="#ffffff" text-anchor="start" stroke="#000000" stroke-width="0.3">*0000</text><rect x="2234.14" y="951.6" width="4" height="5" fill="#000000"/><rect x="2247.64" y="951.6" width="4" height="5" fill="#000000"/><rect x="2261.14" y="951.6" width="4" height="5" fill="#000000"/><rect x="2274.64" y="951.6" width="4" height="5" fill="#000000"/>
<text x="2308.84" y="961.3" font-family="'Liberation Mono', monospace" font-size="21" letter-spacing="0.9" font-weight="normal" fill="#ffffff" text-anchor="start" stroke="#000000" stroke-width="0.3">*6f0c</text><rect x="2353.64" y="951.6" width="4" height="5" fill="#000000"/>
<text x="2401.33" y="961.3" font-family="'Liberation Mono', monospace" font-size="21" letter-spacing="0.9" font-weight="normal" fill="#ffffff" text-anchor="start" stroke="#000000" stroke-width="0.3">*0000</text><rect x="2419.13" y="951.6" width="4" height="5" fill="#000000"/><rect x="2432.63" y="951.6" width="4" height="5" fill="#000000"/><rect x="2446.13" y="951.6" width="4" height="5" fill="#000000"/><rect x="2459.63" y="951.6" width="4" height="5" fill="#000000"/>
<text x="2493.83" y="961.3" font-family="'Liberation Mono', monospace" font-size="21" letter-spacing="0.9" font-weight="normal" fill="#ffffff" text-anchor="start" stroke="#000000" stroke-width="0.3">*6f0c</text><rect x="2538.63" y="951.6" width="4" height="5" fill="#000000"/>
<text x="2586.32" y="961.3" font-family="'Liberation Mono', monospace" font-size="21" letter-spacing="0.9" font-weight="normal" fill="#ffffff" text-anchor="start" stroke="#000000" stroke-width="0.3">*0000</text><rect x="2604.12" y="951.6" width="4" height="5" fill="#000000"/><rect x="2617.62" y="951.6" width="4" height="5" fill="#000000"/><rect x="2631.12" y="951.6" width="4" height="5" fill="#000000"/><rect x="2644.62" y="951.6" width="4" height="5" fill="#000000"/>
<text x="2678.82" y="961.3" font-family="'Liberation Mono', monospace" font-size="21" letter-spacing="0.9" font-weight="normal" fill="#ffffff" text-anchor="start" stroke="#000000" stroke-width="0.3">*5c84</text>
<text x="2771.32" y="961.3" font-family="'Liberation Mono', monospace" font-size="21" letter-spacing="0.9" font-weight="normal" fill="#ffffff" text-anchor="start" stroke="#000000" stroke-width="0.3">*0000</text><rect x="2789.12" y="951.6" width="4" height="5" fill="#000000"/><rect x="2802.62" y="951.6" width="4" height="5" fill="#000000"/><rect x="2816.12" y="951.6" width="4" height="5" fill="#000000"/><rect x="2829.62" y="951.6" width="4" height="5" fill="#000000"/>
<path d="M633.96,978.3 L720.46,978.3 L723.16,988.3 L723.16,996.7 L720.46,1006.7 L633.96,1006.7 L631.26,996.7 L631.26,988.3 Z" fill="none" stroke="#00dcdc" stroke-width="1.5"/>
<path d="M726.46,978.3 L812.95,978.3 L815.65,988.3 L815.65,996.7 L812.95,1006.7 L726.46,1006.7 L723.76,996.7 L723.76,988.3 Z" fill="none" stroke="#00dcdc" stroke-width="1.5"/>
<path d="M818.95,978.3 L905.45,978.3 L908.15,988.3 L908.15,996.7 L905.45,1006.7 L818.95,1006.7 L816.25,996.7 L816.25,988.3 Z" fill="none" stroke="#00dcdc" stroke-width="1.5"/>
<path d="M911.45,978.3 L997.94,978.3 L1000.64,988.3 L1000.64,996.7 L997.94,1006.7 L911.45,1006.7 L908.75,996.7 L908.75,988.3 Z" fill="none" stroke="#00dcdc" stroke-width="1.5"/>
<path d="M1003.94,978.3 L1090.44,978.3 L1093.14,988.3 L1093.14,996.7 L1090.44,1006.7 L1003.94,1006.7 L1001.24,996.7 L1001.24,988.3 Z" fill="none" stroke="#00dcdc" stroke-width="1.5"/>
<path d="M1096.44,978.3 L1182.94,978.3 L1185.64,988.3 L1185.64,996.7 L1182.94,1006.7 L1096.44,1006.7 L1093.74,996.7 L1093.74,988.3 Z" fill="none" stroke="#00dcdc" stroke-width="1.5"/>
<path d="M1188.94,978.3 L1275.43,978.3 L1278.13,988.3 L1278.13,996.7 L1275.43,1006.7 L1188.94,1006.7 L1186.24,996.7 L1186.24,988.3 Z" fill="none" stroke="#00dcdc" stroke-width="1.5"/>
<path d="M1281.43,978.3 L1367.93,978.3 L1370.63,988.3 L1370.63,996.7 L1367.93,1006.7 L1281.43,1006.7 L1278.73,996.7 L1278.73,988.3 Z" fill="none" stroke="#00dcdc" stroke-width="1.5"/>
<path d="M1373.93,978.3 L1460.42,978.3 L1463.12,988.3 L1463.12,996.7 L1460.42,1006.7 L1373.93,1006.7 L1371.23,996.7 L1371.23,988.3 Z" fill="none" stroke="#00dcdc" stroke-width="1.5"/>
<path d="M1466.42,978.3 L1552.92,978.3 L1555.62,988.3 L1555.62,996.7 L1552.92,1006.7 L1466.42,1006.7 L1463.72,996.7 L1463.72,988.3 Z" fill="none" stroke="#00dcdc" stroke-width="1.5"/>
<path d="M1558.92,978.3 L1645.42,978.3 L1648.12,988.3 L1648.12,996.7 L1645.42,1006.7 L1558.92,1006.7 L1556.22,996.7 L1556.22,988.3 Z" fill="none" stroke="#00dcdc" stroke-width="1.5"/>
<path d="M1651.42,978.3 L1737.91,978.3 L1740.61,988.3 L1740.61,996.7 L1737.91,1006.7 L1651.42,1006.7 L1648.72,996.7 L1648.72,988.3 Z" fill="none" stroke="#00dcdc" stroke-width="1.5"/>
<path d="M1743.91,978.3 L1830.41,978.3 L1833.11,988.3 L1833.11,996.7 L1830.41,1006.7 L1743.91,1006.7 L1741.21,996.7 L1741.21,988.3 Z" fill="none" stroke="#00dcdc" stroke-width="1.5"/>
<path d="M1836.41,978.3 L1922.9,978.3 L1925.6,988.3 L1925.6,996.7 L1922.9,1006.7 L1836.41,1006.7 L1833.71,996.7 L1833.71,988.3 Z" fill="none" stroke="#00dcdc" stroke-width="1.5"/>
<path d="M1928.9,978.3 L2015.4,978.3 L2018.1,988.3 L2018.1,996.7 L2015.4,1006.7 L1928.9,1006.7 L1926.2,996.7 L1926.2,988.3 Z" fill="none" stroke="#00dcdc" stroke-width="1.5"/>
<path d="M2021.4,978.3 L2107.9,978.3 L2110.6,988.3 L2110.6,996.7 L2107.9,1006.7 L2021.4,1006.7 L2018.7,996.7 L2018.7,988.3 Z" fill="none" stroke="#00dcdc" stroke-width="1.5"/>
<path d="M2113.9,978.3 L2200.39,978.3 L2203.09,988.3 L2203.09,996.7 L2200.39,1006.7 L2113.9,1006.7 L2111.2,996.7 L2111.2,988.3 Z" fill="none" stroke="#00dcdc" stroke-width="1.5"/>
<path d="M2206.39,978.3 L2292.89,978.3 L2295.59,988.3 L2295.59,996.7 L2292.89,1006.7 L2206.39,1006.7 L2203.69,996.7 L2203.69,988.3 Z" fill="none" stroke="#00dcdc" stroke-width="1.5"/>
<path d="M2298.89,978.3 L2385.38,978.3 L2388.08,988.3 L2388.08,996.7 L2385.38,1006.7 L2298.89,1006.7 L2296.19,996.7 L2296.19,988.3 Z" fill="none" stroke="#00dcdc" stroke-width="1.5"/>
<path d="M2391.38,978.3 L2477.88,978.3 L2480.58,988.3 L2480.58,996.7 L2477.88,1006.7 L2391.38,1006.7 L2388.68,996.7 L2388.68,988.3 Z" fill="none" stroke="#00dcdc" stroke-width="1.5"/>
<path d="M2483.88,978.3 L2570.38,978.3 L2573.08,988.3 L2573.08,996.7 L2570.38,1006.7 L2483.88,1006.7 L2481.18,996.7 L2481.18,988.3 Z" fill="none" stroke="#00dcdc" stroke-width="1.5"/>
<path d="M2576.38,978.3 L2662.87,978.3 L2665.57,988.3 L2665.57,996.7 L2662.87,1006.7 L2576.38,1006.7 L2573.68,996.7 L2573.68,988.3 Z" fill="none" stroke="#00dcdc" stroke-width="1.5"/>
<path d="M2668.87,978.3 L2755.37,978.3 L2758.07,988.3 L2758.07,996.7 L2755.37,1006.7 L2668.87,1006.7 L2666.17,996.7 L2666.17,988.3 Z" fill="none" stroke="#00dcdc" stroke-width="1.5"/>
<path d="M2761.37,978.3 L2847.86,978.3 L2850.56,988.3 L2850.56,996.7 L2847.86,1006.7 L2761.37,1006.7 L2758.67,996.7 L2758.67,988.3 Z" fill="none" stroke="#00dcdc" stroke-width="1.5"/>
<path d="M2853.86,978.3 L2940.36,978.3 L2943.06,988.3 L2943.06,996.7 L2940.36,1006.7 L2853.86,1006.7 L2851.16,996.7 L2851.16,988.3 Z" fill="none" stroke="#00dcdc" stroke-width="1.5"/>
<text x="871.17" y="998.8" font-family="'Liberation Mono', monospace" font-size="21" letter-spacing="0.9" font-weight="normal" fill="#ffffff" text-anchor="start" stroke="#000000" stroke-width="0.3">2</text>
<text x="948.4" y="998.8" font-family="'Liberation Mono', monospace" font-size="21" letter-spacing="0.9" font-weight="normal" fill="#ffffff" text-anchor="start" stroke="#000000" stroke-width="0.3">0</text><rect x="952.7" y="989.1" width="4" height="5" fill="#000000"/>
<text x="1040.89" y="998.8" font-family="'Liberation Mono', monospace" font-size="21" letter-spacing="0.9" font-weight="normal" fill="#ffffff" text-anchor="start" stroke="#000000" stroke-width="0.3">2</text>
<text x="1133.39" y="998.8" font-family="'Liberation Mono', monospace" font-size="21" letter-spacing="0.9" font-weight="normal" fill="#ffffff" text-anchor="start" stroke="#000000" stroke-width="0.3">0</text><rect x="1137.69" y="989.1" width="4" height="5" fill="#000000"/>
<text x="1225.88" y="998.8" font-family="'Liberation Mono', monospace" font-size="21" letter-spacing="0.9" font-weight="normal" fill="#ffffff" text-anchor="start" stroke="#000000" stroke-width="0.3">2</text>
<text x="1318.38" y="998.8" font-family="'Liberation Mono', monospace" font-size="21" letter-spacing="0.9" font-weight="normal" fill="#ffffff" text-anchor="start" stroke="#000000" stroke-width="0.3">0</text><rect x="1322.68" y="989.1" width="4" height="5" fill="#000000"/>
<text x="1410.88" y="998.8" font-family="'Liberation Mono', monospace" font-size="21" letter-spacing="0.9" font-weight="normal" fill="#ffffff" text-anchor="start" stroke="#000000" stroke-width="0.3">2</text>
<text x="1503.37" y="998.8" font-family="'Liberation Mono', monospace" font-size="21" letter-spacing="0.9" font-weight="normal" fill="#ffffff" text-anchor="start" stroke="#000000" stroke-width="0.3">0</text><rect x="1507.67" y="989.1" width="4" height="5" fill="#000000"/>
<text x="1595.87" y="998.8" font-family="'Liberation Mono', monospace" font-size="21" letter-spacing="0.9" font-weight="normal" fill="#ffffff" text-anchor="start" stroke="#000000" stroke-width="0.3">2</text>
<text x="1688.36" y="998.8" font-family="'Liberation Mono', monospace" font-size="21" letter-spacing="0.9" font-weight="normal" fill="#ffffff" text-anchor="start" stroke="#000000" stroke-width="0.3">0</text><rect x="1692.66" y="989.1" width="4" height="5" fill="#000000"/>
<text x="1780.86" y="998.8" font-family="'Liberation Mono', monospace" font-size="21" letter-spacing="0.9" font-weight="normal" fill="#ffffff" text-anchor="start" stroke="#000000" stroke-width="0.3">2</text>
<text x="1873.36" y="998.8" font-family="'Liberation Mono', monospace" font-size="21" letter-spacing="0.9" font-weight="normal" fill="#ffffff" text-anchor="start" stroke="#000000" stroke-width="0.3">0</text><rect x="1877.66" y="989.1" width="4" height="5" fill="#000000"/>
<text x="1965.85" y="998.8" font-family="'Liberation Mono', monospace" font-size="21" letter-spacing="0.9" font-weight="normal" fill="#ffffff" text-anchor="start" stroke="#000000" stroke-width="0.3">2</text>
<text x="2058.35" y="998.8" font-family="'Liberation Mono', monospace" font-size="21" letter-spacing="0.9" font-weight="normal" fill="#ffffff" text-anchor="start" stroke="#000000" stroke-width="0.3">0</text><rect x="2062.65" y="989.1" width="4" height="5" fill="#000000"/>
<text x="2150.84" y="998.8" font-family="'Liberation Mono', monospace" font-size="21" letter-spacing="0.9" font-weight="normal" fill="#ffffff" text-anchor="start" stroke="#000000" stroke-width="0.3">2</text>
<text x="2243.34" y="998.8" font-family="'Liberation Mono', monospace" font-size="21" letter-spacing="0.9" font-weight="normal" fill="#ffffff" text-anchor="start" stroke="#000000" stroke-width="0.3">0</text><rect x="2247.64" y="989.1" width="4" height="5" fill="#000000"/>
<text x="2335.84" y="998.8" font-family="'Liberation Mono', monospace" font-size="21" letter-spacing="0.9" font-weight="normal" fill="#ffffff" text-anchor="start" stroke="#000000" stroke-width="0.3">2</text>
<text x="2428.33" y="998.8" font-family="'Liberation Mono', monospace" font-size="21" letter-spacing="0.9" font-weight="normal" fill="#ffffff" text-anchor="start" stroke="#000000" stroke-width="0.3">0</text><rect x="2432.63" y="989.1" width="4" height="5" fill="#000000"/>
<text x="2520.83" y="998.8" font-family="'Liberation Mono', monospace" font-size="21" letter-spacing="0.9" font-weight="normal" fill="#ffffff" text-anchor="start" stroke="#000000" stroke-width="0.3">2</text>
<text x="2613.32" y="998.8" font-family="'Liberation Mono', monospace" font-size="21" letter-spacing="0.9" font-weight="normal" fill="#ffffff" text-anchor="start" stroke="#000000" stroke-width="0.3">0</text><rect x="2617.62" y="989.1" width="4" height="5" fill="#000000"/>
<text x="2705.82" y="998.8" font-family="'Liberation Mono', monospace" font-size="21" letter-spacing="0.9" font-weight="normal" fill="#ffffff" text-anchor="start" stroke="#000000" stroke-width="0.3">2</text>
<text x="2798.32" y="998.8" font-family="'Liberation Mono', monospace" font-size="21" letter-spacing="0.9" font-weight="normal" fill="#ffffff" text-anchor="start" stroke="#000000" stroke-width="0.3">0</text><rect x="2802.62" y="989.1" width="4" height="5" fill="#000000"/>
<path d="M633.96,1015.8 L720.46,1015.8 L723.16,1025.8 L723.16,1034.2 L720.46,1044.2 L633.96,1044.2 L631.26,1034.2 L631.26,1025.8 Z" fill="none" stroke="#00dcdc" stroke-width="1.5"/>
<path d="M726.46,1015.8 L812.95,1015.8 L815.65,1025.8 L815.65,1034.2 L812.95,1044.2 L726.46,1044.2 L723.76,1034.2 L723.76,1025.8 Z" fill="none" stroke="#00dcdc" stroke-width="1.5"/>
<path d="M818.95,1015.8 L905.45,1015.8 L908.15,1025.8 L908.15,1034.2 L905.45,1044.2 L818.95,1044.2 L816.25,1034.2 L816.25,1025.8 Z" fill="none" stroke="#00dcdc" stroke-width="1.5"/>
<path d="M911.45,1015.8 L997.94,1015.8 L1000.64,1025.8 L1000.64,1034.2 L997.94,1044.2 L911.45,1044.2 L908.75,1034.2 L908.75,1025.8 Z" fill="none" stroke="#00dcdc" stroke-width="1.5"/>
<path d="M1003.94,1015.8 L1090.44,1015.8 L1093.14,1025.8 L1093.14,1034.2 L1090.44,1044.2 L1003.94,1044.2 L1001.24,1034.2 L1001.24,1025.8 Z" fill="none" stroke="#00dcdc" stroke-width="1.5"/>
<path d="M1096.44,1015.8 L1182.94,1015.8 L1185.64,1025.8 L1185.64,1034.2 L1182.94,1044.2 L1096.44,1044.2 L1093.74,1034.2 L1093.74,1025.8 Z" fill="none" stroke="#00dcdc" stroke-width="1.5"/>
<path d="M1188.94,1015.8 L1275.43,1015.8 L1278.13,1025.8 L1278.13,1034.2 L1275.43,1044.2 L1188.94,1044.2 L1186.24,1034.2 L1186.24,1025.8 Z" fill="none" stroke="#00dcdc" stroke-width="1.5"/>
<path d="M1281.43,1015.8 L1367.93,1015.8 L1370.63,1025.8 L1370.63,1034.2 L1367.93,1044.2 L1281.43,1044.2 L1278.73,1034.2 L1278.73,1025.8 Z" fill="none" stroke="#00dcdc" stroke-width="1.5"/>
<path d="M1373.93,1015.8 L1460.42,1015.8 L1463.12,1025.8 L1463.12,1034.2 L1460.42,1044.2 L1373.93,1044.2 L1371.23,1034.2 L1371.23,1025.8 Z" fill="none" stroke="#00dcdc" stroke-width="1.5"/>
<path d="M1466.42,1015.8 L1552.92,1015.8 L1555.62,1025.8 L1555.62,1034.2 L1552.92,1044.2 L1466.42,1044.2 L1463.72,1034.2 L1463.72,1025.8 Z" fill="none" stroke="#00dcdc" stroke-width="1.5"/>
<path d="M1558.92,1015.8 L1645.42,1015.8 L1648.12,1025.8 L1648.12,1034.2 L1645.42,1044.2 L1558.92,1044.2 L1556.22,1034.2 L1556.22,1025.8 Z" fill="none" stroke="#00dcdc" stroke-width="1.5"/>
<path d="M1651.42,1015.8 L1737.91,1015.8 L1740.61,1025.8 L1740.61,1034.2 L1737.91,1044.2 L1651.42,1044.2 L1648.72,1034.2 L1648.72,1025.8 Z" fill="none" stroke="#00dcdc" stroke-width="1.5"/>
<path d="M1743.91,1015.8 L1830.41,1015.8 L1833.11,1025.8 L1833.11,1034.2 L1830.41,1044.2 L1743.91,1044.2 L1741.21,1034.2 L1741.21,1025.8 Z" fill="none" stroke="#00dcdc" stroke-width="1.5"/>
<path d="M1836.41,1015.8 L1922.9,1015.8 L1925.6,1025.8 L1925.6,1034.2 L1922.9,1044.2 L1836.41,1044.2 L1833.71,1034.2 L1833.71,1025.8 Z" fill="none" stroke="#00dcdc" stroke-width="1.5"/>
<path d="M1928.9,1015.8 L2015.4,1015.8 L2018.1,1025.8 L2018.1,1034.2 L2015.4,1044.2 L1928.9,1044.2 L1926.2,1034.2 L1926.2,1025.8 Z" fill="none" stroke="#00dcdc" stroke-width="1.5"/>
<path d="M2021.4,1015.8 L2107.9,1015.8 L2110.6,1025.8 L2110.6,1034.2 L2107.9,1044.2 L2021.4,1044.2 L2018.7,1034.2 L2018.7,1025.8 Z" fill="none" stroke="#00dcdc" stroke-width="1.5"/>
<path d="M2113.9,1015.8 L2200.39,1015.8 L2203.09,1025.8 L2203.09,1034.2 L2200.39,1044.2 L2113.9,1044.2 L2111.2,1034.2 L2111.2,1025.8 Z" fill="none" stroke="#00dcdc" stroke-width="1.5"/>
<path d="M2206.39,1015.8 L2292.89,1015.8 L2295.59,1025.8 L2295.59,1034.2 L2292.89,1044.2 L2206.39,1044.2 L2203.69,1034.2 L2203.69,1025.8 Z" fill="none" stroke="#00dcdc" stroke-width="1.5"/>
<path d="M2298.89,1015.8 L2385.38,1015.8 L2388.08,1025.8 L2388.08,1034.2 L2385.38,1044.2 L2298.89,1044.2 L2296.19,1034.2 L2296.19,1025.8 Z" fill="none" stroke="#00dcdc" stroke-width="1.5"/>
<path d="M2391.38,1015.8 L2477.88,1015.8 L2480.58,1025.8 L2480.58,1034.2 L2477.88,1044.2 L2391.38,1044.2 L2388.68,1034.2 L2388.68,1025.8 Z" fill="none" stroke="#00dcdc" stroke-width="1.5"/>
<path d="M2483.88,1015.8 L2570.38,1015.8 L2573.08,1025.8 L2573.08,1034.2 L2570.38,1044.2 L2483.88,1044.2 L2481.18,1034.2 L2481.18,1025.8 Z" fill="none" stroke="#00dcdc" stroke-width="1.5"/>
<path d="M2576.38,1015.8 L2662.87,1015.8 L2665.57,1025.8 L2665.57,1034.2 L2662.87,1044.2 L2576.38,1044.2 L2573.68,1034.2 L2573.68,1025.8 Z" fill="none" stroke="#00dcdc" stroke-width="1.5"/>
<path d="M2668.87,1015.8 L2755.37,1015.8 L2758.07,1025.8 L2758.07,1034.2 L2755.37,1044.2 L2668.87,1044.2 L2666.17,1034.2 L2666.17,1025.8 Z" fill="none" stroke="#00dcdc" stroke-width="1.5"/>
<path d="M2761.37,1015.8 L2847.86,1015.8 L2850.56,1025.8 L2850.56,1034.2 L2847.86,1044.2 L2761.37,1044.2 L2758.67,1034.2 L2758.67,1025.8 Z" fill="none" stroke="#00dcdc" stroke-width="1.5"/>
<path d="M2853.86,1015.8 L2940.36,1015.8 L2943.06,1025.8 L2943.06,1034.2 L2940.36,1044.2 L2853.86,1044.2 L2851.16,1034.2 L2851.16,1025.8 Z" fill="none" stroke="#00dcdc" stroke-width="1.5"/>
<text x="871.17" y="1036.3" font-family="'Liberation Mono', monospace" font-size="21" letter-spacing="0.9" font-weight="normal" fill="#ffffff" text-anchor="start" stroke="#000080" stroke-width="0.3">2</text>
<text x="948.4" y="1036.3" font-family="'Liberation Mono', monospace" font-size="21" letter-spacing="0.9" font-weight="normal" fill="#ffffff" text-anchor="start" stroke="#000080" stroke-width="0.3">0</text><rect x="952.7" y="1026.6" width="4" height="5" fill="#000080"/>
<text x="1040.89" y="1036.3" font-family="'Liberation Mono', monospace" font-size="21" letter-spacing="0.9" font-weight="normal" fill="#ffffff" text-anchor="start" stroke="#000080" stroke-width="0.3">2</text>
<text x="1133.39" y="1036.3" font-family="'Liberation Mono', monospace" font-size="21" letter-spacing="0.9" font-weight="normal" fill="#ffffff" text-anchor="start" stroke="#000080" stroke-width="0.3">0</text><rect x="1137.69" y="1026.6" width="4" height="5" fill="#000080"/>
<text x="1225.88" y="1036.3" font-family="'Liberation Mono', monospace" font-size="21" letter-spacing="0.9" font-weight="normal" fill="#ffffff" text-anchor="start" stroke="#000080" stroke-width="0.3">2</text>
<text x="1318.38" y="1036.3" font-family="'Liberation Mono', monospace" font-size="21" letter-spacing="0.9" font-weight="normal" fill="#ffffff" text-anchor="start" stroke="#000080" stroke-width="0.3">0</text><rect x="1322.68" y="1026.6" width="4" height="5" fill="#000080"/>
<text x="1410.88" y="1036.3" font-family="'Liberation Mono', monospace" font-size="21" letter-spacing="0.9" font-weight="normal" fill="#ffffff" text-anchor="start" stroke="#000080" stroke-width="0.3">2</text>
<text x="1503.37" y="1036.3" font-family="'Liberation Mono', monospace" font-size="21" letter-spacing="0.9" font-weight="normal" fill="#ffffff" text-anchor="start" stroke="#000080" stroke-width="0.3">0</text><rect x="1507.67" y="1026.6" width="4" height="5" fill="#000080"/>
<text x="1595.87" y="1036.3" font-family="'Liberation Mono', monospace" font-size="21" letter-spacing="0.9" font-weight="normal" fill="#ffffff" text-anchor="start" stroke="#000080" stroke-width="0.3">2</text>
<text x="1688.36" y="1036.3" font-family="'Liberation Mono', monospace" font-size="21" letter-spacing="0.9" font-weight="normal" fill="#ffffff" text-anchor="start" stroke="#000080" stroke-width="0.3">0</text><rect x="1692.66" y="1026.6" width="4" height="5" fill="#000080"/>
<text x="1780.86" y="1036.3" font-family="'Liberation Mono', monospace" font-size="21" letter-spacing="0.9" font-weight="normal" fill="#ffffff" text-anchor="start" stroke="#000080" stroke-width="0.3">2</text>
<text x="1873.36" y="1036.3" font-family="'Liberation Mono', monospace" font-size="21" letter-spacing="0.9" font-weight="normal" fill="#ffffff" text-anchor="start" stroke="#000080" stroke-width="0.3">0</text><rect x="1877.66" y="1026.6" width="4" height="5" fill="#000080"/>
<text x="1965.85" y="1036.3" font-family="'Liberation Mono', monospace" font-size="21" letter-spacing="0.9" font-weight="normal" fill="#ffffff" text-anchor="start" stroke="#000080" stroke-width="0.3">2</text>
<text x="2058.35" y="1036.3" font-family="'Liberation Mono', monospace" font-size="21" letter-spacing="0.9" font-weight="normal" fill="#ffffff" text-anchor="start" stroke="#000080" stroke-width="0.3">0</text><rect x="2062.65" y="1026.6" width="4" height="5" fill="#000080"/>
<text x="2150.84" y="1036.3" font-family="'Liberation Mono', monospace" font-size="21" letter-spacing="0.9" font-weight="normal" fill="#ffffff" text-anchor="start" stroke="#000080" stroke-width="0.3">2</text>
<text x="2243.34" y="1036.3" font-family="'Liberation Mono', monospace" font-size="21" letter-spacing="0.9" font-weight="normal" fill="#ffffff" text-anchor="start" stroke="#000080" stroke-width="0.3">0</text><rect x="2247.64" y="1026.6" width="4" height="5" fill="#000080"/>
<text x="2335.84" y="1036.3" font-family="'Liberation Mono', monospace" font-size="21" letter-spacing="0.9" font-weight="normal" fill="#ffffff" text-anchor="start" stroke="#000080" stroke-width="0.3">2</text>
<text x="2428.33" y="1036.3" font-family="'Liberation Mono', monospace" font-size="21" letter-spacing="0.9" font-weight="normal" fill="#ffffff" text-anchor="start" stroke="#000080" stroke-width="0.3">0</text><rect x="2432.63" y="1026.6" width="4" height="5" fill="#000080"/>
<text x="2520.83" y="1036.3" font-family="'Liberation Mono', monospace" font-size="21" letter-spacing="0.9" font-weight="normal" fill="#ffffff" text-anchor="start" stroke="#000080" stroke-width="0.3">2</text>
<text x="2613.32" y="1036.3" font-family="'Liberation Mono', monospace" font-size="21" letter-spacing="0.9" font-weight="normal" fill="#ffffff" text-anchor="start" stroke="#000080" stroke-width="0.3">0</text><rect x="2617.62" y="1026.6" width="4" height="5" fill="#000080"/>
<text x="2705.82" y="1036.3" font-family="'Liberation Mono', monospace" font-size="21" letter-spacing="0.9" font-weight="normal" fill="#ffffff" text-anchor="start" stroke="#000080" stroke-width="0.3">2</text>
<text x="2798.32" y="1036.3" font-family="'Liberation Mono', monospace" font-size="21" letter-spacing="0.9" font-weight="normal" fill="#ffffff" text-anchor="start" stroke="#000080" stroke-width="0.3">0</text><rect x="2802.62" y="1026.6" width="4" height="5" fill="#000080"/>
<path d="M541.46,1053.3 L720.46,1053.3 L723.16,1063.3 L723.16,1071.7 L720.46,1081.7 L541.46,1081.7 L538.76,1071.7 L538.76,1063.3 Z" fill="none" stroke="#00dcdc" stroke-width="1.5"/>
<path d="M726.46,1053.3 L905.45,1053.3 L908.15,1063.3 L908.15,1071.7 L905.45,1081.7 L726.46,1081.7 L723.76,1071.7 L723.76,1063.3 Z" fill="none" stroke="#00dcdc" stroke-width="1.5"/>
<path d="M911.45,1053.3 L1090.44,1053.3 L1093.14,1063.3 L1093.14,1071.7 L1090.44,1081.7 L911.45,1081.7 L908.75,1071.7 L908.75,1063.3 Z" fill="none" stroke="#00dcdc" stroke-width="1.5"/>
<path d="M1096.44,1053.3 L1275.43,1053.3 L1278.13,1063.3 L1278.13,1071.7 L1275.43,1081.7 L1096.44,1081.7 L1093.74,1071.7 L1093.74,1063.3 Z" fill="none" stroke="#00dcdc" stroke-width="1.5"/>
<path d="M1281.43,1053.3 L1460.42,1053.3 L1463.12,1063.3 L1463.12,1071.7 L1460.42,1081.7 L1281.43,1081.7 L1278.73,1071.7 L1278.73,1063.3 Z" fill="none" stroke="#00dcdc" stroke-width="1.5"/>
<path d="M1466.42,1053.3 L1645.42,1053.3 L1648.12,1063.3 L1648.12,1071.7 L1645.42,1081.7 L1466.42,1081.7 L1463.72,1071.7 L1463.72,1063.3 Z" fill="none" stroke="#00dcdc" stroke-width="1.5"/>
<path d="M1651.42,1053.3 L1830.41,1053.3 L1833.11,1063.3 L1833.11,1071.7 L1830.41,1081.7 L1651.42,1081.7 L1648.72,1071.7 L1648.72,1063.3 Z" fill="none" stroke="#00dcdc" stroke-width="1.5"/>
<path d="M1836.41,1053.3 L2015.4,1053.3 L2018.1,1063.3 L2018.1,1071.7 L2015.4,1081.7 L1836.41,1081.7 L1833.71,1071.7 L1833.71,1063.3 Z" fill="none" stroke="#00dcdc" stroke-width="1.5"/>
<path d="M2021.4,1053.3 L2200.39,1053.3 L2203.09,1063.3 L2203.09,1071.7 L2200.39,1081.7 L2021.4,1081.7 L2018.7,1071.7 L2018.7,1063.3 Z" fill="none" stroke="#00dcdc" stroke-width="1.5"/>
<path d="M2206.39,1053.3 L2385.38,1053.3 L2388.08,1063.3 L2388.08,1071.7 L2385.38,1081.7 L2206.39,1081.7 L2203.69,1071.7 L2203.69,1063.3 Z" fill="none" stroke="#00dcdc" stroke-width="1.5"/>
<path d="M2391.38,1053.3 L2570.38,1053.3 L2573.08,1063.3 L2573.08,1071.7 L2570.38,1081.7 L2391.38,1081.7 L2388.68,1071.7 L2388.68,1063.3 Z" fill="none" stroke="#00dcdc" stroke-width="1.5"/>
<path d="M2576.38,1053.3 L2755.37,1053.3 L2758.07,1063.3 L2758.07,1071.7 L2755.37,1081.7 L2576.38,1081.7 L2573.68,1071.7 L2573.68,1063.3 Z" fill="none" stroke="#00dcdc" stroke-width="1.5"/>
<text x="857.67" y="1073.8" font-family="'Liberation Mono', monospace" font-size="21" letter-spacing="0.9" font-weight="normal" fill="#ffffff" text-anchor="start" stroke="#000000" stroke-width="0.3">*00</text><rect x="875.47" y="1064.1" width="4" height="5" fill="#000000"/><rect x="888.97" y="1064.1" width="4" height="5" fill="#000000"/>
<text x="920.39" y="1073.8" font-family="'Liberation Mono', monospace" font-size="21" letter-spacing="0.9" font-weight="normal" fill="#ffffff" text-anchor="start" stroke="#000000" stroke-width="0.3">*0_000c_e1d5</text><rect x="938.19" y="1064.1" width="4" height="5" fill="#000000"/><rect x="965.19" y="1064.1" width="4" height="5" fill="#000000"/><rect x="978.69" y="1064.1" width="4" height="5" fill="#000000"/><rect x="992.19" y="1064.1" width="4" height="5" fill="#000000"/>
<text x="1105.39" y="1073.8" font-family="'Liberation Mono', monospace" font-size="21" letter-spacing="0.9" font-weight="normal" fill="#ffffff" text-anchor="start" stroke="#000000" stroke-width="0.3">*0_0000_0000</text><rect x="1123.19" y="1064.1" width="4" height="5" fill="#000000"/><rect x="1150.19" y="1064.1" width="4" height="5" fill="#000000"/><rect x="1163.69" y="1064.1" width="4" height="5" fill="#000000"/><rect x="1177.19" y="1064.1" width="4" height="5" fill="#000000"/><rect x="1190.69" y="1064.1" width="4" height="5" fill="#000000"/><rect x="1217.69" y="1064.1" width="4" height="5" fill="#000000"/><rect x="1231.19" y="1064.1" width="4" height="5" fill="#000000"/><rect x="1244.69" y="1064.1" width="4" height="5" fill="#000000"/><rect x="1258.19" y="1064.1" width="4" height="5" fill="#000000"/>
<text x="1290.38" y="1073.8" font-family="'Liberation Mono', monospace" font-size="21" letter-spacing="0.9" font-weight="normal" fill="#ffffff" text-anchor="start" stroke="#000000" stroke-width="0.3">*0_000c_e2d6</text><rect x="1308.18" y="1064.1" width="4" height="5" fill="#000000"/><rect x="1335.18" y="1064.1" width="4" height="5" fill="#000000"/><rect x="1348.68" y="1064.1" width="4" height="5" fill="#000000"/><rect x="1362.18" y="1064.1" width="4" height="5" fill="#000000"/>
<text x="1475.37" y="1073.8" font-family="'Liberation Mono', monospace" font-size="21" letter-spacing="0.9" font-weight="normal" fill="#ffffff" text-anchor="start" stroke="#000000" stroke-width="0.3">*0_0000_0000</text><rect x="1493.17" y="1064.1" width="4" height="5" fill="#000000"/><rect x="1520.17" y="1064.1" width="4" height="5" fill="#000000"/><rect x="1533.67" y="1064.1" width="4" height="5" fill="#000000"/><rect x="1547.17" y="1064.1" width="4" height="5" fill="#000000"/><rect x="1560.67" y="1064.1" width="4" height="5" fill="#000000"/><rect x="1587.67" y="1064.1" width="4" height="5" fill="#000000"/><rect x="1601.17" y="1064.1" width="4" height="5" fill="#000000"/><rect x="1614.67" y="1064.1" width="4" height="5" fill="#000000"/><rect x="1628.17" y="1064.1" width="4" height="5" fill="#000000"/>
<text x="1660.36" y="1073.8" font-family="'Liberation Mono', monospace" font-size="21" letter-spacing="0.9" font-weight="normal" fill="#ffffff" text-anchor="start" stroke="#000000" stroke-width="0.3">*0_000c_e3d7</text><rect x="1678.16" y="1064.1" width="4" height="5" fill="#000000"/><rect x="1705.16" y="1064.1" width="4" height="5" fill="#000000"/><rect x="1718.66" y="1064.1" width="4" height="5" fill="#000000"/><rect x="1732.16" y="1064.1" width="4" height="5" fill="#000000"/>
<text x="1845.35" y="1073.8" font-family="'Liberation Mono', monospace" font-size="21" letter-spacing="0.9" font-weight="normal" fill="#ffffff" text-anchor="start" stroke="#000000" stroke-width="0.3">*0_0000_0000</text><rect x="1863.15" y="1064.1" width="4" height="5" fill="#000000"/><rect x="1890.15" y="1064.1" width="4" height="5" fill="#000000"/><rect x="1903.65" y="1064.1" width="4" height="5" fill="#000000"/><rect x="1917.15" y="1064.1" width="4" height="5" fill="#000000"/><rect x="1930.65" y="1064.1" width="4" height="5" fill="#000000"/><rect x="1957.65" y="1064.1" width="4" height="5" fill="#000000"/><rect x="1971.15" y="1064.1" width="4" height="5" fill="#000000"/><rect x="1984.65" y="1064.1" width="4" height="5" fill="#000000"/><rect x="1998.15" y="1064.1" width="4" height="5" fill="#000000"/>
<text x="2030.35" y="1073.8" font-family="'Liberation Mono', monospace" font-size="21" letter-spacing="0.9" font-weight="normal" fill="#ffffff" text-anchor="start" stroke="#000000" stroke-width="0.3">*0_000c_e4d8</text><rect x="2048.15" y="1064.1" width="4" height="5" fill="#000000"/><rect x="2075.15" y="1064.1" width="4" height="5" fill="#000000"/><rect x="2088.65" y="1064.1" width="4" height="5" fill="#000000"/><rect x="2102.15" y="1064.1" width="4" height="5" fill="#000000"/>
<text x="2215.34" y="1073.8" font-family="'Liberation Mono', monospace" font-size="21" letter-spacing="0.9" font-weight="normal" fill="#ffffff" text-anchor="start" stroke="#000000" stroke-width="0.3">*0_0000_0000</text><rect x="2233.14" y="1064.1" width="4" height="5" fill="#000000"/><rect x="2260.14" y="1064.1" width="4" height="5" fill="#000000"/><rect x="2273.64" y="1064.1" width="4" height="5" fill="#000000"/><rect x="2287.14" y="1064.1" width="4" height="5" fill="#000000"/><rect x="2300.64" y="1064.1" width="4" height="5" fill="#000000"/><rect x="2327.64" y="1064.1" width="4" height="5" fill="#000000"/><rect x="2341.14" y="1064.1" width="4" height="5" fill="#000000"/><rect x="2354.64" y="1064.1" width="4" height="5" fill="#000000"/><rect x="2368.14" y="1064.1" width="4" height="5" fill="#000000"/>
<text x="2400.33" y="1073.8" font-family="'Liberation Mono', monospace" font-size="21" letter-spacing="0.9" font-weight="normal" fill="#ffffff" text-anchor="start" stroke="#000000" stroke-width="0.3">*0_000c_e5d9</text><rect x="2418.13" y="1064.1" width="4" height="5" fill="#000000"/><rect x="2445.13" y="1064.1" width="4" height="5" fill="#000000"/><rect x="2458.63" y="1064.1" width="4" height="5" fill="#000000"/><rect x="2472.13" y="1064.1" width="4" height="5" fill="#000000"/>
<text x="2585.32" y="1073.8" font-family="'Liberation Mono', monospace" font-size="21" letter-spacing="0.9" font-weight="normal" fill="#ffffff" text-anchor="start" stroke="#000000" stroke-width="0.3">*0_0000_0000</text><rect x="2603.12" y="1064.1" width="4" height="5" fill="#000000"/><rect x="2630.12" y="1064.1" width="4" height="5" fill="#000000"/><rect x="2643.62" y="1064.1" width="4" height="5" fill="#000000"/><rect x="2657.12" y="1064.1" width="4" height="5" fill="#000000"/><rect x="2670.62" y="1064.1" width="4" height="5" fill="#000000"/><rect x="2697.62" y="1064.1" width="4" height="5" fill="#000000"/><rect x="2711.12" y="1064.1" width="4" height="5" fill="#000000"/><rect x="2724.62" y="1064.1" width="4" height="5" fill="#000000"/><rect x="2738.12" y="1064.1" width="4" height="5" fill="#000000"/>
<path d="M2761.37,1053.3 L2940.36,1053.3 L2943.06,1063.3 L2943.06,1071.7 L2940.36,1081.7 L2761.37,1081.7 L2758.67,1071.7 L2758.67,1063.3 Z" fill="none" stroke="#00dcdc" stroke-width="1.5"/>
<g clip-path="url(#clipR22)"><text x="2747.5" y="1073.8" font-family="'Liberation Mono', monospace" font-size="21" letter-spacing="0.9" font-weight="normal" fill="#ffffff" text-anchor="start" stroke="#000000" stroke-width="0.3">0000_0000_000c_e6da</text><rect x="2751.8" y="1064.1" width="4" height="5" fill="#000000"/><rect x="2765.3" y="1064.1" width="4" height="5" fill="#000000"/><rect x="2778.8" y="1064.1" width="4" height="5" fill="#000000"/><rect x="2792.3" y="1064.1" width="4" height="5" fill="#000000"/><rect x="2819.3" y="1064.1" width="4" height="5" fill="#000000"/><rect x="2832.8" y="1064.1" width="4" height="5" fill="#000000"/><rect x="2846.3" y="1064.1" width="4" height="5" fill="#000000"/><rect x="2859.8" y="1064.1" width="4" height="5" fill="#000000"/><rect x="2886.8" y="1064.1" width="4" height="5" fill="#000000"/><rect x="2900.3" y="1064.1" width="4" height="5" fill="#000000"/><rect x="2913.8" y="1064.1" width="4" height="5" fill="#000000"/></g>
<line x1="796.5" y1="1119.2" x2="815.95" y2="1119.2" stroke="#00dcdc" stroke-width="1.5" />
<line x1="815.95" y1="1090.8" x2="908.45" y2="1090.8" stroke="#00dc00" stroke-width="1.5" />
<line x1="908.45" y1="1119.2" x2="1185.94" y2="1119.2" stroke="#00dcdc" stroke-width="1.5" />
<line x1="1185.94" y1="1090.8" x2="1278.43" y2="1090.8" stroke="#00dc00" stroke-width="1.5" />
<line x1="1278.43" y1="1119.2" x2="1555.92" y2="1119.2" stroke="#00dcdc" stroke-width="1.5" />
<line x1="1555.92" y1="1090.8" x2="1648.42" y2="1090.8" stroke="#00dc00" stroke-width="1.5" />
<line x1="1648.42" y1="1119.2" x2="1925.9" y2="1119.2" stroke="#00dcdc" stroke-width="1.5" />
<line x1="1925.9" y1="1090.8" x2="2018.4" y2="1090.8" stroke="#00dc00" stroke-width="1.5" />
<line x1="2018.4" y1="1119.2" x2="2295.89" y2="1119.2" stroke="#00dcdc" stroke-width="1.5" />
<line x1="2295.89" y1="1090.8" x2="2388.38" y2="1090.8" stroke="#00dc00" stroke-width="1.5" />
<line x1="2388.38" y1="1119.2" x2="2665.87" y2="1119.2" stroke="#00dcdc" stroke-width="1.5" />
<line x1="2665.87" y1="1090.8" x2="2758.37" y2="1090.8" stroke="#00dc00" stroke-width="1.5" />
<line x1="2758.37" y1="1119.2" x2="2903" y2="1119.2" stroke="#00dcdc" stroke-width="1.5" />
<line x1="815.95" y1="1090.8" x2="815.95" y2="1119.2" stroke="#00dc00" stroke-width="1.5" />
<line x1="908.45" y1="1090.8" x2="908.45" y2="1119.2" stroke="#00dcdc" stroke-width="1.5" />
<line x1="1185.94" y1="1090.8" x2="1185.94" y2="1119.2" stroke="#00dc00" stroke-width="1.5" />
<line x1="1278.43" y1="1090.8" x2="1278.43" y2="1119.2" stroke="#00dcdc" stroke-width="1.5" />
<line x1="1555.92" y1="1090.8" x2="1555.92" y2="1119.2" stroke="#00dc00" stroke-width="1.5" />
<line x1="1648.42" y1="1090.8" x2="1648.42" y2="1119.2" stroke="#00dcdc" stroke-width="1.5" />
<line x1="1925.9" y1="1090.8" x2="1925.9" y2="1119.2" stroke="#00dc00" stroke-width="1.5" />
<line x1="2018.4" y1="1090.8" x2="2018.4" y2="1119.2" stroke="#00dcdc" stroke-width="1.5" />
<line x1="2295.89" y1="1090.8" x2="2295.89" y2="1119.2" stroke="#00dc00" stroke-width="1.5" />
<line x1="2388.38" y1="1090.8" x2="2388.38" y2="1119.2" stroke="#00dcdc" stroke-width="1.5" />
<line x1="2665.87" y1="1090.8" x2="2665.87" y2="1119.2" stroke="#00dc00" stroke-width="1.5" />
<line x1="2758.37" y1="1090.8" x2="2758.37" y2="1119.2" stroke="#00dcdc" stroke-width="1.5" />
<line x1="846.5" y1="1128.3" x2="2853" y2="1128.3" stroke="#00dcdc" stroke-width="1.5" />
<line x1="846.5" y1="1156.7" x2="2853" y2="1156.7" stroke="#00dcdc" stroke-width="1.5" />
<text x="1843.45" y="1148.8" font-family="'Liberation Mono', monospace" font-size="21" letter-spacing="0.9" font-weight="normal" fill="#ffffff" text-anchor="start" stroke="#000000" stroke-width="0.3">0</text><rect x="1847.75" y="1139.1" width="4" height="5" fill="#000000"/>
<line x1="846.5" y1="1194.2" x2="2853" y2="1194.2" stroke="#00dcdc" stroke-width="1.5" />
<line x1="846.5" y1="1231.7" x2="2853" y2="1231.7" stroke="#00dcdc" stroke-width="1.5" />
<line x1="846.5" y1="1240.8" x2="2853" y2="1240.8" stroke="#00dcdc" stroke-width="1.5" />
<line x1="846.5" y1="1269.2" x2="2853" y2="1269.2" stroke="#00dcdc" stroke-width="1.5" />
<text x="1843.45" y="1261.3" font-family="'Liberation Mono', monospace" font-size="21" letter-spacing="0.9" font-weight="normal" fill="#ffffff" text-anchor="start" stroke="#000000" stroke-width="0.3">0</text><rect x="1847.75" y="1251.6" width="4" height="5" fill="#000000"/>
<line x1="846.5" y1="1278.3" x2="2853" y2="1278.3" stroke="#00dcdc" stroke-width="1.5" />
<line x1="846.5" y1="1306.7" x2="2853" y2="1306.7" stroke="#00dcdc" stroke-width="1.5" />
<text x="1823.2" y="1298.8" font-family="'Liberation Mono', monospace" font-size="21" letter-spacing="0.9" font-weight="normal" fill="#ffffff" text-anchor="start" stroke="#000000" stroke-width="0.3">OKAY</text>
<path d="M633.96,1315.8 L720.46,1315.8 L723.16,1325.8 L723.16,1334.2 L720.46,1344.2 L633.96,1344.2 L631.26,1334.2 L631.26,1325.8 Z" fill="none" stroke="#00dcdc" stroke-width="1.5"/>
<path d="M726.46,1315.8 L812.95,1315.8 L815.65,1325.8 L815.65,1334.2 L812.95,1344.2 L726.46,1344.2 L723.76,1334.2 L723.76,1325.8 Z" fill="none" stroke="#00dcdc" stroke-width="1.5"/>
<path d="M818.95,1315.8 L905.45,1315.8 L908.15,1325.8 L908.15,1334.2 L905.45,1344.2 L818.95,1344.2 L816.25,1334.2 L816.25,1325.8 Z" fill="none" stroke="#00dcdc" stroke-width="1.5"/>
<path d="M911.45,1315.8 L997.94,1315.8 L1000.64,1325.8 L1000.64,1334.2 L997.94,1344.2 L911.45,1344.2 L908.75,1334.2 L908.75,1325.8 Z" fill="none" stroke="#00dcdc" stroke-width="1.5"/>
<path d="M1003.94,1315.8 L1090.44,1315.8 L1093.14,1325.8 L1093.14,1334.2 L1090.44,1344.2 L1003.94,1344.2 L1001.24,1334.2 L1001.24,1325.8 Z" fill="none" stroke="#00dcdc" stroke-width="1.5"/>
<path d="M1096.44,1315.8 L1182.94,1315.8 L1185.64,1325.8 L1185.64,1334.2 L1182.94,1344.2 L1096.44,1344.2 L1093.74,1334.2 L1093.74,1325.8 Z" fill="none" stroke="#00dcdc" stroke-width="1.5"/>
<path d="M1188.94,1315.8 L1275.43,1315.8 L1278.13,1325.8 L1278.13,1334.2 L1275.43,1344.2 L1188.94,1344.2 L1186.24,1334.2 L1186.24,1325.8 Z" fill="none" stroke="#00dcdc" stroke-width="1.5"/>
<path d="M1281.43,1315.8 L1367.93,1315.8 L1370.63,1325.8 L1370.63,1334.2 L1367.93,1344.2 L1281.43,1344.2 L1278.73,1334.2 L1278.73,1325.8 Z" fill="none" stroke="#00dcdc" stroke-width="1.5"/>
<path d="M1373.93,1315.8 L1460.42,1315.8 L1463.12,1325.8 L1463.12,1334.2 L1460.42,1344.2 L1373.93,1344.2 L1371.23,1334.2 L1371.23,1325.8 Z" fill="none" stroke="#00dcdc" stroke-width="1.5"/>
<path d="M1466.42,1315.8 L1552.92,1315.8 L1555.62,1325.8 L1555.62,1334.2 L1552.92,1344.2 L1466.42,1344.2 L1463.72,1334.2 L1463.72,1325.8 Z" fill="none" stroke="#00dcdc" stroke-width="1.5"/>
<path d="M1558.92,1315.8 L1645.42,1315.8 L1648.12,1325.8 L1648.12,1334.2 L1645.42,1344.2 L1558.92,1344.2 L1556.22,1334.2 L1556.22,1325.8 Z" fill="none" stroke="#00dcdc" stroke-width="1.5"/>
<path d="M1651.42,1315.8 L1737.91,1315.8 L1740.61,1325.8 L1740.61,1334.2 L1737.91,1344.2 L1651.42,1344.2 L1648.72,1334.2 L1648.72,1325.8 Z" fill="none" stroke="#00dcdc" stroke-width="1.5"/>
<path d="M1743.91,1315.8 L1830.41,1315.8 L1833.11,1325.8 L1833.11,1334.2 L1830.41,1344.2 L1743.91,1344.2 L1741.21,1334.2 L1741.21,1325.8 Z" fill="none" stroke="#00dcdc" stroke-width="1.5"/>
<path d="M1836.41,1315.8 L1922.9,1315.8 L1925.6,1325.8 L1925.6,1334.2 L1922.9,1344.2 L1836.41,1344.2 L1833.71,1334.2 L1833.71,1325.8 Z" fill="none" stroke="#00dcdc" stroke-width="1.5"/>
<path d="M1928.9,1315.8 L2015.4,1315.8 L2018.1,1325.8 L2018.1,1334.2 L2015.4,1344.2 L1928.9,1344.2 L1926.2,1334.2 L1926.2,1325.8 Z" fill="none" stroke="#00dcdc" stroke-width="1.5"/>
<path d="M2021.4,1315.8 L2107.9,1315.8 L2110.6,1325.8 L2110.6,1334.2 L2107.9,1344.2 L2021.4,1344.2 L2018.7,1334.2 L2018.7,1325.8 Z" fill="none" stroke="#00dcdc" stroke-width="1.5"/>
<path d="M2113.9,1315.8 L2200.39,1315.8 L2203.09,1325.8 L2203.09,1334.2 L2200.39,1344.2 L2113.9,1344.2 L2111.2,1334.2 L2111.2,1325.8 Z" fill="none" stroke="#00dcdc" stroke-width="1.5"/>
<path d="M2206.39,1315.8 L2292.89,1315.8 L2295.59,1325.8 L2295.59,1334.2 L2292.89,1344.2 L2206.39,1344.2 L2203.69,1334.2 L2203.69,1325.8 Z" fill="none" stroke="#00dcdc" stroke-width="1.5"/>
<path d="M2298.89,1315.8 L2385.38,1315.8 L2388.08,1325.8 L2388.08,1334.2 L2385.38,1344.2 L2298.89,1344.2 L2296.19,1334.2 L2296.19,1325.8 Z" fill="none" stroke="#00dcdc" stroke-width="1.5"/>
<path d="M2391.38,1315.8 L2477.88,1315.8 L2480.58,1325.8 L2480.58,1334.2 L2477.88,1344.2 L2391.38,1344.2 L2388.68,1334.2 L2388.68,1325.8 Z" fill="none" stroke="#00dcdc" stroke-width="1.5"/>
<path d="M2483.88,1315.8 L2570.38,1315.8 L2573.08,1325.8 L2573.08,1334.2 L2570.38,1344.2 L2483.88,1344.2 L2481.18,1334.2 L2481.18,1325.8 Z" fill="none" stroke="#00dcdc" stroke-width="1.5"/>
<path d="M2576.38,1315.8 L2662.87,1315.8 L2665.57,1325.8 L2665.57,1334.2 L2662.87,1344.2 L2576.38,1344.2 L2573.68,1334.2 L2573.68,1325.8 Z" fill="none" stroke="#00dcdc" stroke-width="1.5"/>
<path d="M2668.87,1315.8 L2755.37,1315.8 L2758.07,1325.8 L2758.07,1334.2 L2755.37,1344.2 L2668.87,1344.2 L2666.17,1334.2 L2666.17,1325.8 Z" fill="none" stroke="#00dcdc" stroke-width="1.5"/>
<path d="M2761.37,1315.8 L2847.86,1315.8 L2850.56,1325.8 L2850.56,1334.2 L2847.86,1344.2 L2761.37,1344.2 L2758.67,1334.2 L2758.67,1325.8 Z" fill="none" stroke="#00dcdc" stroke-width="1.5"/>
<path d="M2853.86,1315.8 L2940.36,1315.8 L2943.06,1325.8 L2943.06,1334.2 L2940.36,1344.2 L2853.86,1344.2 L2851.16,1334.2 L2851.16,1325.8 Z" fill="none" stroke="#00dcdc" stroke-width="1.5"/>
<text x="850.92" y="1336.3" font-family="'Liberation Mono', monospace" font-size="21" letter-spacing="0.9" font-weight="normal" fill="#ffffff" text-anchor="start" stroke="#000000" stroke-width="0.3">NSEQ</text>
<text x="928.15" y="1336.3" font-family="'Liberation Mono', monospace" font-size="21" letter-spacing="0.9" font-weight="normal" fill="#ffffff" text-anchor="start" stroke="#000000" stroke-width="0.3">IDLE</text>
<text x="1020.64" y="1336.3" font-family="'Liberation Mono', monospace" font-size="21" letter-spacing="0.9" font-weight="normal" fill="#ffffff" text-anchor="start" stroke="#000000" stroke-width="0.3">NSEQ</text>
<text x="1113.14" y="1336.3" font-family="'Liberation Mono', monospace" font-size="21" letter-spacing="0.9" font-weight="normal" fill="#ffffff" text-anchor="start" stroke="#000000" stroke-width="0.3">IDLE</text>
<text x="1205.63" y="1336.3" font-family="'Liberation Mono', monospace" font-size="21" letter-spacing="0.9" font-weight="normal" fill="#ffffff" text-anchor="start" stroke="#000000" stroke-width="0.3">NSEQ</text>
<text x="1298.13" y="1336.3" font-family="'Liberation Mono', monospace" font-size="21" letter-spacing="0.9" font-weight="normal" fill="#ffffff" text-anchor="start" stroke="#000000" stroke-width="0.3">IDLE</text>
<text x="1390.63" y="1336.3" font-family="'Liberation Mono', monospace" font-size="21" letter-spacing="0.9" font-weight="normal" fill="#ffffff" text-anchor="start" stroke="#000000" stroke-width="0.3">NSEQ</text>
<text x="1483.12" y="1336.3" font-family="'Liberation Mono', monospace" font-size="21" letter-spacing="0.9" font-weight="normal" fill="#ffffff" text-anchor="start" stroke="#000000" stroke-width="0.3">IDLE</text>
<text x="1575.62" y="1336.3" font-family="'Liberation Mono', monospace" font-size="21" letter-spacing="0.9" font-weight="normal" fill="#ffffff" text-anchor="start" stroke="#000000" stroke-width="0.3">NSEQ</text>
<text x="1668.11" y="1336.3" font-family="'Liberation Mono', monospace" font-size="21" letter-spacing="0.9" font-weight="normal" fill="#ffffff" text-anchor="start" stroke="#000000" stroke-width="0.3">IDLE</text>
<text x="1760.61" y="1336.3" font-family="'Liberation Mono', monospace" font-size="21" letter-spacing="0.9" font-weight="normal" fill="#ffffff" text-anchor="start" stroke="#000000" stroke-width="0.3">NSEQ</text>
<text x="1853.11" y="1336.3" font-family="'Liberation Mono', monospace" font-size="21" letter-spacing="0.9" font-weight="normal" fill="#ffffff" text-anchor="start" stroke="#000000" stroke-width="0.3">IDLE</text>
<text x="1945.6" y="1336.3" font-family="'Liberation Mono', monospace" font-size="21" letter-spacing="0.9" font-weight="normal" fill="#ffffff" text-anchor="start" stroke="#000000" stroke-width="0.3">NSEQ</text>
<text x="2038.1" y="1336.3" font-family="'Liberation Mono', monospace" font-size="21" letter-spacing="0.9" font-weight="normal" fill="#ffffff" text-anchor="start" stroke="#000000" stroke-width="0.3">IDLE</text>
<text x="2130.59" y="1336.3" font-family="'Liberation Mono', monospace" font-size="21" letter-spacing="0.9" font-weight="normal" fill="#ffffff" text-anchor="start" stroke="#000000" stroke-width="0.3">NSEQ</text>
<text x="2223.09" y="1336.3" font-family="'Liberation Mono', monospace" font-size="21" letter-spacing="0.9" font-weight="normal" fill="#ffffff" text-anchor="start" stroke="#000000" stroke-width="0.3">IDLE</text>
<text x="2315.59" y="1336.3" font-family="'Liberation Mono', monospace" font-size="21" letter-spacing="0.9" font-weight="normal" fill="#ffffff" text-anchor="start" stroke="#000000" stroke-width="0.3">NSEQ</text>
<text x="2408.08" y="1336.3" font-family="'Liberation Mono', monospace" font-size="21" letter-spacing="0.9" font-weight="normal" fill="#ffffff" text-anchor="start" stroke="#000000" stroke-width="0.3">IDLE</text>
<text x="2500.58" y="1336.3" font-family="'Liberation Mono', monospace" font-size="21" letter-spacing="0.9" font-weight="normal" fill="#ffffff" text-anchor="start" stroke="#000000" stroke-width="0.3">NSEQ</text>
<text x="2593.07" y="1336.3" font-family="'Liberation Mono', monospace" font-size="21" letter-spacing="0.9" font-weight="normal" fill="#ffffff" text-anchor="start" stroke="#000000" stroke-width="0.3">IDLE</text>
<text x="2685.57" y="1336.3" font-family="'Liberation Mono', monospace" font-size="21" letter-spacing="0.9" font-weight="normal" fill="#ffffff" text-anchor="start" stroke="#000000" stroke-width="0.3">NSEQ</text>
<text x="2778.07" y="1336.3" font-family="'Liberation Mono', monospace" font-size="21" letter-spacing="0.9" font-weight="normal" fill="#ffffff" text-anchor="start" stroke="#000000" stroke-width="0.3">IDLE</text>
<path d="M633.96,1353.3 L720.46,1353.3 L723.16,1363.3 L723.16,1371.7 L720.46,1381.7 L633.96,1381.7 L631.26,1371.7 L631.26,1363.3 Z" fill="none" stroke="#00dcdc" stroke-width="1.5"/>
<path d="M726.46,1353.3 L812.95,1353.3 L815.65,1363.3 L815.65,1371.7 L812.95,1381.7 L726.46,1381.7 L723.76,1371.7 L723.76,1363.3 Z" fill="none" stroke="#00dcdc" stroke-width="1.5"/>
<path d="M818.95,1353.3 L905.45,1353.3 L908.15,1363.3 L908.15,1371.7 L905.45,1381.7 L818.95,1381.7 L816.25,1371.7 L816.25,1363.3 Z" fill="none" stroke="#00dcdc" stroke-width="1.5"/>
<path d="M911.45,1353.3 L997.94,1353.3 L1000.64,1363.3 L1000.64,1371.7 L997.94,1381.7 L911.45,1381.7 L908.75,1371.7 L908.75,1363.3 Z" fill="none" stroke="#00dcdc" stroke-width="1.5"/>
<path d="M1003.94,1353.3 L1090.44,1353.3 L1093.14,1363.3 L1093.14,1371.7 L1090.44,1381.7 L1003.94,1381.7 L1001.24,1371.7 L1001.24,1363.3 Z" fill="none" stroke="#00dcdc" stroke-width="1.5"/>
<path d="M1096.44,1353.3 L1182.94,1353.3 L1185.64,1363.3 L1185.64,1371.7 L1182.94,1381.7 L1096.44,1381.7 L1093.74,1371.7 L1093.74,1363.3 Z" fill="none" stroke="#00dcdc" stroke-width="1.5"/>
<path d="M1188.94,1353.3 L1275.43,1353.3 L1278.13,1363.3 L1278.13,1371.7 L1275.43,1381.7 L1188.94,1381.7 L1186.24,1371.7 L1186.24,1363.3 Z" fill="none" stroke="#00dcdc" stroke-width="1.5"/>
<path d="M1281.43,1353.3 L1367.93,1353.3 L1370.63,1363.3 L1370.63,1371.7 L1367.93,1381.7 L1281.43,1381.7 L1278.73,1371.7 L1278.73,1363.3 Z" fill="none" stroke="#00dcdc" stroke-width="1.5"/>
<path d="M1373.93,1353.3 L1460.42,1353.3 L1463.12,1363.3 L1463.12,1371.7 L1460.42,1381.7 L1373.93,1381.7 L1371.23,1371.7 L1371.23,1363.3 Z" fill="none" stroke="#00dcdc" stroke-width="1.5"/>
<path d="M1466.42,1353.3 L1552.92,1353.3 L1555.62,1363.3 L1555.62,1371.7 L1552.92,1381.7 L1466.42,1381.7 L1463.72,1371.7 L1463.72,1363.3 Z" fill="none" stroke="#00dcdc" stroke-width="1.5"/>
<path d="M1558.92,1353.3 L1645.42,1353.3 L1648.12,1363.3 L1648.12,1371.7 L1645.42,1381.7 L1558.92,1381.7 L1556.22,1371.7 L1556.22,1363.3 Z" fill="none" stroke="#00dcdc" stroke-width="1.5"/>
<path d="M1651.42,1353.3 L1737.91,1353.3 L1740.61,1363.3 L1740.61,1371.7 L1737.91,1381.7 L1651.42,1381.7 L1648.72,1371.7 L1648.72,1363.3 Z" fill="none" stroke="#00dcdc" stroke-width="1.5"/>
<path d="M1743.91,1353.3 L1830.41,1353.3 L1833.11,1363.3 L1833.11,1371.7 L1830.41,1381.7 L1743.91,1381.7 L1741.21,1371.7 L1741.21,1363.3 Z" fill="none" stroke="#00dcdc" stroke-width="1.5"/>
<path d="M1836.41,1353.3 L1922.9,1353.3 L1925.6,1363.3 L1925.6,1371.7 L1922.9,1381.7 L1836.41,1381.7 L1833.71,1371.7 L1833.71,1363.3 Z" fill="none" stroke="#00dcdc" stroke-width="1.5"/>
<path d="M1928.9,1353.3 L2015.4,1353.3 L2018.1,1363.3 L2018.1,1371.7 L2015.4,1381.7 L1928.9,1381.7 L1926.2,1371.7 L1926.2,1363.3 Z" fill="none" stroke="#00dcdc" stroke-width="1.5"/>
<path d="M2021.4,1353.3 L2107.9,1353.3 L2110.6,1363.3 L2110.6,1371.7 L2107.9,1381.7 L2021.4,1381.7 L2018.7,1371.7 L2018.7,1363.3 Z" fill="none" stroke="#00dcdc" stroke-width="1.5"/>
<path d="M2113.9,1353.3 L2200.39,1353.3 L2203.09,1363.3 L2203.09,1371.7 L2200.39,1381.7 L2113.9,1381.7 L2111.2,1371.7 L2111.2,1363.3 Z" fill="none" stroke="#00dcdc" stroke-width="1.5"/>
<path d="M2206.39,1353.3 L2292.89,1353.3 L2295.59,1363.3 L2295.59,1371.7 L2292.89,1381.7 L2206.39,1381.7 L2203.69,1371.7 L2203.69,1363.3 Z" fill="none" stroke="#00dcdc" stroke-width="1.5"/>
<path d="M2298.89,1353.3 L2385.38,1353.3 L2388.08,1363.3 L2388.08,1371.7 L2385.38,1381.7 L2298.89,1381.7 L2296.19,1371.7 L2296.19,1363.3 Z" fill="none" stroke="#00dcdc" stroke-width="1.5"/>
<path d="M2391.38,1353.3 L2477.88,1353.3 L2480.58,1363.3 L2480.58,1371.7 L2477.88,1381.7 L2391.38,1381.7 L2388.68,1371.7 L2388.68,1363.3 Z" fill="none" stroke="#00dcdc" stroke-width="1.5"/>
<path d="M2483.88,1353.3 L2570.38,1353.3 L2573.08,1363.3 L2573.08,1371.7 L2570.38,1381.7 L2483.88,1381.7 L2481.18,1371.7 L2481.18,1363.3 Z" fill="none" stroke="#00dcdc" stroke-width="1.5"/>
<path d="M2576.38,1353.3 L2662.87,1353.3 L2665.57,1363.3 L2665.57,1371.7 L2662.87,1381.7 L2576.38,1381.7 L2573.68,1371.7 L2573.68,1363.3 Z" fill="none" stroke="#00dcdc" stroke-width="1.5"/>
<path d="M2668.87,1353.3 L2755.37,1353.3 L2758.07,1363.3 L2758.07,1371.7 L2755.37,1381.7 L2668.87,1381.7 L2666.17,1371.7 L2666.17,1363.3 Z" fill="none" stroke="#00dcdc" stroke-width="1.5"/>
<path d="M2761.37,1353.3 L2847.86,1353.3 L2850.56,1363.3 L2850.56,1371.7 L2847.86,1381.7 L2761.37,1381.7 L2758.67,1371.7 L2758.67,1363.3 Z" fill="none" stroke="#00dcdc" stroke-width="1.5"/>
<path d="M2853.86,1353.3 L2940.36,1353.3 L2943.06,1363.3 L2943.06,1371.7 L2940.36,1381.7 L2853.86,1381.7 L2851.16,1371.7 L2851.16,1363.3 Z" fill="none" stroke="#00dcdc" stroke-width="1.5"/>
<text x="857.67" y="1373.8" font-family="'Liberation Mono', monospace" font-size="21" letter-spacing="0.9" font-weight="normal" fill="#ffffff" text-anchor="start" stroke="#000000" stroke-width="0.3">*IT</text>
<text x="921.4" y="1373.8" font-family="'Liberation Mono', monospace" font-size="21" letter-spacing="0.9" font-weight="normal" fill="#ffffff" text-anchor="start" stroke="#000000" stroke-width="0.3">*8BIT</text>
<text x="1013.89" y="1373.8" font-family="'Liberation Mono', monospace" font-size="21" letter-spacing="0.9" font-weight="normal" fill="#ffffff" text-anchor="start" stroke="#000000" stroke-width="0.3">*2BIT</text>
<text x="1106.39" y="1373.8" font-family="'Liberation Mono', monospace" font-size="21" letter-spacing="0.9" font-weight="normal" fill="#ffffff" text-anchor="start" stroke="#000000" stroke-width="0.3">*8BIT</text>
<text x="1198.88" y="1373.8" font-family="'Liberation Mono', monospace" font-size="21" letter-spacing="0.9" font-weight="normal" fill="#ffffff" text-anchor="start" stroke="#000000" stroke-width="0.3">*2BIT</text>
<text x="1291.38" y="1373.8" font-family="'Liberation Mono', monospace" font-size="21" letter-spacing="0.9" font-weight="normal" fill="#ffffff" text-anchor="start" stroke="#000000" stroke-width="0.3">*8BIT</text>
<text x="1383.88" y="1373.8" font-family="'Liberation Mono', monospace" font-size="21" letter-spacing="0.9" font-weight="normal" fill="#ffffff" text-anchor="start" stroke="#000000" stroke-width="0.3">*2BIT</text>
<text x="1476.37" y="1373.8" font-family="'Liberation Mono', monospace" font-size="21" letter-spacing="0.9" font-weight="normal" fill="#ffffff" text-anchor="start" stroke="#000000" stroke-width="0.3">*8BIT</text>
<text x="1568.87" y="1373.8" font-family="'Liberation Mono', monospace" font-size="21" letter-spacing="0.9" font-weight="normal" fill="#ffffff" text-anchor="start" stroke="#000000" stroke-width="0.3">*2BIT</text>
<text x="1661.36" y="1373.8" font-family="'Liberation Mono', monospace" font-size="21" letter-spacing="0.9" font-weight="normal" fill="#ffffff" text-anchor="start" stroke="#000000" stroke-width="0.3">*8BIT</text>
<text x="1753.86" y="1373.8" font-family="'Liberation Mono', monospace" font-size="21" letter-spacing="0.9" font-weight="normal" fill="#ffffff" text-anchor="start" stroke="#000000" stroke-width="0.3">*2BIT</text>
<text x="1846.36" y="1373.8" font-family="'Liberation Mono', monospace" font-size="21" letter-spacing="0.9" font-weight="normal" fill="#ffffff" text-anchor="start" stroke="#000000" stroke-width="0.3">*8BIT</text>
<text x="1938.85" y="1373.8" font-family="'Liberation Mono', monospace" font-size="21" letter-spacing="0.9" font-weight="normal" fill="#ffffff" text-anchor="start" stroke="#000000" stroke-width="0.3">*2BIT</text>
<text x="2031.35" y="1373.8" font-family="'Liberation Mono', monospace" font-size="21" letter-spacing="0.9" font-weight="normal" fill="#ffffff" text-anchor="start" stroke="#000000" stroke-width="0.3">*8BIT</text>
<text x="2123.84" y="1373.8" font-family="'Liberation Mono', monospace" font-size="21" letter-spacing="0.9" font-weight="normal" fill="#ffffff" text-anchor="start" stroke="#000000" stroke-width="0.3">*2BIT</text>
<text x="2216.34" y="1373.8" font-family="'Liberation Mono', monospace" font-size="21" letter-spacing="0.9" font-weight="normal" fill="#ffffff" text-anchor="start" stroke="#000000" stroke-width="0.3">*8BIT</text>
<text x="2308.84" y="1373.8" font-family="'Liberation Mono', monospace" font-size="21" letter-spacing="0.9" font-weight="normal" fill="#ffffff" text-anchor="start" stroke="#000000" stroke-width="0.3">*2BIT</text>
<text x="2401.33" y="1373.8" font-family="'Liberation Mono', monospace" font-size="21" letter-spacing="0.9" font-weight="normal" fill="#ffffff" text-anchor="start" stroke="#000000" stroke-width="0.3">*8BIT</text>
<text x="2493.83" y="1373.8" font-family="'Liberation Mono', monospace" font-size="21" letter-spacing="0.9" font-weight="normal" fill="#ffffff" text-anchor="start" stroke="#000000" stroke-width="0.3">*2BIT</text>
<text x="2586.32" y="1373.8" font-family="'Liberation Mono', monospace" font-size="21" letter-spacing="0.9" font-weight="normal" fill="#ffffff" text-anchor="start" stroke="#000000" stroke-width="0.3">*8BIT</text>
<text x="2678.82" y="1373.8" font-family="'Liberation Mono', monospace" font-size="21" letter-spacing="0.9" font-weight="normal" fill="#ffffff" text-anchor="start" stroke="#000000" stroke-width="0.3">*2BIT</text>
<text x="2771.32" y="1373.8" font-family="'Liberation Mono', monospace" font-size="21" letter-spacing="0.9" font-weight="normal" fill="#ffffff" text-anchor="start" stroke="#000000" stroke-width="0.3">*8BIT</text>
<line x1="846.5" y1="1390.8" x2="2853" y2="1390.8" stroke="#00dcdc" stroke-width="1.5" />
<line x1="846.5" y1="1419.2" x2="2853" y2="1419.2" stroke="#00dcdc" stroke-width="1.5" />
<text x="1809.7" y="1411.3" font-family="'Liberation Mono', monospace" font-size="21" letter-spacing="0.9" font-weight="normal" fill="#ffffff" text-anchor="start" stroke="#000000" stroke-width="0.3">SINGLE</text>
<line x1="846.5" y1="1428.3" x2="2853" y2="1428.3" stroke="#00dcdc" stroke-width="1.5" />
<line x1="846.5" y1="1456.7" x2="2853" y2="1456.7" stroke="#00dcdc" stroke-width="1.5" />
<text x="1823.2" y="1448.8" font-family="'Liberation Mono', monospace" font-size="21" letter-spacing="0.9" font-weight="normal" fill="#ffffff" text-anchor="start" stroke="#000000" stroke-width="0.3">READ</text>
<line x1="846.5" y1="1465.8" x2="2853" y2="1465.8" stroke="#00dcdc" stroke-width="1.5" />
<line x1="846.5" y1="1494.2" x2="2853" y2="1494.2" stroke="#00dcdc" stroke-width="1.5" />
<text x="1802.95" y="1486.3" font-family="'Liberation Mono', monospace" font-size="21" letter-spacing="0.9" font-weight="normal" fill="#ffffff" text-anchor="start" stroke="#000000" stroke-width="0.3">INITIAL</text>
</g>
<line x1="2295.8" y1="140.7" x2="2295.8" y2="1503.6" stroke="#ff00ff" stroke-width="1.6" />
<circle cx="2295.8" cy="166.7" r="4.3" fill="#ff00ff" stroke="#fff" stroke-width="1.3"/>
<text x="2301.5" y="161.6" font-family="'Liberation Mono', monospace" font-size="21" letter-spacing="0.95" font-weight="bold" fill="#ff00ff" text-anchor="start">C1:52702001</text>
<text x="2303.2" y="191.6" font-family="'Liberation Mono', monospace" font-size="21" letter-spacing="0.9" font-weight="normal" fill="#ff00ff" text-anchor="start">REF</text>
<rect x="2853" y="206.4" width="24.4" height="1331" fill="url(#dith)" />
<rect x="2853" y="207.2" width="24.2" height="22.5" fill="#c0c0c0" />
<rect x="2853" y="207.2" width="24.2" height="1.5" fill="#ffffff" />
<rect x="2853" y="207.2" width="1.5" height="22.5" fill="#ffffff" />
<rect x="2853" y="228.2" width="24.2" height="1.5" fill="#202020" />
<rect x="2875.7" y="207.2" width="1.5" height="22.5" fill="#202020" />
<path d="M2865.1,215.45 l-6.5,6 h13 z" fill="#000000"/>
<rect x="2853" y="286.3" width="24.2" height="1227.5" fill="#c0c0c0" />
<rect x="2853" y="286.3" width="24.2" height="1.5" fill="#ffffff" />
<rect x="2853" y="286.3" width="1.5" height="1227.5" fill="#ffffff" />
<rect x="2853" y="1512.3" width="24.2" height="1.5" fill="#202020" />
<rect x="2875.7" y="286.3" width="1.5" height="1227.5" fill="#202020" />
<rect x="2853" y="1514" width="24.2" height="22.6" fill="#c0c0c0" />
<rect x="2853" y="1514" width="24.2" height="1.5" fill="#ffffff" />
<rect x="2853" y="1514" width="1.5" height="22.6" fill="#ffffff" />
<rect x="2853" y="1535.1" width="24.2" height="1.5" fill="#202020" />
<rect x="2875.7" y="1514" width="1.5" height="22.6" fill="#202020" />
<path d="M2865.1,1528.3 l-6.5,-6 h13 z" fill="#000000"/>
<rect x="847.4" y="1504.3" width="2005.6" height="33.5" fill="#a4a4a8" />
<g clip-path="url(#bclip)">
<line x1="872.9" y1="1512.8" x2="872.9" y2="1537.8" stroke="#000000" stroke-width="1.5" />
<line x1="887.56" y1="1531.5" x2="887.56" y2="1537.8" stroke="#000000" stroke-width="1.5" />
<line x1="902.22" y1="1531.5" x2="902.22" y2="1537.8" stroke="#000000" stroke-width="1.5" />
<line x1="916.89" y1="1531.5" x2="916.89" y2="1537.8" stroke="#000000" stroke-width="1.5" />
<line x1="931.55" y1="1531.5" x2="931.55" y2="1537.8" stroke="#000000" stroke-width="1.5" />
<line x1="946.21" y1="1523.9" x2="946.21" y2="1537.8" stroke="#000000" stroke-width="1.5" />
<line x1="960.87" y1="1531.5" x2="960.87" y2="1537.8" stroke="#000000" stroke-width="1.5" />
<line x1="975.53" y1="1531.5" x2="975.53" y2="1537.8" stroke="#000000" stroke-width="1.5" />
<line x1="990.2" y1="1531.5" x2="990.2" y2="1537.8" stroke="#000000" stroke-width="1.5" />
<line x1="1004.86" y1="1531.5" x2="1004.86" y2="1537.8" stroke="#000000" stroke-width="1.5" />
<line x1="1019.52" y1="1512.8" x2="1019.52" y2="1537.8" stroke="#000000" stroke-width="1.5" />
<line x1="1034.18" y1="1531.5" x2="1034.18" y2="1537.8" stroke="#000000" stroke-width="1.5" />
<line x1="1048.84" y1="1531.5" x2="1048.84" y2="1537.8" stroke="#000000" stroke-width="1.5" />
<line x1="1063.51" y1="1531.5" x2="1063.51" y2="1537.8" stroke="#000000" stroke-width="1.5" />
<line x1="1078.17" y1="1531.5" x2="1078.17" y2="1537.8" stroke="#000000" stroke-width="1.5" />
<line x1="1092.83" y1="1523.9" x2="1092.83" y2="1537.8" stroke="#000000" stroke-width="1.5" />
<line x1="1107.49" y1="1531.5" x2="1107.49" y2="1537.8" stroke="#000000" stroke-width="1.5" />
<line x1="1122.15" y1="1531.5" x2="1122.15" y2="1537.8" stroke="#000000" stroke-width="1.5" />
<line x1="1136.82" y1="1531.5" x2="1136.82" y2="1537.8" stroke="#000000" stroke-width="1.5" />
<line x1="1151.48" y1="1531.5" x2="1151.48" y2="1537.8" stroke="#000000" stroke-width="1.5" />
<line x1="1166.14" y1="1512.8" x2="1166.14" y2="1537.8" stroke="#000000" stroke-width="1.5" />
<line x1="1180.8" y1="1531.5" x2="1180.8" y2="1537.8" stroke="#000000" stroke-width="1.5" />
<line x1="1195.46" y1="1531.5" x2="1195.46" y2="1537.8" stroke="#000000" stroke-width="1.5" />
<line x1="1210.13" y1="1531.5" x2="1210.13" y2="1537.8" stroke="#000000" stroke-width="1.5" />
<line x1="1224.79" y1="1531.5" x2="1224.79" y2="1537.8" stroke="#000000" stroke-width="1.5" />
<line x1="1239.45" y1="1523.9" x2="1239.45" y2="1537.8" stroke="#000000" stroke-width="1.5" />
<line x1="1254.11" y1="1531.5" x2="1254.11" y2="1537.8" stroke="#000000" stroke-width="1.5" />
<line x1="1268.77" y1="1531.5" x2="1268.77" y2="1537.8" stroke="#000000" stroke-width="1.5" />
<line x1="1283.44" y1="1531.5" x2="1283.44" y2="1537.8" stroke="#000000" stroke-width="1.5" />
<line x1="1298.1" y1="1531.5" x2="1298.1" y2="1537.8" stroke="#000000" stroke-width="1.5" />
<line x1="1312.76" y1="1512.8" x2="1312.76" y2="1537.8" stroke="#000000" stroke-width="1.5" />
<line x1="1327.42" y1="1531.5" x2="1327.42" y2="1537.8" stroke="#000000" stroke-width="1.5" />
<line x1="1342.08" y1="1531.5" x2="1342.08" y2="1537.8" stroke="#000000" stroke-width="1.5" />
<line x1="1356.75" y1="1531.5" x2="1356.75" y2="1537.8" stroke="#000000" stroke-width="1.5" />
<line x1="1371.41" y1="1531.5" x2="1371.41" y2="1537.8" stroke="#000000" stroke-width="1.5" />
<line x1="1386.07" y1="1523.9" x2="1386.07" y2="1537.8" stroke="#000000" stroke-width="1.5" />
<line x1="1400.73" y1="1531.5" x2="1400.73" y2="1537.8" stroke="#000000" stroke-width="1.5" />
<line x1="1415.39" y1="1531.5" x2="1415.39" y2="1537.8" stroke="#000000" stroke-width="1.5" />
<line x1="1430.06" y1="1531.5" x2="1430.06" y2="1537.8" stroke="#000000" stroke-width="1.5" />
<line x1="1444.72" y1="1531.5" x2="1444.72" y2="1537.8" stroke="#000000" stroke-width="1.5" />
<line x1="1459.38" y1="1512.8" x2="1459.38" y2="1537.8" stroke="#000000" stroke-width="1.5" />
<line x1="1474.04" y1="1531.5" x2="1474.04" y2="1537.8" stroke="#000000" stroke-width="1.5" />
<line x1="1488.7" y1="1531.5" x2="1488.7" y2="1537.8" stroke="#000000" stroke-width="1.5" />
<line x1="1503.37" y1="1531.5" x2="1503.37" y2="1537.8" stroke="#000000" stroke-width="1.5" />
<line x1="1518.03" y1="1531.5" x2="1518.03" y2="1537.8" stroke="#000000" stroke-width="1.5" />
<line x1="1532.69" y1="1523.9" x2="1532.69" y2="1537.8" stroke="#000000" stroke-width="1.5" />
<line x1="1547.35" y1="1531.5" x2="1547.35" y2="1537.8" stroke="#000000" stroke-width="1.5" />
<line x1="1562.01" y1="1531.5" x2="1562.01" y2="1537.8" stroke="#000000" stroke-width="1.5" />
<line x1="1576.68" y1="1531.5" x2="1576.68" y2="1537.8" stroke="#000000" stroke-width="1.5" />
<line x1="1591.34" y1="1531.5" x2="1591.34" y2="1537.8" stroke="#000000" stroke-width="1.5" />
<line x1="1606" y1="1512.8" x2="1606" y2="1537.8" stroke="#000000" stroke-width="1.5" />
<line x1="1620.66" y1="1531.5" x2="1620.66" y2="1537.8" stroke="#000000" stroke-width="1.5" />
<line x1="1635.32" y1="1531.5" x2="1635.32" y2="1537.8" stroke="#000000" stroke-width="1.5" />
<line x1="1649.99" y1="1531.5" x2="1649.99" y2="1537.8" stroke="#000000" stroke-width="1.5" />
<line x1="1664.65" y1="1531.5" x2="1664.65" y2="1537.8" stroke="#000000" stroke-width="1.5" />
<line x1="1679.31" y1="1523.9" x2="1679.31" y2="1537.8" stroke="#000000" stroke-width="1.5" />
<line x1="1693.97" y1="1531.5" x2="1693.97" y2="1537.8" stroke="#000000" stroke-width="1.5" />
<line x1="1708.63" y1="1531.5" x2="1708.63" y2="1537.8" stroke="#000000" stroke-width="1.5" />
<line x1="1723.3" y1="1531.5" x2="1723.3" y2="1537.8" stroke="#000000" stroke-width="1.5" />
<line x1="1737.96" y1="1531.5" x2="1737.96" y2="1537.8" stroke="#000000" stroke-width="1.5" />
<line x1="1752.62" y1="1512.8" x2="1752.62" y2="1537.8" stroke="#000000" stroke-width="1.5" />
<line x1="1767.28" y1="1531.5" x2="1767.28" y2="1537.8" stroke="#000000" stroke-width="1.5" />
<line x1="1781.94" y1="1531.5" x2="1781.94" y2="1537.8" stroke="#000000" stroke-width="1.5" />
<line x1="1796.61" y1="1531.5" x2="1796.61" y2="1537.8" stroke="#000000" stroke-width="1.5" />
<line x1="1811.27" y1="1531.5" x2="1811.27" y2="1537.8" stroke="#000000" stroke-width="1.5" />
<line x1="1825.93" y1="1523.9" x2="1825.93" y2="1537.8" stroke="#000000" stroke-width="1.5" />
<line x1="1840.59" y1="1531.5" x2="1840.59" y2="1537.8" stroke="#000000" stroke-width="1.5" />
<line x1="1855.25" y1="1531.5" x2="1855.25" y2="1537.8" stroke="#000000" stroke-width="1.5" />
<line x1="1869.92" y1="1531.5" x2="1869.92" y2="1537.8" stroke="#000000" stroke-width="1.5" />
<line x1="1884.58" y1="1531.5" x2="1884.58" y2="1537.8" stroke="#000000" stroke-width="1.5" />
<line x1="1899.24" y1="1512.8" x2="1899.24" y2="1537.8" stroke="#000000" stroke-width="1.5" />
<line x1="1913.9" y1="1531.5" x2="1913.9" y2="1537.8" stroke="#000000" stroke-width="1.5" />
<line x1="1928.56" y1="1531.5" x2="1928.56" y2="1537.8" stroke="#000000" stroke-width="1.5" />
<line x1="1943.23" y1="1531.5" x2="1943.23" y2="1537.8" stroke="#000000" stroke-width="1.5" />
<line x1="1957.89" y1="1531.5" x2="1957.89" y2="1537.8" stroke="#000000" stroke-width="1.5" />
<line x1="1972.55" y1="1523.9" x2="1972.55" y2="1537.8" stroke="#000000" stroke-width="1.5" />
<line x1="1987.21" y1="1531.5" x2="1987.21" y2="1537.8" stroke="#000000" stroke-width="1.5" />
<line x1="2001.87" y1="1531.5" x2="2001.87" y2="1537.8" stroke="#000000" stroke-width="1.5" />
<line x1="2016.54" y1="1531.5" x2="2016.54" y2="1537.8" stroke="#000000" stroke-width="1.5" />
<line x1="2031.2" y1="1531.5" x2="2031.2" y2="1537.8" stroke="#000000" stroke-width="1.5" />
<line x1="2045.86" y1="1512.8" x2="2045.86" y2="1537.8" stroke="#000000" stroke-width="1.5" />
<line x1="2060.52" y1="1531.5" x2="2060.52" y2="1537.8" stroke="#000000" stroke-width="1.5" />
<line x1="2075.18" y1="1531.5" x2="2075.18" y2="1537.8" stroke="#000000" stroke-width="1.5" />
<line x1="2089.85" y1="1531.5" x2="2089.85" y2="1537.8" stroke="#000000" stroke-width="1.5" />
<line x1="2104.51" y1="1531.5" x2="2104.51" y2="1537.8" stroke="#000000" stroke-width="1.5" />
<line x1="2119.17" y1="1523.9" x2="2119.17" y2="1537.8" stroke="#000000" stroke-width="1.5" />
<line x1="2133.83" y1="1531.5" x2="2133.83" y2="1537.8" stroke="#000000" stroke-width="1.5" />
<line x1="2148.49" y1="1531.5" x2="2148.49" y2="1537.8" stroke="#000000" stroke-width="1.5" />
<line x1="2163.16" y1="1531.5" x2="2163.16" y2="1537.8" stroke="#000000" stroke-width="1.5" />
<line x1="2177.82" y1="1531.5" x2="2177.82" y2="1537.8" stroke="#000000" stroke-width="1.5" />
<line x1="2192.48" y1="1512.8" x2="2192.48" y2="1537.8" stroke="#000000" stroke-width="1.5" />
<line x1="2207.14" y1="1531.5" x2="2207.14" y2="1537.8" stroke="#000000" stroke-width="1.5" />
<line x1="2221.8" y1="1531.5" x2="2221.8" y2="1537.8" stroke="#000000" stroke-width="1.5" />
<line x1="2236.47" y1="1531.5" x2="2236.47" y2="1537.8" stroke="#000000" stroke-width="1.5" />
<line x1="2251.13" y1="1531.5" x2="2251.13" y2="1537.8" stroke="#000000" stroke-width="1.5" />
<line x1="2265.79" y1="1523.9" x2="2265.79" y2="1537.8" stroke="#000000" stroke-width="1.5" />
<line x1="2280.45" y1="1531.5" x2="2280.45" y2="1537.8" stroke="#000000" stroke-width="1.5" />
<line x1="2295.11" y1="1531.5" x2="2295.11" y2="1537.8" stroke="#000000" stroke-width="1.5" />
<line x1="2309.78" y1="1531.5" x2="2309.78" y2="1537.8" stroke="#000000" stroke-width="1.5" />
<line x1="2324.44" y1="1531.5" x2="2324.44" y2="1537.8" stroke="#000000" stroke-width="1.5" />
<line x1="2339.1" y1="1512.8" x2="2339.1" y2="1537.8" stroke="#000000" stroke-width="1.5" />
<line x1="2353.76" y1="1531.5" x2="2353.76" y2="1537.8" stroke="#000000" stroke-width="1.5" />
<line x1="2368.42" y1="1531.5" x2="2368.42" y2="1537.8" stroke="#000000" stroke-width="1.5" />
<line x1="2383.09" y1="1531.5" x2="2383.09" y2="1537.8" stroke="#000000" stroke-width="1.5" />
<line x1="2397.75" y1="1531.5" x2="2397.75" y2="1537.8" stroke="#000000" stroke-width="1.5" />
<line x1="2412.41" y1="1523.9" x2="2412.41" y2="1537.8" stroke="#000000" stroke-width="1.5" />
<line x1="2427.07" y1="1531.5" x2="2427.07" y2="1537.8" stroke="#000000" stroke-width="1.5" />
<line x1="2441.73" y1="1531.5" x2="2441.73" y2="1537.8" stroke="#000000" stroke-width="1.5" />
<line x1="2456.4" y1="1531.5" x2="2456.4" y2="1537.8" stroke="#000000" stroke-width="1.5" />
<line x1="2471.06" y1="1531.5" x2="2471.06" y2="1537.8" stroke="#000000" stroke-width="1.5" />
<line x1="2485.72" y1="1512.8" x2="2485.72" y2="1537.8" stroke="#000000" stroke-width="1.5" />
<line x1="2500.38" y1="1531.5" x2="2500.38" y2="1537.8" stroke="#000000" stroke-width="1.5" />
<line x1="2515.04" y1="1531.5" x2="2515.04" y2="1537.8" stroke="#000000" stroke-width="1.5" />
<line x1="2529.71" y1="1531.5" x2="2529.71" y2="1537.8" stroke="#000000" stroke-width="1.5" />
<line x1="2544.37" y1="1531.5" x2="2544.37" y2="1537.8" stroke="#000000" stroke-width="1.5" />
<line x1="2559.03" y1="1523.9" x2="2559.03" y2="1537.8" stroke="#000000" stroke-width="1.5" />
<line x1="2573.69" y1="1531.5" x2="2573.69" y2="1537.8" stroke="#000000" stroke-width="1.5" />
<line x1="2588.35" y1="1531.5" x2="2588.35" y2="1537.8" stroke="#000000" stroke-width="1.5" />
<line x1="2603.02" y1="1531.5" x2="2603.02" y2="1537.8" stroke="#000000" stroke-width="1.5" />
<line x1="2617.68" y1="1531.5" x2="2617.68" y2="1537.8" stroke="#000000" stroke-width="1.5" />
<line x1="2632.34" y1="1512.8" x2="2632.34" y2="1537.8" stroke="#000000" stroke-width="1.5" />
<line x1="2647" y1="1531.5" x2="2647" y2="1537.8" stroke="#000000" stroke-width="1.5" />
<line x1="2661.66" y1="1531.5" x2="2661.66" y2="1537.8" stroke="#000000" stroke-width="1.5" />
<line x1="2676.33" y1="1531.5" x2="2676.33" y2="1537.8" stroke="#000000" stroke-width="1.5" />
<line x1="2690.99" y1="1531.5" x2="2690.99" y2="1537.8" stroke="#000000" stroke-width="1.5" />
<line x1="2705.65" y1="1523.9" x2="2705.65" y2="1537.8" stroke="#000000" stroke-width="1.5" />
<line x1="2720.31" y1="1531.5" x2="2720.31" y2="1537.8" stroke="#000000" stroke-width="1.5" />
<line x1="2734.97" y1="1531.5" x2="2734.97" y2="1537.8" stroke="#000000" stroke-width="1.5" />
<line x1="2749.64" y1="1531.5" x2="2749.64" y2="1537.8" stroke="#000000" stroke-width="1.5" />
<line x1="2764.3" y1="1531.5" x2="2764.3" y2="1537.8" stroke="#000000" stroke-width="1.5" />
<line x1="2778.96" y1="1512.8" x2="2778.96" y2="1537.8" stroke="#000000" stroke-width="1.5" />
<line x1="2793.62" y1="1531.5" x2="2793.62" y2="1537.8" stroke="#000000" stroke-width="1.5" />
<line x1="2808.28" y1="1531.5" x2="2808.28" y2="1537.8" stroke="#000000" stroke-width="1.5" />
<line x1="2822.95" y1="1531.5" x2="2822.95" y2="1537.8" stroke="#000000" stroke-width="1.5" />
<line x1="2837.61" y1="1531.5" x2="2837.61" y2="1537.8" stroke="#000000" stroke-width="1.5" />
<line x1="2852.27" y1="1523.9" x2="2852.27" y2="1537.8" stroke="#000000" stroke-width="1.5" />
<line x1="2866.93" y1="1531.5" x2="2866.93" y2="1537.8" stroke="#000000" stroke-width="1.5" />
<line x1="2881.59" y1="1531.5" x2="2881.59" y2="1537.8" stroke="#000000" stroke-width="1.5" />
<line x1="2896.26" y1="1531.5" x2="2896.26" y2="1537.8" stroke="#000000" stroke-width="1.5" />
<line x1="2910.92" y1="1531.5" x2="2910.92" y2="1537.8" stroke="#000000" stroke-width="1.5" />
<rect x="847.4" y="1504.3" width="24.4" height="33.5" fill="#686868" />
<rect x="2826.8" y="1504.3" width="26.2" height="33.5" fill="#686868" />
<text x="874.7" y="1522.4" font-family="'Liberation Mono', monospace" font-size="18.8" letter-spacing="1.82" font-weight="normal" fill="#000000" text-anchor="start" stroke="#000" stroke-width="0.35">0</text><rect x="878.55" y="1513.72" width="3.58" height="4.48" fill="#a4a4a8"/>
<text x="1021.32" y="1522.4" font-family="'Liberation Mono', monospace" font-size="18.8" letter-spacing="1.82" font-weight="normal" fill="#000000" text-anchor="start" stroke="#000" stroke-width="0.35">5000000</text><rect x="1038.27" y="1513.72" width="3.58" height="4.48" fill="#a4a4a8"/><rect x="1051.37" y="1513.72" width="3.58" height="4.48" fill="#a4a4a8"/><rect x="1064.47" y="1513.72" width="3.58" height="4.48" fill="#a4a4a8"/><rect x="1077.57" y="1513.72" width="3.58" height="4.48" fill="#a4a4a8"/><rect x="1090.67" y="1513.72" width="3.58" height="4.48" fill="#a4a4a8"/><rect x="1103.77" y="1513.72" width="3.58" height="4.48" fill="#a4a4a8"/>
<text x="1167.94" y="1522.4" font-family="'Liberation Mono', monospace" font-size="18.8" letter-spacing="1.82" font-weight="normal" fill="#000000" text-anchor="start" stroke="#000" stroke-width="0.35">10000000</text><rect x="1184.89" y="1513.72" width="3.58" height="4.48" fill="#a4a4a8"/><rect x="1197.99" y="1513.72" width="3.58" height="4.48" fill="#a4a4a8"/><rect x="1211.09" y="1513.72" width="3.58" height="4.48" fill="#a4a4a8"/><rect x="1224.19" y="1513.72" width="3.58" height="4.48" fill="#a4a4a8"/><rect x="1237.29" y="1513.72" width="3.58" height="4.48" fill="#a4a4a8"/><rect x="1250.39" y="1513.72" width="3.58" height="4.48" fill="#a4a4a8"/><rect x="1263.49" y="1513.72" width="3.58" height="4.48" fill="#a4a4a8"/>
<text x="1314.56" y="1522.4" font-family="'Liberation Mono', monospace" font-size="18.8" letter-spacing="1.82" font-weight="normal" fill="#000000" text-anchor="start" stroke="#000" stroke-width="0.35">15000000</text><rect x="1344.61" y="1513.72" width="3.58" height="4.48" fill="#a4a4a8"/><rect x="1357.71" y="1513.72" width="3.58" height="4.48" fill="#a4a4a8"/><rect x="1370.81" y="1513.72" width="3.58" height="4.48" fill="#a4a4a8"/><rect x="1383.91" y="1513.72" width="3.58" height="4.48" fill="#a4a4a8"/><rect x="1397.01" y="1513.72" width="3.58" height="4.48" fill="#a4a4a8"/><rect x="1410.11" y="1513.72" width="3.58" height="4.48" fill="#a4a4a8"/>
<text x="1461.18" y="1522.4" font-family="'Liberation Mono', monospace" font-size="18.8" letter-spacing="1.82" font-weight="normal" fill="#000000" text-anchor="start" stroke="#000" stroke-width="0.35">20000000</text><rect x="1478.13" y="1513.72" width="3.58" height="4.48" fill="#a4a4a8"/><rect x="1491.23" y="1513.72" width="3.58" height="4.48" fill="#a4a4a8"/><rect x="1504.33" y="1513.72" width="3.58" height="4.48" fill="#a4a4a8"/><rect x="1517.43" y="1513.72" width="3.58" height="4.48" fill="#a4a4a8"/><rect x="1530.53" y="1513.72" width="3.58" height="4.48" fill="#a4a4a8"/><rect x="1543.63" y="1513.72" width="3.58" height="4.48" fill="#a4a4a8"/><rect x="1556.73" y="1513.72" width="3.58" height="4.48" fill="#a4a4a8"/>
<text x="1607.8" y="1522.4" font-family="'Liberation Mono', monospace" font-size="18.8" letter-spacing="1.82" font-weight="normal" fill="#000000" text-anchor="start" stroke="#000" stroke-width="0.35">25000000</text><rect x="1637.85" y="1513.72" width="3.58" height="4.48" fill="#a4a4a8"/><rect x="1650.95" y="1513.72" width="3.58" height="4.48" fill="#a4a4a8"/><rect x="1664.05" y="1513.72" width="3.58" height="4.48" fill="#a4a4a8"/><rect x="1677.15" y="1513.72" width="3.58" height="4.48" fill="#a4a4a8"/><rect x="1690.25" y="1513.72" width="3.58" height="4.48" fill="#a4a4a8"/><rect x="1703.35" y="1513.72" width="3.58" height="4.48" fill="#a4a4a8"/>
<text x="1754.42" y="1522.4" font-family="'Liberation Mono', monospace" font-size="18.8" letter-spacing="1.82" font-weight="normal" fill="#000000" text-anchor="start" stroke="#000" stroke-width="0.35">30000000</text><rect x="1771.37" y="1513.72" width="3.58" height="4.48" fill="#a4a4a8"/><rect x="1784.47" y="1513.72" width="3.58" height="4.48" fill="#a4a4a8"/><rect x="1797.57" y="1513.72" width="3.58" height="4.48" fill="#a4a4a8"/><rect x="1810.67" y="1513.72" width="3.58" height="4.48" fill="#a4a4a8"/><rect x="1823.77" y="1513.72" width="3.58" height="4.48" fill="#a4a4a8"/><rect x="1836.87" y="1513.72" width="3.58" height="4.48" fill="#a4a4a8"/><rect x="1849.97" y="1513.72" width="3.58" height="4.48" fill="#a4a4a8"/>
<text x="1901.04" y="1522.4" font-family="'Liberation Mono', monospace" font-size="18.8" letter-spacing="1.82" font-weight="normal" fill="#000000" text-anchor="start" stroke="#000" stroke-width="0.35">35000000</text><rect x="1931.09" y="1513.72" width="3.58" height="4.48" fill="#a4a4a8"/><rect x="1944.19" y="1513.72" width="3.58" height="4.48" fill="#a4a4a8"/><rect x="1957.29" y="1513.72" width="3.58" height="4.48" fill="#a4a4a8"/><rect x="1970.39" y="1513.72" width="3.58" height="4.48" fill="#a4a4a8"/><rect x="1983.49" y="1513.72" width="3.58" height="4.48" fill="#a4a4a8"/><rect x="1996.59" y="1513.72" width="3.58" height="4.48" fill="#a4a4a8"/>
<text x="2047.66" y="1522.4" font-family="'Liberation Mono', monospace" font-size="18.8" letter-spacing="1.82" font-weight="normal" fill="#000000" text-anchor="start" stroke="#000" stroke-width="0.35">40000000</text><rect x="2064.61" y="1513.72" width="3.58" height="4.48" fill="#a4a4a8"/><rect x="2077.71" y="1513.72" width="3.58" height="4.48" fill="#a4a4a8"/><rect x="2090.81" y="1513.72" width="3.58" height="4.48" fill="#a4a4a8"/><rect x="2103.91" y="1513.72" width="3.58" height="4.48" fill="#a4a4a8"/><rect x="2117.01" y="1513.72" width="3.58" height="4.48" fill="#a4a4a8"/><rect x="2130.11" y="1513.72" width="3.58" height="4.48" fill="#a4a4a8"/><rect x="2143.21" y="1513.72" width="3.58" height="4.48" fill="#a4a4a8"/>
<text x="2194.28" y="1522.4" font-family="'Liberation Mono', monospace" font-size="18.8" letter-spacing="1.82" font-weight="normal" fill="#000000" text-anchor="start" stroke="#000" stroke-width="0.35">45000000</text><rect x="2224.33" y="1513.72" width="3.58" height="4.48" fill="#a4a4a8"/><rect x="2237.43" y="1513.72" width="3.58" height="4.48" fill="#a4a4a8"/><rect x="2250.53" y="1513.72" width="3.58" height="4.48" fill="#a4a4a8"/><rect x="2263.63" y="1513.72" width="3.58" height="4.48" fill="#a4a4a8"/><rect x="2276.73" y="1513.72" width="3.58" height="4.48" fill="#a4a4a8"/><rect x="2289.83" y="1513.72" width="3.58" height="4.48" fill="#a4a4a8"/>
<text x="2340.9" y="1522.4" font-family="'Liberation Mono', monospace" font-size="18.8" letter-spacing="1.82" font-weight="normal" fill="#000000" text-anchor="start" stroke="#000" stroke-width="0.35">50000000</text><rect x="2357.85" y="1513.72" width="3.58" height="4.48" fill="#a4a4a8"/><rect x="2370.95" y="1513.72" width="3.58" height="4.48" fill="#a4a4a8"/><rect x="2384.05" y="1513.72" width="3.58" height="4.48" fill="#a4a4a8"/><rect x="2397.15" y="1513.72" width="3.58" height="4.48" fill="#a4a4a8"/><rect x="2410.25" y="1513.72" width="3.58" height="4.48" fill="#a4a4a8"/><rect x="2423.35" y="1513.72" width="3.58" height="4.48" fill="#a4a4a8"/><rect x="2436.45" y="1513.72" width="3.58" height="4.48" fill="#a4a4a8"/>
<text x="2487.52" y="1522.4" font-family="'Liberation Mono', monospace" font-size="18.8" letter-spacing="1.82" font-weight="normal" fill="#000000" text-anchor="start" stroke="#000" stroke-width="0.35">55000000</text><rect x="2517.57" y="1513.72" width="3.58" height="4.48" fill="#a4a4a8"/><rect x="2530.67" y="1513.72" width="3.58" height="4.48" fill="#a4a4a8"/><rect x="2543.77" y="1513.72" width="3.58" height="4.48" fill="#a4a4a8"/><rect x="2556.87" y="1513.72" width="3.58" height="4.48" fill="#a4a4a8"/><rect x="2569.97" y="1513.72" width="3.58" height="4.48" fill="#a4a4a8"/><rect x="2583.07" y="1513.72" width="3.58" height="4.48" fill="#a4a4a8"/>
<text x="2634.14" y="1522.4" font-family="'Liberation Mono', monospace" font-size="18.8" letter-spacing="1.82" font-weight="normal" fill="#000000" text-anchor="start" stroke="#000" stroke-width="0.35">60000000</text><rect x="2651.09" y="1513.72" width="3.58" height="4.48" fill="#a4a4a8"/><rect x="2664.19" y="1513.72" width="3.58" height="4.48" fill="#a4a4a8"/><rect x="2677.29" y="1513.72" width="3.58" height="4.48" fill="#a4a4a8"/><rect x="2690.39" y="1513.72" width="3.58" height="4.48" fill="#a4a4a8"/><rect x="2703.49" y="1513.72" width="3.58" height="4.48" fill="#a4a4a8"/><rect x="2716.59" y="1513.72" width="3.58" height="4.48" fill="#a4a4a8"/><rect x="2729.69" y="1513.72" width="3.58" height="4.48" fill="#a4a4a8"/>
<text x="2780.76" y="1522.4" font-family="'Liberation Mono', monospace" font-size="18.8" letter-spacing="1.82" font-weight="normal" fill="#000000" text-anchor="start" stroke="#000" stroke-width="0.35">65000000</text><rect x="2810.81" y="1513.72" width="3.58" height="4.48" fill="#a4a4a8"/><rect x="2823.91" y="1513.72" width="3.58" height="4.48" fill="#a4a4a8"/><rect x="2837.01" y="1513.72" width="3.58" height="4.48" fill="#686868"/><rect x="2850.11" y="1513.72" width="3.58" height="4.48" fill="#686868"/><rect x="2863.21" y="1513.72" width="3.58" height="4.48" fill="#686868"/><rect x="2876.31" y="1513.72" width="3.58" height="4.48" fill="#686868"/>
<line x1="2417.9" y1="1504.3" x2="2417.9" y2="1537.8" stroke="#ff00ff" stroke-width="1.6" />
<rect x="2825.2" y="1504.3" width="2.6" height="33.5" fill="#00ffff" />
</g>
<rect x="847.4" y="1538.2" width="2005.6" height="23.6" fill="url(#dith)" />
<rect x="847.4" y="1538.2" width="23.2" height="23.6" fill="#c0c0c0" />
<rect x="847.4" y="1538.2" width="23.2" height="1.5" fill="#ffffff" />
<rect x="847.4" y="1538.2" width="1.5" height="23.6" fill="#ffffff" />
<rect x="847.4" y="1560.3" width="23.2" height="1.5" fill="#202020" />
<rect x="869.1" y="1538.2" width="1.5" height="23.6" fill="#202020" />
<path d="M855.5,1550 l6,-6 v12 z" fill="#000000"/>
<rect x="2411" y="1538.2" width="12.7" height="23.6" fill="#c0c0c0" />
<rect x="2411" y="1538.2" width="12.7" height="1.5" fill="#ffffff" />
<rect x="2411" y="1538.2" width="1.5" height="23.6" fill="#ffffff" />
<rect x="2411" y="1560.3" width="12.7" height="1.5" fill="#202020" />
<rect x="2422.2" y="1538.2" width="1.5" height="23.6" fill="#202020" />
<rect x="2829.3" y="1538.2" width="22.6" height="23.6" fill="#c0c0c0" />
<rect x="2829.3" y="1538.2" width="22.6" height="1.5" fill="#ffffff" />
<rect x="2829.3" y="1538.2" width="1.5" height="23.6" fill="#ffffff" />
<rect x="2829.3" y="1560.3" width="22.6" height="1.5" fill="#202020" />
<rect x="2850.4" y="1538.2" width="1.5" height="23.6" fill="#202020" />
<path d="M2844.1,1550 l-6,-6 v12 z" fill="#000000"/>
<path d="M2861.4,1545.8 q-4,2 -4,5.4 q0,3.6 4,5.4 q4,-1.8 4,-5.4 q0,-3.4 -4,-5.4 z M2870,1545.8 q-4,2 -4,5.4 q0,3.6 4,5.4 q4,-1.8 4,-5.4 q0,-3.4 -4,-5.4 z" fill="none" stroke="#202020" stroke-width="1.3" stroke-dasharray="1.6 0.8"/>
<path d="M2862.6,1551 v8 M2868.7,1551 v-7.7 M2863.5,1548.5 l-2.5,2.7 l2.5,2.7 M2868,1548.5 l2.5,2.7 l-2.5,2.7" fill="none" stroke="#202020" stroke-width="1.4"/>
<rect x="846" y="1562.4" width="2032" height="1.6" fill="#ffffff" />
<rect x="0" y="1565.2" width="2878" height="1.4" fill="#8c8c8c" />
<path d="M1.6,1567.3 H148 Q150.6,1567.3 150.6,1570 V1603 Q150.6,1606.3 147,1606.3 H4.5 Q1.6,1606.3 1.6,1603 Z" fill="#c0c0c0"/>
<rect x="1.6" y="1567.3" width="1.6" height="37.5" fill="#ffffff" />
<rect x="148.9" y="1568.5" width="1.9" height="37" fill="#202020" />
<rect x="4.5" y="1605" width="145.5" height="1.9" fill="#202020" />
<g transform="translate(10.3,1576.5) scale(1.1)"><rect x="0" y="1" width="19" height="2" fill="#000070"/><rect x="0.5" y="0" width="1.3" height="2" fill="#000070"/><rect x="3.9" y="0" width="1.3" height="2" fill="#000070"/><rect x="7.3" y="0" width="1.3" height="2" fill="#000070"/><rect x="10.7" y="0" width="1.3" height="2" fill="#000070"/><rect x="14.1" y="0" width="1.3" height="2" fill="#000070"/><rect x="17.5" y="0" width="1.3" height="2" fill="#000070"/><rect x="0" y="5" width="3" height="5" fill="#e00000"/><polyline points="2,9.5 5,9.5 5,5.5 9.5,5.5 9.5,9.5 13,9.5 13,5.5 18.5,5.5" fill="none" stroke="#008000" stroke-width="1.6"/><polyline points="0.5,16 5,16 5,12 9.5,12 9.5,16 14,16 14,12 18.5,12" fill="none" stroke="#0000e0" stroke-width="1.6"/></g>
<text x="40.2" y="1592.1" font-family="'Liberation Mono', monospace" font-size="21" letter-spacing="0.9" font-weight="normal" fill="#000000" text-anchor="start" stroke="#000" stroke-width="0.35">Wave.1</text>
<path d="M128,1583 l11,9.5 M139,1583 l-11,9.5" stroke="#808080" stroke-width="1.6"/>
<rect x="0" y="1608" width="2878" height="1.6" fill="#ffffff" />
<rect x="1727" y="1613.4" width="28.6" height="1.6" fill="#8c8c8c" />
<rect x="1727" y="1613.4" width="1.4" height="3" fill="#8c8c8c" />
<rect x="1754.2" y="1614.5" width="1.4" height="2" fill="#ffffff" />
<rect x="1759.3" y="1613.4" width="244.9" height="1.6" fill="#8c8c8c" />
<rect x="1759.3" y="1613.4" width="1.4" height="3" fill="#8c8c8c" />
<rect x="2002.8" y="1614.5" width="1.4" height="2" fill="#ffffff" />
<rect x="2009" y="1613.4" width="541.6" height="1.6" fill="#8c8c8c" />
<rect x="2009" y="1613.4" width="1.4" height="3" fill="#8c8c8c" />
<rect x="2549.2" y="1614.5" width="1.4" height="2" fill="#ffffff" />
<rect x="2554.3" y="1613.4" width="150.3" height="1.6" fill="#8c8c8c" />
<rect x="2554.3" y="1613.4" width="1.4" height="3" fill="#8c8c8c" />
<rect x="2703.2" y="1614.5" width="1.4" height="2" fill="#ffffff" />
<rect x="2708.3" y="1613.4" width="163.7" height="1.6" fill="#8c8c8c" />
<rect x="2708.3" y="1613.4" width="1.4" height="3" fill="#8c8c8c" />
<rect x="2870.6" y="1614.5" width="1.4" height="2" fill="#ffffff" />
<rect x="2878" y="1560" width="2" height="56" fill="#e8e8e8" />
</svg></body></html>
